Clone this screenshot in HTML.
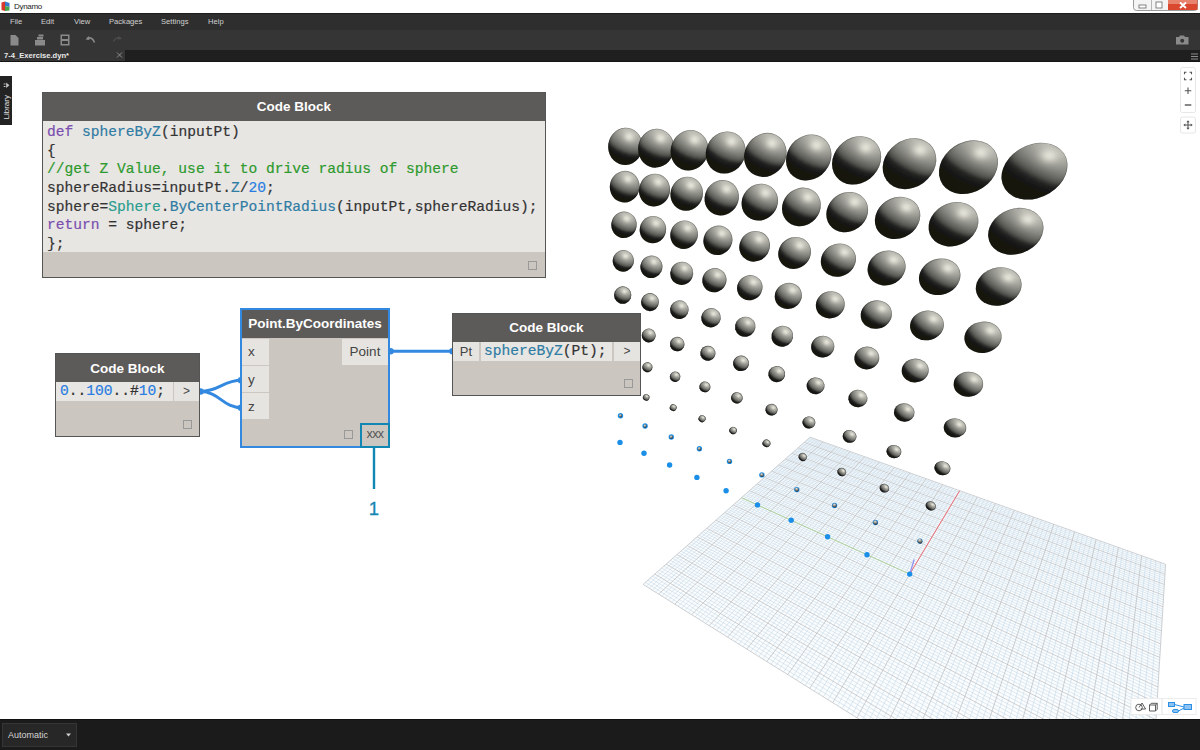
<!DOCTYPE html>
<html><head><meta charset="utf-8"><title>Dynamo</title>
<style>
*{box-sizing:border-box;margin:0;padding:0}
html,body{width:1200px;height:750px;overflow:hidden;background:#fff;font-family:"Liberation Sans",sans-serif}
#app{position:relative;width:1200px;height:750px;overflow:hidden;background:#fff}
.abs{position:absolute}
#title{left:0;top:0;width:1200px;height:13px;background:#fff}
#title .t{position:absolute;left:14px;top:1px;font-size:8px;line-height:11px;color:#222;letter-spacing:-0.3px}
#menu{left:0;top:13px;width:1200px;height:17px;background:#2e2e2e;border-top:1px solid #1c1c1c}
#menu span{position:absolute;top:3px;font-size:7.6px;line-height:10px;color:#d0d0d0}
#tool{left:0;top:30px;width:1200px;height:20px;background:#353535}
#tabs{left:0;top:50px;width:1200px;height:12px;background:#1f1f1f;border-bottom:1px solid #141414}
#tab{left:0;top:50px;width:125px;height:11px;background:#353535}
#tab .t{position:absolute;left:4px;top:1px;font-size:7.6px;line-height:10px;color:#e8e8e8;font-weight:bold}
#status{left:0;top:719px;width:1200px;height:31px;background:#1b1b1b;border-top:1px solid #111}
#auto{left:2px;top:723px;width:75px;height:24px;background:#272727;border:1px solid #353535}
#auto .t{position:absolute;left:5px;top:6px;font-size:9px;line-height:11px;color:#d4d4d4}
#lib{left:0;top:76px;width:12px;height:49px;background:#232323}
#lib .t{position:absolute;left:-16px;top:24px;width:44px;height:12px;transform:rotate(-90deg);font-size:7.5px;line-height:12px;color:#ddd;text-align:left}
.node{position:absolute;background:#cbc7c0;border:1px solid #555}
.node .hd{position:absolute;left:0;top:0;right:0;background:#5d5b59;color:#fff;font-weight:bold;text-align:center;font-size:13.5px}
.port{position:absolute;background:#e6e4e0;color:#444;font-size:13.5px}
.code{-webkit-text-stroke:0.2px;position:absolute;background:#e8e6e3;font-family:"Liberation Mono",monospace;font-size:14.6px;color:#333;white-space:pre}
.cb{position:absolute;width:9px;height:9px;border:1px solid #999}
.kw{color:#7a4fb0}.fn{color:#2f7ca3}.cm{color:#2e9a2e}.nm{color:#2a7de1}.cl{color:#2a9d8f}
</style></head><body><div id="app">
<svg class="abs" style="left:0;top:0" width="1200" height="750" viewBox="0 0 1200 750">
<polygon points="810.1,437.2 643.1,584.4 1145,897.5 1165.6,564.3" fill="#fafcfd"/>
<path d="M1145.3 891.8L645.5 582.3M1136.7 892.3L1160.7 562.5M1145.7 886.2L647.9 580.2M1128.6 887.3L1155.9 560.8M1146 880.7L650.2 578.1M1120.6 882.3L1151.1 559.1M1146.3 875.2L652.5 576.1M1112.7 877.4L1146.3 557.4M1147 864.6L657.1 572M1097.2 867.7L1136.9 554M1147.3 859.4L659.4 570M1089.6 862.9L1132.2 552.3M1147.6 854.2L661.6 568M1082.1 858.3L1127.6 550.7M1148 849.1L663.9 566.1M1074.7 853.6L1123 549M1148.6 839.2L668.3 562.2M1060.1 844.5L1113.9 545.8M1148.9 834.3L670.4 560.3M1052.9 840.1L1109.4 544.2M1149.2 829.5L672.6 558.4M1045.9 835.6L1104.9 542.6M1149.5 824.7L674.7 556.5M1038.9 831.3L1100.5 541M1150 815.4L678.9 552.8M1025.1 822.7L1091.7 537.9M1150.3 810.8L681 551M1018.4 818.5L1087.4 536.3M1150.6 806.3L683.1 549.1M1011.7 814.3L1083.1 534.8M1150.9 801.9L685.2 547.3M1005.1 810.2L1078.8 533.3M1151.4 793.1L689.2 543.7M992.2 802.2L1070.4 530.2M1151.7 788.8L691.2 542M985.8 798.2L1066.2 528.7M1152 784.6L693.2 540.2M979.5 794.2L1062 527.2M1152.2 780.4L695.2 538.5M973.3 790.4L1057.9 525.8M1152.7 772.2L699.1 535.1M961 782.7L1049.7 522.8M1153 768.1L701 533.4M955 779L1045.7 521.4M1153.2 764.1L702.9 531.7M949.1 775.2L1041.6 520M1153.5 760.2L704.8 530M943.2 771.6L1037.6 518.5M1153.9 752.5L708.6 526.7M931.6 764.3L1029.7 515.7M1154.2 748.6L710.4 525.1M925.9 760.8L1025.8 514.3M1154.4 744.9L712.2 523.4M920.2 757.3L1021.9 512.9M1154.6 741.2L714.1 521.8M914.6 753.8L1018.1 511.5M1155.1 733.9L717.7 518.7M903.7 746.9L1010.4 508.8M1155.3 730.3L719.5 517.1M898.2 743.5L1006.7 507.5M1155.5 726.7L721.2 515.5M892.9 740.2L1002.9 506.1M1155.8 723.2L723 514M887.6 736.9L999.2 504.8M1156.2 716.3L726.5 510.9M877.2 730.4L991.8 502.1M1156.4 712.9L728.2 509.4M872 727.2L988.1 500.8M1156.6 709.5L729.9 507.9M866.9 724L984.5 499.5M1156.8 706.2L731.6 506.4M861.9 720.9L980.9 498.2M1157.2 699.7L734.9 503.4M852 714.7L973.7 495.7M1157.4 696.4L736.6 502M847.1 711.6L970.2 494.4M1157.6 693.3L738.3 500.5M842.3 708.6L966.6 493.2M1157.8 690.1L739.9 499.1M837.5 705.6L963.1 491.9M1158.2 683.9L743.1 496.2M828 699.7L956.2 489.4M1158.4 680.8L744.7 494.8M823.4 696.8L952.8 488.2M1158.6 677.8L746.3 493.4M818.8 694L949.4 487M1158.8 674.8L747.9 492M814.2 691.1L946 485.8M1159.1 669L751 489.3M805.2 685.5L939.3 483.4M1159.3 666.1L752.5 487.9M800.8 682.7L935.9 482.2M1159.5 663.2L754.1 486.6M796.4 680L932.6 481M1159.7 660.3L755.6 485.2M792.1 677.3L929.3 479.8M1160 654.7L758.6 482.6M783.5 671.9L922.8 477.5M1160.2 652L760.1 481.3M779.2 669.3L919.6 476.3M1160.3 649.3L761.6 480M775.1 666.7L916.4 475.2M1160.5 646.6L763.1 478.7M770.9 664.1L913.2 474.1M1160.8 641.2L766 476.1M762.7 659L906.9 471.8M1161 638.6L767.4 474.8M758.7 656.5L903.8 470.7M1161.2 636L768.9 473.6M754.7 654L900.7 469.6M1161.3 633.4L770.3 472.3M750.7 651.5L897.6 468.5M1161.6 628.4L773.1 469.8M742.9 646.6L891.4 466.3M1161.8 625.9L774.5 468.6M739 644.2L888.4 465.2M1161.9 623.4L775.9 467.4M735.2 641.8L885.4 464.1M1162.1 620.9L777.2 466.2M731.4 639.4L882.4 463M1162.4 616.1L780 463.8M723.9 634.8L876.4 460.9M1162.5 613.7L781.3 462.6M720.2 632.4L873.5 459.9M1162.7 611.3L782.7 461.4M716.5 630.2L870.5 458.8M1162.8 609L784 460.2M712.9 627.9L867.6 457.8M1163.1 604.4L786.6 457.9M705.7 623.4L861.9 455.7M1163.3 602.1L787.9 456.7M702.1 621.2L859 454.7M1163.4 599.8L789.2 455.6M698.6 619L856.1 453.7M1163.5 597.6L790.5 454.5M695.1 616.8L853.3 452.6M1163.8 593.2L793.1 452.2M688.3 612.5L847.7 450.6M1164 591L794.3 451.1M684.9 610.4L844.9 449.6M1164.1 588.8L795.6 450M681.5 608.3L842.1 448.7M1164.2 586.7L796.9 448.9M678.2 606.2L839.4 447.7M1164.5 582.4L799.3 446.7M671.5 602.1L833.9 445.7M1164.6 580.4L800.6 445.6M668.3 600.1L831.2 444.8M1164.7 578.3L801.8 444.5M665.1 598.1L828.5 443.8M1164.9 576.2L803 443.5M661.8 596.1L825.9 442.8M1165.1 572.2L805.4 441.4M655.5 592.1L820.5 440.9M1165.2 570.2L806.6 440.3M652.4 590.1L817.9 440M1165.4 568.2L807.8 439.3M649.3 588.2L815.3 439.1M1165.5 566.2L808.9 438.2M646.2 586.3L812.7 438.1" stroke="#bfd5e4" stroke-width="0.5" fill="none"/>
<path d="M1145 897.5L643.1 584.4M1145 897.5L1165.6 564.3M1146.7 869.9L654.8 574M1104.9 872.5L1141.6 555.7M1148.3 844.1L666.1 564.1M1067.3 849L1118.4 547.4M1149.8 820L676.8 554.6M1032 827L1096.1 539.4M1151.2 797.5L687.2 545.5M998.6 806.2L1074.6 531.7M1152.5 776.3L697.1 536.8M967.1 786.5L1053.8 524.3M1153.7 756.3L706.7 528.3M937.3 767.9L1033.7 517.1M1154.9 737.5L715.9 520.2M909.1 750.3L1014.3 510.2M1156 719.7L724.7 512.4M882.4 733.6L995.5 503.5M1157 702.9L733.3 504.9M856.9 717.8L977.3 497M1158 687L741.5 497.7M832.7 702.7L959.7 490.7M1158.9 671.9L749.5 490.7M809.7 688.3L942.6 484.6M1159.8 657.5L757.1 483.9M787.7 674.6L926.1 478.7M1160.7 643.9L764.5 477.4M766.8 661.5L910 472.9M1161.5 630.9L771.7 471.1M746.8 649L894.5 467.4M1162.2 618.5L778.6 465M727.6 637.1L879.4 462M1163 606.7L785.3 459M709.3 625.6L864.7 456.7M1163.7 595.4L791.8 453.3M691.7 614.7L850.5 451.6M1164.4 584.5L798.1 447.8M674.8 604.2L836.6 446.7M1165 574.2L804.2 442.4M658.7 594.1L823.2 441.9M1165.6 564.3L810.1 437.2M643.1 584.4L810.1 437.2" stroke="#b3b8bd" stroke-width="0.65" fill="none"/>
<path d="M909.7 574.1L959.7 490.7" stroke="#f0707a" stroke-width="1"/>
<path d="M909.7 574.1L741.5 497.7" stroke="#a6d492" stroke-width="0.8"/>
<path d="M909.7 574.1L914.2 559.5" stroke="#8c8cf2" stroke-width="1.2"/>
<defs><clipPath id="uc"><circle r="1"/></clipPath><filter id="bl" x="-0.1" y="-0.1" width="1.2" height="1.2"><feGaussianBlur stdDeviation="0.06"/></filter><filter id="bl2" x="-0.1" y="-0.1" width="1.2" height="1.2"><feGaussianBlur stdDeviation="0.08"/></filter><radialGradient id="sp"><stop offset="0.000" stop-color="#fffff2" stop-opacity="0.656"/><stop offset="0.083" stop-color="#fffff2" stop-opacity="0.632"/><stop offset="0.167" stop-color="#fffff2" stop-opacity="0.563"/><stop offset="0.250" stop-color="#fffff2" stop-opacity="0.466"/><stop offset="0.333" stop-color="#fffff2" stop-opacity="0.358"/><stop offset="0.417" stop-color="#fffff2" stop-opacity="0.258"/><stop offset="0.500" stop-color="#fffff2" stop-opacity="0.175"/><stop offset="0.583" stop-color="#fffff2" stop-opacity="0.114"/><stop offset="0.667" stop-color="#fffff2" stop-opacity="0.072"/><stop offset="0.750" stop-color="#fffff2" stop-opacity="0.044"/><stop offset="0.833" stop-color="#fffff2" stop-opacity="0.026"/><stop offset="0.917" stop-color="#fffff2" stop-opacity="0.014"/><stop offset="1.000" stop-color="#fffff2" stop-opacity="0.000"/></radialGradient><radialGradient id="tg" cx="0.62" cy="0.3" r="0.8"><stop offset="0" stop-color="#e8e8e0"/><stop offset="0.45" stop-color="#8a8a84"/><stop offset="1" stop-color="#151515"/></radialGradient></defs>
<circle cx="620" cy="442.4" r="2.7" fill="#1b8fe8"/>
<circle cx="620.5" cy="415.7" r="2.7" fill="#1b8fe8"/>
<g transform="matrix(0.692 -1.394 1.395 0.694 620.5 415.7)"><circle r="1" fill="url(#tg)"/></g>
<circle cx="644" cy="453.3" r="2.7" fill="#1b8fe8"/>
<g transform="matrix(1.364 -2.881 2.882 1.362 621 387.7)"><circle r="1" fill="url(#tg)"/></g>
<circle cx="645.1" cy="426" r="2.7" fill="#1b8fe8"/>
<g transform="matrix(0.775 -1.407 1.413 0.780 645.1 426)"><circle r="1" fill="url(#tg)"/></g>
<circle cx="669.6" cy="465" r="2.7" fill="#1b8fe8"/>
<g transform="matrix(2.021 -4.475 4.465 2.012 621.6 358.4)" clip-path="url(#uc)"><g filter="url(#bl2)"><rect x="-1.1" y="-1.1" width="2.2" height="2.2" fill="#121211"/><ellipse cx="-0.272" rx="0.591" ry="0.937" fill="#181817"/><rect x="-0.451" y="-1.1" width="1.551" height="2.2" fill="#181817"/><ellipse cx="-0.136" rx="0.621" ry="0.985" fill="#222220"/><rect x="-0.226" y="-1.1" width="1.326" height="2.2" fill="#222220"/><ellipse cx="0.000" rx="0.631" ry="1.000" fill="#353532"/><rect x="0.000" y="-1.1" width="1.100" height="2.2" fill="#353532"/><ellipse cx="0.035" rx="0.630" ry="0.999" fill="#4d4d4a"/><rect x="0.059" y="-1.1" width="1.041" height="2.2" fill="#4d4d4a"/><ellipse cx="0.117" rx="0.624" ry="0.989" fill="#666662"/><rect x="0.194" y="-1.1" width="0.906" height="2.2" fill="#666662"/><ellipse cx="0.235" rx="0.601" ry="0.953" fill="#7f7f79"/><rect x="0.390" y="-1.1" width="0.710" height="2.2" fill="#7f7f79"/><ellipse cx="0.386" rx="0.548" ry="0.868" fill="#979791"/><rect x="0.641" y="-1.1" width="0.459" height="2.2" fill="#979791"/><ellipse cx="0.567" rx="0.431" ry="0.683" fill="#b0b0a8"/><rect x="0.941" y="-1.1" width="0.159" height="2.2" fill="#b0b0a8"/></g><ellipse cx="0.417" cy="0.029" rx="0.679" ry="0.75" fill="url(#sp)"/><circle r="1" fill="none" stroke="#1a1a1a" stroke-opacity="0.55" stroke-width="1.2" vector-effect="non-scaling-stroke"/></g>
<g transform="matrix(1.532 -2.917 2.927 1.529 646.2 397.4)" clip-path="url(#uc)"><g filter="url(#bl2)"><rect x="-1.1" y="-1.1" width="2.2" height="2.2" fill="#121211"/><ellipse cx="-0.262" rx="0.620" ry="0.937" fill="#181817"/><rect x="-0.467" y="-1.1" width="1.567" height="2.2" fill="#181817"/><ellipse cx="-0.131" rx="0.652" ry="0.985" fill="#222220"/><rect x="-0.234" y="-1.1" width="1.334" height="2.2" fill="#222220"/><ellipse cx="0.000" rx="0.662" ry="1.000" fill="#353532"/><rect x="0.000" y="-1.1" width="1.100" height="2.2" fill="#353532"/><ellipse cx="0.034" rx="0.662" ry="0.999" fill="#4d4d4a"/><rect x="0.061" y="-1.1" width="1.039" height="2.2" fill="#4d4d4a"/><ellipse cx="0.113" rx="0.655" ry="0.989" fill="#666662"/><rect x="0.201" y="-1.1" width="0.899" height="2.2" fill="#666662"/><ellipse cx="0.227" rx="0.631" ry="0.953" fill="#7f7f79"/><rect x="0.404" y="-1.1" width="0.696" height="2.2" fill="#7f7f79"/><ellipse cx="0.372" rx="0.575" ry="0.868" fill="#979791"/><rect x="0.663" y="-1.1" width="0.437" height="2.2" fill="#979791"/><ellipse cx="0.547" rx="0.452" ry="0.683" fill="#b0b0a8"/><rect x="0.975" y="-1.1" width="0.125" height="2.2" fill="#b0b0a8"/></g><ellipse cx="0.400" cy="0.029" rx="0.685" ry="0.75" fill="url(#sp)"/><circle r="1" fill="none" stroke="#1a1a1a" stroke-opacity="0.55" stroke-width="1.2" vector-effect="non-scaling-stroke"/></g>
<circle cx="671.3" cy="437" r="2.7" fill="#1b8fe8"/>
<g transform="matrix(0.866 -1.417 1.432 0.875 671.3 437)"><circle r="1" fill="url(#tg)"/></g>
<g transform="matrix(2.668 -6.192 6.147 2.654 622.1 327.5)" clip-path="url(#uc)"><g filter="url(#bl)"><rect x="-1.1" y="-1.1" width="2.2" height="2.2" fill="#121211"/><ellipse cx="-0.282" rx="0.556" ry="0.937" fill="#161615"/><rect x="-0.435" y="-1.1" width="1.535" height="2.2" fill="#161615"/><ellipse cx="-0.188" rx="0.577" ry="0.972" fill="#1d1d1b"/><rect x="-0.290" y="-1.1" width="1.390" height="2.2" fill="#1d1d1b"/><ellipse cx="-0.094" rx="0.589" ry="0.993" fill="#232322"/><rect x="-0.145" y="-1.1" width="1.245" height="2.2" fill="#232322"/><ellipse cx="0.000" rx="0.593" ry="1.000" fill="#2d2d2b"/><rect x="0.000" y="-1.1" width="1.100" height="2.2" fill="#2d2d2b"/><ellipse cx="0.011" rx="0.593" ry="1.000" fill="#3a3a37"/><rect x="0.017" y="-1.1" width="1.083" height="2.2" fill="#3a3a37"/><ellipse cx="0.037" rx="0.593" ry="0.999" fill="#464643"/><rect x="0.057" y="-1.1" width="1.043" height="2.2" fill="#464643"/><ellipse cx="0.074" rx="0.591" ry="0.996" fill="#52524f"/><rect x="0.114" y="-1.1" width="0.986" height="2.2" fill="#52524f"/><ellipse cx="0.121" rx="0.587" ry="0.989" fill="#5f5f5a"/><rect x="0.187" y="-1.1" width="0.913" height="2.2" fill="#5f5f5a"/><ellipse cx="0.178" rx="0.579" ry="0.975" fill="#6b6b66"/><rect x="0.275" y="-1.1" width="0.825" height="2.2" fill="#6b6b66"/><ellipse cx="0.244" rx="0.565" ry="0.953" fill="#777772"/><rect x="0.376" y="-1.1" width="0.724" height="2.2" fill="#777772"/><ellipse cx="0.318" rx="0.545" ry="0.919" fill="#84847e"/><rect x="0.490" y="-1.1" width="0.610" height="2.2" fill="#84847e"/><ellipse cx="0.400" rx="0.515" ry="0.868" fill="#90908a"/><rect x="0.617" y="-1.1" width="0.483" height="2.2" fill="#90908a"/><ellipse cx="0.490" rx="0.471" ry="0.793" fill="#9c9c95"/><rect x="0.756" y="-1.1" width="0.344" height="2.2" fill="#9c9c95"/><ellipse cx="0.588" rx="0.405" ry="0.683" fill="#a9a9a1"/><rect x="0.907" y="-1.1" width="0.193" height="2.2" fill="#a9a9a1"/><ellipse cx="0.693" rx="0.302" ry="0.509" fill="#b5b5ad"/></g><ellipse cx="0.437" cy="0.029" rx="0.672" ry="0.75" fill="url(#sp)"/><circle r="1" fill="none" stroke="#1a1a1a" stroke-opacity="0.55" stroke-width="1.2" vector-effect="non-scaling-stroke"/></g>
<circle cx="696.9" cy="477.4" r="2.7" fill="#1b8fe8"/>
<g transform="matrix(2.276 -4.542 4.545 2.253 647.4 367.2)" clip-path="url(#uc)"><g filter="url(#bl)"><rect x="-1.1" y="-1.1" width="2.2" height="2.2" fill="#121211"/><ellipse cx="-0.273" rx="0.587" ry="0.937" fill="#181817"/><rect x="-0.449" y="-1.1" width="1.549" height="2.2" fill="#181817"/><ellipse cx="-0.136" rx="0.617" ry="0.985" fill="#222220"/><rect x="-0.225" y="-1.1" width="1.325" height="2.2" fill="#222220"/><ellipse cx="0.000" rx="0.627" ry="1.000" fill="#2d2d2b"/><rect x="0.000" y="-1.1" width="1.100" height="2.2" fill="#2d2d2b"/><ellipse cx="0.011" rx="0.627" ry="1.000" fill="#3a3a37"/><rect x="0.018" y="-1.1" width="1.082" height="2.2" fill="#3a3a37"/><ellipse cx="0.035" rx="0.626" ry="0.999" fill="#464643"/><rect x="0.058" y="-1.1" width="1.042" height="2.2" fill="#464643"/><ellipse cx="0.071" rx="0.624" ry="0.996" fill="#52524f"/><rect x="0.118" y="-1.1" width="0.982" height="2.2" fill="#52524f"/><ellipse cx="0.117" rx="0.620" ry="0.989" fill="#5f5f5a"/><rect x="0.193" y="-1.1" width="0.907" height="2.2" fill="#5f5f5a"/><ellipse cx="0.172" rx="0.612" ry="0.975" fill="#6b6b66"/><rect x="0.284" y="-1.1" width="0.816" height="2.2" fill="#6b6b66"/><ellipse cx="0.236" rx="0.598" ry="0.953" fill="#777772"/><rect x="0.389" y="-1.1" width="0.711" height="2.2" fill="#777772"/><ellipse cx="0.308" rx="0.576" ry="0.919" fill="#84847e"/><rect x="0.507" y="-1.1" width="0.593" height="2.2" fill="#84847e"/><ellipse cx="0.387" rx="0.544" ry="0.868" fill="#90908a"/><rect x="0.638" y="-1.1" width="0.462" height="2.2" fill="#90908a"/><ellipse cx="0.474" rx="0.497" ry="0.793" fill="#9c9c95"/><rect x="0.782" y="-1.1" width="0.318" height="2.2" fill="#9c9c95"/><ellipse cx="0.569" rx="0.428" ry="0.683" fill="#a9a9a1"/><rect x="0.937" y="-1.1" width="0.163" height="2.2" fill="#a9a9a1"/><ellipse cx="0.670" rx="0.319" ry="0.509" fill="#b5b5ad"/></g><ellipse cx="0.420" cy="0.029" rx="0.678" ry="0.75" fill="url(#sp)"/><circle r="1" fill="none" stroke="#1a1a1a" stroke-opacity="0.55" stroke-width="1.2" vector-effect="non-scaling-stroke"/></g>
<g transform="matrix(1.717 -2.946 2.974 1.712 673.2 407.6)" clip-path="url(#uc)"><g filter="url(#bl2)"><rect x="-1.1" y="-1.1" width="2.2" height="2.2" fill="#121211"/><ellipse cx="-0.264" rx="0.616" ry="0.937" fill="#181817"/><rect x="-0.464" y="-1.1" width="1.564" height="2.2" fill="#181817"/><ellipse cx="-0.132" rx="0.647" ry="0.985" fill="#222220"/><rect x="-0.232" y="-1.1" width="1.332" height="2.2" fill="#222220"/><ellipse cx="0.000" rx="0.657" ry="1.000" fill="#353532"/><rect x="0.000" y="-1.1" width="1.100" height="2.2" fill="#353532"/><ellipse cx="0.034" rx="0.657" ry="0.999" fill="#4d4d4a"/><rect x="0.060" y="-1.1" width="1.040" height="2.2" fill="#4d4d4a"/><ellipse cx="0.113" rx="0.650" ry="0.989" fill="#666662"/><rect x="0.200" y="-1.1" width="0.900" height="2.2" fill="#666662"/><ellipse cx="0.228" rx="0.626" ry="0.953" fill="#7f7f79"/><rect x="0.402" y="-1.1" width="0.698" height="2.2" fill="#7f7f79"/><ellipse cx="0.375" rx="0.570" ry="0.868" fill="#979791"/><rect x="0.660" y="-1.1" width="0.440" height="2.2" fill="#979791"/><ellipse cx="0.550" rx="0.449" ry="0.683" fill="#b0b0a8"/><rect x="0.969" y="-1.1" width="0.131" height="2.2" fill="#b0b0a8"/></g><ellipse cx="0.405" cy="0.029" rx="0.683" ry="0.75" fill="url(#sp)"/><circle r="1" fill="none" stroke="#1a1a1a" stroke-opacity="0.55" stroke-width="1.2" vector-effect="non-scaling-stroke"/></g>
<g transform="matrix(3.311 -8.057 7.930 3.298 622.7 295.1)" clip-path="url(#uc)"><g filter="url(#bl)"><rect x="-1.1" y="-1.1" width="2.2" height="2.2" fill="#121211"/><ellipse cx="-0.292" rx="0.517" ry="0.937" fill="#161615"/><rect x="-0.420" y="-1.1" width="1.520" height="2.2" fill="#161615"/><ellipse cx="-0.194" rx="0.537" ry="0.972" fill="#1d1d1b"/><rect x="-0.280" y="-1.1" width="1.380" height="2.2" fill="#1d1d1b"/><ellipse cx="-0.097" rx="0.549" ry="0.993" fill="#232322"/><rect x="-0.140" y="-1.1" width="1.240" height="2.2" fill="#232322"/><ellipse cx="0.000" rx="0.552" ry="1.000" fill="#2d2d2b"/><rect x="0.000" y="-1.1" width="1.100" height="2.2" fill="#2d2d2b"/><ellipse cx="0.011" rx="0.552" ry="1.000" fill="#3a3a37"/><rect x="0.017" y="-1.1" width="1.083" height="2.2" fill="#3a3a37"/><ellipse cx="0.038" rx="0.552" ry="0.999" fill="#464643"/><rect x="0.055" y="-1.1" width="1.045" height="2.2" fill="#464643"/><ellipse cx="0.076" rx="0.550" ry="0.996" fill="#52524f"/><rect x="0.110" y="-1.1" width="0.990" height="2.2" fill="#52524f"/><ellipse cx="0.125" rx="0.546" ry="0.989" fill="#5f5f5a"/><rect x="0.180" y="-1.1" width="0.920" height="2.2" fill="#5f5f5a"/><ellipse cx="0.184" rx="0.539" ry="0.975" fill="#6b6b66"/><rect x="0.265" y="-1.1" width="0.835" height="2.2" fill="#6b6b66"/><ellipse cx="0.252" rx="0.527" ry="0.953" fill="#777772"/><rect x="0.363" y="-1.1" width="0.737" height="2.2" fill="#777772"/><ellipse cx="0.329" rx="0.508" ry="0.919" fill="#84847e"/><rect x="0.474" y="-1.1" width="0.626" height="2.2" fill="#84847e"/><ellipse cx="0.414" rx="0.479" ry="0.868" fill="#90908a"/><rect x="0.596" y="-1.1" width="0.504" height="2.2" fill="#90908a"/><ellipse cx="0.508" rx="0.438" ry="0.793" fill="#9c9c95"/><rect x="0.731" y="-1.1" width="0.369" height="2.2" fill="#9c9c95"/><ellipse cx="0.609" rx="0.377" ry="0.683" fill="#a9a9a1"/><rect x="0.876" y="-1.1" width="0.224" height="2.2" fill="#a9a9a1"/><ellipse cx="0.717" rx="0.281" ry="0.509" fill="#b5b5ad"/></g><ellipse cx="0.458" cy="0.029" rx="0.663" ry="0.75" fill="url(#sp)"/><circle r="1" fill="none" stroke="#1a1a1a" stroke-opacity="0.55" stroke-width="1.2" vector-effect="non-scaling-stroke"/></g>
<circle cx="699.4" cy="448.8" r="2.7" fill="#1b8fe8"/>
<g transform="matrix(0.966 -1.422 1.452 0.978 699.4 448.8)"><circle r="1" fill="url(#tg)"/></g>
<g transform="matrix(3.013 -6.302 6.270 2.964 648.7 335.5)" clip-path="url(#uc)"><g filter="url(#bl)"><rect x="-1.1" y="-1.1" width="2.2" height="2.2" fill="#121211"/><ellipse cx="-0.283" rx="0.551" ry="0.937" fill="#161615"/><rect x="-0.433" y="-1.1" width="1.533" height="2.2" fill="#161615"/><ellipse cx="-0.189" rx="0.572" ry="0.972" fill="#1d1d1b"/><rect x="-0.289" y="-1.1" width="1.389" height="2.2" fill="#1d1d1b"/><ellipse cx="-0.094" rx="0.584" ry="0.993" fill="#232322"/><rect x="-0.144" y="-1.1" width="1.244" height="2.2" fill="#232322"/><ellipse cx="0.000" rx="0.588" ry="1.000" fill="#2d2d2b"/><rect x="0.000" y="-1.1" width="1.100" height="2.2" fill="#2d2d2b"/><ellipse cx="0.011" rx="0.588" ry="1.000" fill="#3a3a37"/><rect x="0.017" y="-1.1" width="1.083" height="2.2" fill="#3a3a37"/><ellipse cx="0.037" rx="0.588" ry="0.999" fill="#464643"/><rect x="0.056" y="-1.1" width="1.044" height="2.2" fill="#464643"/><ellipse cx="0.074" rx="0.586" ry="0.996" fill="#52524f"/><rect x="0.113" y="-1.1" width="0.987" height="2.2" fill="#52524f"/><ellipse cx="0.122" rx="0.582" ry="0.989" fill="#5f5f5a"/><rect x="0.186" y="-1.1" width="0.914" height="2.2" fill="#5f5f5a"/><ellipse cx="0.179" rx="0.574" ry="0.975" fill="#6b6b66"/><rect x="0.273" y="-1.1" width="0.827" height="2.2" fill="#6b6b66"/><ellipse cx="0.245" rx="0.561" ry="0.953" fill="#777772"/><rect x="0.374" y="-1.1" width="0.726" height="2.2" fill="#777772"/><ellipse cx="0.319" rx="0.541" ry="0.919" fill="#84847e"/><rect x="0.488" y="-1.1" width="0.612" height="2.2" fill="#84847e"/><ellipse cx="0.402" rx="0.511" ry="0.868" fill="#90908a"/><rect x="0.615" y="-1.1" width="0.485" height="2.2" fill="#90908a"/><ellipse cx="0.492" rx="0.467" ry="0.793" fill="#9c9c95"/><rect x="0.753" y="-1.1" width="0.347" height="2.2" fill="#9c9c95"/><ellipse cx="0.590" rx="0.402" ry="0.683" fill="#a9a9a1"/><rect x="0.903" y="-1.1" width="0.197" height="2.2" fill="#a9a9a1"/><ellipse cx="0.696" rx="0.300" ry="0.509" fill="#b5b5ad"/></g><ellipse cx="0.441" cy="0.029" rx="0.670" ry="0.75" fill="url(#sp)"/><circle r="1" fill="none" stroke="#1a1a1a" stroke-opacity="0.55" stroke-width="1.2" vector-effect="non-scaling-stroke"/></g>
<circle cx="726.1" cy="490.7" r="2.7" fill="#1b8fe8"/>
<g transform="matrix(2.558 -4.602 4.630 2.520 675.1 376.7)" clip-path="url(#uc)"><g filter="url(#bl)"><rect x="-1.1" y="-1.1" width="2.2" height="2.2" fill="#121211"/><ellipse cx="-0.274" rx="0.582" ry="0.937" fill="#181817"/><rect x="-0.447" y="-1.1" width="1.547" height="2.2" fill="#181817"/><ellipse cx="-0.137" rx="0.612" ry="0.985" fill="#222220"/><rect x="-0.223" y="-1.1" width="1.323" height="2.2" fill="#222220"/><ellipse cx="0.000" rx="0.621" ry="1.000" fill="#2d2d2b"/><rect x="0.000" y="-1.1" width="1.100" height="2.2" fill="#2d2d2b"/><ellipse cx="0.011" rx="0.621" ry="1.000" fill="#3a3a37"/><rect x="0.018" y="-1.1" width="1.082" height="2.2" fill="#3a3a37"/><ellipse cx="0.036" rx="0.621" ry="0.999" fill="#464643"/><rect x="0.058" y="-1.1" width="1.042" height="2.2" fill="#464643"/><ellipse cx="0.072" rx="0.619" ry="0.996" fill="#52524f"/><rect x="0.117" y="-1.1" width="0.983" height="2.2" fill="#52524f"/><ellipse cx="0.118" rx="0.614" ry="0.989" fill="#5f5f5a"/><rect x="0.192" y="-1.1" width="0.908" height="2.2" fill="#5f5f5a"/><ellipse cx="0.173" rx="0.606" ry="0.975" fill="#6b6b66"/><rect x="0.282" y="-1.1" width="0.818" height="2.2" fill="#6b6b66"/><ellipse cx="0.237" rx="0.592" ry="0.953" fill="#777772"/><rect x="0.386" y="-1.1" width="0.714" height="2.2" fill="#777772"/><ellipse cx="0.309" rx="0.571" ry="0.919" fill="#84847e"/><rect x="0.504" y="-1.1" width="0.596" height="2.2" fill="#84847e"/><ellipse cx="0.389" rx="0.539" ry="0.868" fill="#90908a"/><rect x="0.634" y="-1.1" width="0.466" height="2.2" fill="#90908a"/><ellipse cx="0.477" rx="0.493" ry="0.793" fill="#9c9c95"/><rect x="0.777" y="-1.1" width="0.323" height="2.2" fill="#9c9c95"/><ellipse cx="0.572" rx="0.424" ry="0.683" fill="#a9a9a1"/><rect x="0.932" y="-1.1" width="0.168" height="2.2" fill="#a9a9a1"/><ellipse cx="0.674" rx="0.316" ry="0.509" fill="#b5b5ad"/></g><ellipse cx="0.425" cy="0.030" rx="0.676" ry="0.75" fill="url(#sp)"/><circle r="1" fill="none" stroke="#1a1a1a" stroke-opacity="0.55" stroke-width="1.2" vector-effect="non-scaling-stroke"/></g>
<g transform="matrix(3.957 -10.095 9.821 3.958 623.3 260.9)" clip-path="url(#uc)"><g filter="url(#bl)"><rect x="-1.1" y="-1.1" width="2.2" height="2.2" fill="#121211"/><ellipse cx="-0.301" rx="0.476" ry="0.937" fill="#161615"/><rect x="-0.406" y="-1.1" width="1.506" height="2.2" fill="#161615"/><ellipse cx="-0.201" rx="0.494" ry="0.972" fill="#1d1d1b"/><rect x="-0.271" y="-1.1" width="1.371" height="2.2" fill="#1d1d1b"/><ellipse cx="-0.100" rx="0.505" ry="0.993" fill="#232322"/><rect x="-0.135" y="-1.1" width="1.235" height="2.2" fill="#232322"/><ellipse cx="0.000" rx="0.508" ry="1.000" fill="#2d2d2b"/><rect x="0.000" y="-1.1" width="1.100" height="2.2" fill="#2d2d2b"/><ellipse cx="0.012" rx="0.508" ry="1.000" fill="#3a3a37"/><rect x="0.016" y="-1.1" width="1.084" height="2.2" fill="#3a3a37"/><ellipse cx="0.039" rx="0.508" ry="0.999" fill="#464643"/><rect x="0.053" y="-1.1" width="1.047" height="2.2" fill="#464643"/><ellipse cx="0.079" rx="0.506" ry="0.996" fill="#52524f"/><rect x="0.106" y="-1.1" width="0.994" height="2.2" fill="#52524f"/><ellipse cx="0.130" rx="0.503" ry="0.989" fill="#5f5f5a"/><rect x="0.175" y="-1.1" width="0.925" height="2.2" fill="#5f5f5a"/><ellipse cx="0.190" rx="0.496" ry="0.975" fill="#6b6b66"/><rect x="0.257" y="-1.1" width="0.843" height="2.2" fill="#6b6b66"/><ellipse cx="0.261" rx="0.485" ry="0.953" fill="#777772"/><rect x="0.352" y="-1.1" width="0.748" height="2.2" fill="#777772"/><ellipse cx="0.340" rx="0.467" ry="0.919" fill="#84847e"/><rect x="0.459" y="-1.1" width="0.641" height="2.2" fill="#84847e"/><ellipse cx="0.428" rx="0.441" ry="0.868" fill="#90908a"/><rect x="0.577" y="-1.1" width="0.523" height="2.2" fill="#90908a"/><ellipse cx="0.524" rx="0.403" ry="0.793" fill="#9c9c95"/><rect x="0.707" y="-1.1" width="0.393" height="2.2" fill="#9c9c95"/><ellipse cx="0.629" rx="0.347" ry="0.683" fill="#a9a9a1"/><rect x="0.848" y="-1.1" width="0.252" height="2.2" fill="#a9a9a1"/><ellipse cx="0.741" rx="0.259" ry="0.509" fill="#b5b5ad"/><rect x="1.000" y="-1.1" width="0.100" height="2.2" fill="#b5b5ad"/></g><ellipse cx="0.480" cy="0.029" rx="0.654" ry="0.75" fill="url(#sp)"/><circle r="1" fill="none" stroke="#1a1a1a" stroke-opacity="0.35" stroke-width="1.2" vector-effect="non-scaling-stroke"/></g>
<g transform="matrix(1.920 -2.968 3.025 1.914 702.1 418.7)" clip-path="url(#uc)"><g filter="url(#bl2)"><rect x="-1.1" y="-1.1" width="2.2" height="2.2" fill="#121211"/><ellipse cx="-0.266" rx="0.609" ry="0.937" fill="#181817"/><rect x="-0.461" y="-1.1" width="1.561" height="2.2" fill="#181817"/><ellipse cx="-0.133" rx="0.640" ry="0.985" fill="#222220"/><rect x="-0.230" y="-1.1" width="1.330" height="2.2" fill="#222220"/><ellipse cx="0.000" rx="0.650" ry="1.000" fill="#353532"/><rect x="0.000" y="-1.1" width="1.100" height="2.2" fill="#353532"/><ellipse cx="0.035" rx="0.650" ry="0.999" fill="#4d4d4a"/><rect x="0.060" y="-1.1" width="1.040" height="2.2" fill="#4d4d4a"/><ellipse cx="0.114" rx="0.643" ry="0.989" fill="#666662"/><rect x="0.198" y="-1.1" width="0.902" height="2.2" fill="#666662"/><ellipse cx="0.230" rx="0.620" ry="0.953" fill="#7f7f79"/><rect x="0.398" y="-1.1" width="0.702" height="2.2" fill="#7f7f79"/><ellipse cx="0.378" rx="0.564" ry="0.868" fill="#979791"/><rect x="0.654" y="-1.1" width="0.446" height="2.2" fill="#979791"/><ellipse cx="0.555" rx="0.444" ry="0.683" fill="#b0b0a8"/><rect x="0.961" y="-1.1" width="0.139" height="2.2" fill="#b0b0a8"/></g><ellipse cx="0.410" cy="0.030" rx="0.681" ry="0.75" fill="url(#sp)"/><circle r="1" fill="none" stroke="#1a1a1a" stroke-opacity="0.55" stroke-width="1.2" vector-effect="non-scaling-stroke"/></g>
<g transform="matrix(3.750 -8.221 8.105 3.670 650 302.1)" clip-path="url(#uc)"><g filter="url(#bl)"><rect x="-1.1" y="-1.1" width="2.2" height="2.2" fill="#121211"/><ellipse cx="-0.293" rx="0.512" ry="0.937" fill="#161615"/><rect x="-0.418" y="-1.1" width="1.518" height="2.2" fill="#161615"/><ellipse cx="-0.195" rx="0.531" ry="0.972" fill="#1d1d1b"/><rect x="-0.279" y="-1.1" width="1.379" height="2.2" fill="#1d1d1b"/><ellipse cx="-0.098" rx="0.543" ry="0.993" fill="#232322"/><rect x="-0.139" y="-1.1" width="1.239" height="2.2" fill="#232322"/><ellipse cx="0.000" rx="0.546" ry="1.000" fill="#2d2d2b"/><rect x="0.000" y="-1.1" width="1.100" height="2.2" fill="#2d2d2b"/><ellipse cx="0.012" rx="0.546" ry="1.000" fill="#3a3a37"/><rect x="0.016" y="-1.1" width="1.084" height="2.2" fill="#3a3a37"/><ellipse cx="0.038" rx="0.546" ry="0.999" fill="#464643"/><rect x="0.054" y="-1.1" width="1.046" height="2.2" fill="#464643"/><ellipse cx="0.077" rx="0.544" ry="0.996" fill="#52524f"/><rect x="0.109" y="-1.1" width="0.991" height="2.2" fill="#52524f"/><ellipse cx="0.126" rx="0.540" ry="0.989" fill="#5f5f5a"/><rect x="0.180" y="-1.1" width="0.920" height="2.2" fill="#5f5f5a"/><ellipse cx="0.185" rx="0.533" ry="0.975" fill="#6b6b66"/><rect x="0.264" y="-1.1" width="0.836" height="2.2" fill="#6b6b66"/><ellipse cx="0.254" rx="0.521" ry="0.953" fill="#777772"/><rect x="0.361" y="-1.1" width="0.739" height="2.2" fill="#777772"/><ellipse cx="0.331" rx="0.502" ry="0.919" fill="#84847e"/><rect x="0.471" y="-1.1" width="0.629" height="2.2" fill="#84847e"/><ellipse cx="0.416" rx="0.474" ry="0.868" fill="#90908a"/><rect x="0.593" y="-1.1" width="0.507" height="2.2" fill="#90908a"/><ellipse cx="0.510" rx="0.433" ry="0.793" fill="#9c9c95"/><rect x="0.727" y="-1.1" width="0.373" height="2.2" fill="#9c9c95"/><ellipse cx="0.612" rx="0.373" ry="0.683" fill="#a9a9a1"/><rect x="0.872" y="-1.1" width="0.228" height="2.2" fill="#a9a9a1"/><ellipse cx="0.721" rx="0.278" ry="0.509" fill="#b5b5ad"/></g><ellipse cx="0.463" cy="0.030" rx="0.662" ry="0.75" fill="url(#sp)"/><circle r="1" fill="none" stroke="#1a1a1a" stroke-opacity="0.55" stroke-width="1.2" vector-effect="non-scaling-stroke"/></g>
<circle cx="729.5" cy="461.4" r="2.7" fill="#1b8fe8"/>
<g transform="matrix(1.074 -1.422 1.475 1.090 729.5 461.4)"><circle r="1" fill="url(#tg)"/></g>
<g transform="matrix(3.396 -6.406 6.403 3.306 677.2 344.1)" clip-path="url(#uc)"><g filter="url(#bl)"><rect x="-1.1" y="-1.1" width="2.2" height="2.2" fill="#121211"/><ellipse cx="-0.285" rx="0.545" ry="0.937" fill="#161615"/><rect x="-0.430" y="-1.1" width="1.530" height="2.2" fill="#161615"/><ellipse cx="-0.190" rx="0.566" ry="0.972" fill="#1d1d1b"/><rect x="-0.287" y="-1.1" width="1.387" height="2.2" fill="#1d1d1b"/><ellipse cx="-0.095" rx="0.578" ry="0.993" fill="#232322"/><rect x="-0.143" y="-1.1" width="1.243" height="2.2" fill="#232322"/><ellipse cx="0.000" rx="0.582" ry="1.000" fill="#2d2d2b"/><rect x="0.000" y="-1.1" width="1.100" height="2.2" fill="#2d2d2b"/><ellipse cx="0.011" rx="0.582" ry="1.000" fill="#3a3a37"/><rect x="0.017" y="-1.1" width="1.083" height="2.2" fill="#3a3a37"/><ellipse cx="0.037" rx="0.581" ry="0.999" fill="#464643"/><rect x="0.056" y="-1.1" width="1.044" height="2.2" fill="#464643"/><ellipse cx="0.075" rx="0.579" ry="0.996" fill="#52524f"/><rect x="0.113" y="-1.1" width="0.987" height="2.2" fill="#52524f"/><ellipse cx="0.122" rx="0.575" ry="0.989" fill="#5f5f5a"/><rect x="0.185" y="-1.1" width="0.915" height="2.2" fill="#5f5f5a"/><ellipse cx="0.180" rx="0.567" ry="0.975" fill="#6b6b66"/><rect x="0.272" y="-1.1" width="0.828" height="2.2" fill="#6b6b66"/><ellipse cx="0.246" rx="0.554" ry="0.953" fill="#777772"/><rect x="0.372" y="-1.1" width="0.728" height="2.2" fill="#777772"/><ellipse cx="0.321" rx="0.534" ry="0.919" fill="#84847e"/><rect x="0.485" y="-1.1" width="0.615" height="2.2" fill="#84847e"/><ellipse cx="0.404" rx="0.505" ry="0.868" fill="#90908a"/><rect x="0.611" y="-1.1" width="0.489" height="2.2" fill="#90908a"/><ellipse cx="0.495" rx="0.461" ry="0.793" fill="#9c9c95"/><rect x="0.749" y="-1.1" width="0.351" height="2.2" fill="#9c9c95"/><ellipse cx="0.594" rx="0.397" ry="0.683" fill="#a9a9a1"/><rect x="0.898" y="-1.1" width="0.202" height="2.2" fill="#a9a9a1"/><ellipse cx="0.700" rx="0.296" ry="0.509" fill="#b5b5ad"/></g><ellipse cx="0.446" cy="0.030" rx="0.668" ry="0.75" fill="url(#sp)"/><circle r="1" fill="none" stroke="#1a1a1a" stroke-opacity="0.55" stroke-width="1.2" vector-effect="non-scaling-stroke"/></g>
<circle cx="757.5" cy="504.9" r="2.7" fill="#1b8fe8"/>
<g transform="matrix(4.615 -12.343 11.823 4.647 624 224.8)" clip-path="url(#uc)"><g filter="url(#bl)"><rect x="-1.1" y="-1.1" width="2.2" height="2.2" fill="#121211"/><ellipse cx="-0.310" rx="0.432" ry="0.937" fill="#141413"/><rect x="-0.395" y="-1.1" width="1.495" height="2.2" fill="#141413"/><ellipse cx="-0.248" rx="0.443" ry="0.960" fill="#181817"/><rect x="-0.316" y="-1.1" width="1.416" height="2.2" fill="#181817"/><ellipse cx="-0.186" rx="0.451" ry="0.978" fill="#1c1c1b"/><rect x="-0.237" y="-1.1" width="1.337" height="2.2" fill="#1c1c1b"/><ellipse cx="-0.124" rx="0.457" ry="0.990" fill="#20201f"/><rect x="-0.158" y="-1.1" width="1.258" height="2.2" fill="#20201f"/><ellipse cx="-0.062" rx="0.461" ry="0.998" fill="#242423"/><rect x="-0.079" y="-1.1" width="1.179" height="2.2" fill="#242423"/><ellipse cx="0.000" rx="0.462" ry="1.000" fill="#2d2d2b"/><rect x="0.000" y="-1.1" width="1.100" height="2.2" fill="#2d2d2b"/><ellipse cx="0.012" rx="0.462" ry="1.000" fill="#3a3a37"/><rect x="0.016" y="-1.1" width="1.084" height="2.2" fill="#3a3a37"/><ellipse cx="0.040" rx="0.461" ry="0.999" fill="#464643"/><rect x="0.051" y="-1.1" width="1.049" height="2.2" fill="#464643"/><ellipse cx="0.081" rx="0.460" ry="0.996" fill="#52524f"/><rect x="0.103" y="-1.1" width="0.997" height="2.2" fill="#52524f"/><ellipse cx="0.133" rx="0.456" ry="0.989" fill="#5f5f5a"/><rect x="0.170" y="-1.1" width="0.930" height="2.2" fill="#5f5f5a"/><ellipse cx="0.196" rx="0.450" ry="0.975" fill="#6b6b66"/><rect x="0.249" y="-1.1" width="0.851" height="2.2" fill="#6b6b66"/><ellipse cx="0.268" rx="0.440" ry="0.953" fill="#777772"/><rect x="0.341" y="-1.1" width="0.759" height="2.2" fill="#777772"/><ellipse cx="0.350" rx="0.424" ry="0.919" fill="#84847e"/><rect x="0.445" y="-1.1" width="0.655" height="2.2" fill="#84847e"/><ellipse cx="0.441" rx="0.401" ry="0.868" fill="#90908a"/><rect x="0.560" y="-1.1" width="0.540" height="2.2" fill="#90908a"/><ellipse cx="0.540" rx="0.366" ry="0.793" fill="#9c9c95"/><rect x="0.686" y="-1.1" width="0.414" height="2.2" fill="#9c9c95"/><ellipse cx="0.648" rx="0.315" ry="0.683" fill="#a9a9a1"/><rect x="0.823" y="-1.1" width="0.277" height="2.2" fill="#a9a9a1"/><ellipse cx="0.763" rx="0.235" ry="0.509" fill="#b5b5ad"/><rect x="0.970" y="-1.1" width="0.130" height="2.2" fill="#b5b5ad"/></g><ellipse cx="0.503" cy="0.029" rx="0.645" ry="0.75" fill="url(#sp)"/><circle r="1" fill="none" stroke="#1a1a1a" stroke-opacity="0.35" stroke-width="1.2" vector-effect="non-scaling-stroke"/></g>
<g transform="matrix(2.869 -4.654 4.723 2.814 704.9 386.9)" clip-path="url(#uc)"><g filter="url(#bl)"><rect x="-1.1" y="-1.1" width="2.2" height="2.2" fill="#121211"/><ellipse cx="-0.276" rx="0.575" ry="0.937" fill="#181817"/><rect x="-0.443" y="-1.1" width="1.543" height="2.2" fill="#181817"/><ellipse cx="-0.138" rx="0.604" ry="0.985" fill="#222220"/><rect x="-0.222" y="-1.1" width="1.322" height="2.2" fill="#222220"/><ellipse cx="0.000" rx="0.614" ry="1.000" fill="#2d2d2b"/><rect x="0.000" y="-1.1" width="1.100" height="2.2" fill="#2d2d2b"/><ellipse cx="0.011" rx="0.614" ry="1.000" fill="#3a3a37"/><rect x="0.017" y="-1.1" width="1.083" height="2.2" fill="#3a3a37"/><ellipse cx="0.036" rx="0.613" ry="0.999" fill="#464643"/><rect x="0.058" y="-1.1" width="1.042" height="2.2" fill="#464643"/><ellipse cx="0.072" rx="0.611" ry="0.996" fill="#52524f"/><rect x="0.116" y="-1.1" width="0.984" height="2.2" fill="#52524f"/><ellipse cx="0.119" rx="0.607" ry="0.989" fill="#5f5f5a"/><rect x="0.191" y="-1.1" width="0.909" height="2.2" fill="#5f5f5a"/><ellipse cx="0.175" rx="0.598" ry="0.975" fill="#6b6b66"/><rect x="0.280" y="-1.1" width="0.820" height="2.2" fill="#6b6b66"/><ellipse cx="0.239" rx="0.585" ry="0.953" fill="#777772"/><rect x="0.383" y="-1.1" width="0.717" height="2.2" fill="#777772"/><ellipse cx="0.312" rx="0.564" ry="0.919" fill="#84847e"/><rect x="0.500" y="-1.1" width="0.600" height="2.2" fill="#84847e"/><ellipse cx="0.392" rx="0.532" ry="0.868" fill="#90908a"/><rect x="0.629" y="-1.1" width="0.471" height="2.2" fill="#90908a"/><ellipse cx="0.481" rx="0.487" ry="0.793" fill="#9c9c95"/><rect x="0.771" y="-1.1" width="0.329" height="2.2" fill="#9c9c95"/><ellipse cx="0.577" rx="0.419" ry="0.683" fill="#a9a9a1"/><rect x="0.925" y="-1.1" width="0.175" height="2.2" fill="#a9a9a1"/><ellipse cx="0.680" rx="0.312" ry="0.509" fill="#b5b5ad"/></g><ellipse cx="0.431" cy="0.030" rx="0.674" ry="0.75" fill="url(#sp)"/><circle r="1" fill="none" stroke="#1a1a1a" stroke-opacity="0.55" stroke-width="1.2" vector-effect="non-scaling-stroke"/></g>
<g transform="matrix(4.496 -10.330 10.057 4.385 651.4 266.8)" clip-path="url(#uc)"><g filter="url(#bl)"><rect x="-1.1" y="-1.1" width="2.2" height="2.2" fill="#121211"/><ellipse cx="-0.303" rx="0.469" ry="0.937" fill="#161615"/><rect x="-0.404" y="-1.1" width="1.504" height="2.2" fill="#161615"/><ellipse cx="-0.202" rx="0.487" ry="0.972" fill="#1d1d1b"/><rect x="-0.270" y="-1.1" width="1.370" height="2.2" fill="#1d1d1b"/><ellipse cx="-0.101" rx="0.498" ry="0.993" fill="#232322"/><rect x="-0.135" y="-1.1" width="1.235" height="2.2" fill="#232322"/><ellipse cx="0.000" rx="0.501" ry="1.000" fill="#2d2d2b"/><rect x="0.000" y="-1.1" width="1.100" height="2.2" fill="#2d2d2b"/><ellipse cx="0.012" rx="0.501" ry="1.000" fill="#3a3a37"/><rect x="0.016" y="-1.1" width="1.084" height="2.2" fill="#3a3a37"/><ellipse cx="0.039" rx="0.501" ry="0.999" fill="#464643"/><rect x="0.053" y="-1.1" width="1.047" height="2.2" fill="#464643"/><ellipse cx="0.079" rx="0.499" ry="0.996" fill="#52524f"/><rect x="0.106" y="-1.1" width="0.994" height="2.2" fill="#52524f"/><ellipse cx="0.130" rx="0.495" ry="0.989" fill="#5f5f5a"/><rect x="0.174" y="-1.1" width="0.926" height="2.2" fill="#5f5f5a"/><ellipse cx="0.191" rx="0.489" ry="0.975" fill="#6b6b66"/><rect x="0.255" y="-1.1" width="0.845" height="2.2" fill="#6b6b66"/><ellipse cx="0.262" rx="0.478" ry="0.953" fill="#777772"/><rect x="0.350" y="-1.1" width="0.750" height="2.2" fill="#777772"/><ellipse cx="0.342" rx="0.460" ry="0.919" fill="#84847e"/><rect x="0.456" y="-1.1" width="0.644" height="2.2" fill="#84847e"/><ellipse cx="0.430" rx="0.435" ry="0.868" fill="#90908a"/><rect x="0.574" y="-1.1" width="0.526" height="2.2" fill="#90908a"/><ellipse cx="0.527" rx="0.397" ry="0.793" fill="#9c9c95"/><rect x="0.704" y="-1.1" width="0.396" height="2.2" fill="#9c9c95"/><ellipse cx="0.632" rx="0.342" ry="0.683" fill="#a9a9a1"/><rect x="0.844" y="-1.1" width="0.256" height="2.2" fill="#a9a9a1"/><ellipse cx="0.745" rx="0.255" ry="0.509" fill="#b5b5ad"/><rect x="0.995" y="-1.1" width="0.105" height="2.2" fill="#b5b5ad"/></g><ellipse cx="0.485" cy="0.030" rx="0.652" ry="0.75" fill="url(#sp)"/><circle r="1" fill="none" stroke="#1a1a1a" stroke-opacity="0.35" stroke-width="1.2" vector-effect="non-scaling-stroke"/></g>
<g transform="matrix(2.143 -2.982 3.083 2.134 733.1 430.5)" clip-path="url(#uc)"><g filter="url(#bl2)"><rect x="-1.1" y="-1.1" width="2.2" height="2.2" fill="#121211"/><ellipse cx="-0.269" rx="0.601" ry="0.937" fill="#181817"/><rect x="-0.456" y="-1.1" width="1.556" height="2.2" fill="#181817"/><ellipse cx="-0.134" rx="0.631" ry="0.985" fill="#222220"/><rect x="-0.228" y="-1.1" width="1.328" height="2.2" fill="#222220"/><ellipse cx="0.000" rx="0.641" ry="1.000" fill="#353532"/><rect x="0.000" y="-1.1" width="1.100" height="2.2" fill="#353532"/><ellipse cx="0.035" rx="0.640" ry="0.999" fill="#4d4d4a"/><rect x="0.059" y="-1.1" width="1.041" height="2.2" fill="#4d4d4a"/><ellipse cx="0.115" rx="0.634" ry="0.989" fill="#666662"/><rect x="0.196" y="-1.1" width="0.904" height="2.2" fill="#666662"/><ellipse cx="0.232" rx="0.611" ry="0.953" fill="#7f7f79"/><rect x="0.394" y="-1.1" width="0.706" height="2.2" fill="#7f7f79"/><ellipse cx="0.381" rx="0.556" ry="0.868" fill="#979791"/><rect x="0.648" y="-1.1" width="0.452" height="2.2" fill="#979791"/><ellipse cx="0.560" rx="0.438" ry="0.683" fill="#b0b0a8"/><rect x="0.952" y="-1.1" width="0.148" height="2.2" fill="#b0b0a8"/></g><ellipse cx="0.418" cy="0.030" rx="0.679" ry="0.75" fill="url(#sp)"/><circle r="1" fill="none" stroke="#1a1a1a" stroke-opacity="0.55" stroke-width="1.2" vector-effect="non-scaling-stroke"/></g>
<g transform="matrix(4.240 -8.382 8.297 4.082 679.4 309.7)" clip-path="url(#uc)"><g filter="url(#bl)"><rect x="-1.1" y="-1.1" width="2.2" height="2.2" fill="#121211"/><ellipse cx="-0.295" rx="0.504" ry="0.937" fill="#161615"/><rect x="-0.415" y="-1.1" width="1.515" height="2.2" fill="#161615"/><ellipse cx="-0.197" rx="0.524" ry="0.972" fill="#1d1d1b"/><rect x="-0.277" y="-1.1" width="1.377" height="2.2" fill="#1d1d1b"/><ellipse cx="-0.098" rx="0.535" ry="0.993" fill="#232322"/><rect x="-0.138" y="-1.1" width="1.238" height="2.2" fill="#232322"/><ellipse cx="0.000" rx="0.539" ry="1.000" fill="#2d2d2b"/><rect x="0.000" y="-1.1" width="1.100" height="2.2" fill="#2d2d2b"/><ellipse cx="0.012" rx="0.538" ry="1.000" fill="#3a3a37"/><rect x="0.016" y="-1.1" width="1.084" height="2.2" fill="#3a3a37"/><ellipse cx="0.038" rx="0.538" ry="0.999" fill="#464643"/><rect x="0.054" y="-1.1" width="1.046" height="2.2" fill="#464643"/><ellipse cx="0.077" rx="0.536" ry="0.996" fill="#52524f"/><rect x="0.109" y="-1.1" width="0.991" height="2.2" fill="#52524f"/><ellipse cx="0.127" rx="0.532" ry="0.989" fill="#5f5f5a"/><rect x="0.179" y="-1.1" width="0.921" height="2.2" fill="#5f5f5a"/><ellipse cx="0.186" rx="0.525" ry="0.975" fill="#6b6b66"/><rect x="0.262" y="-1.1" width="0.838" height="2.2" fill="#6b6b66"/><ellipse cx="0.255" rx="0.513" ry="0.953" fill="#777772"/><rect x="0.359" y="-1.1" width="0.741" height="2.2" fill="#777772"/><ellipse cx="0.333" rx="0.495" ry="0.919" fill="#84847e"/><rect x="0.469" y="-1.1" width="0.631" height="2.2" fill="#84847e"/><ellipse cx="0.419" rx="0.467" ry="0.868" fill="#90908a"/><rect x="0.590" y="-1.1" width="0.510" height="2.2" fill="#90908a"/><ellipse cx="0.513" rx="0.427" ry="0.793" fill="#9c9c95"/><rect x="0.723" y="-1.1" width="0.377" height="2.2" fill="#9c9c95"/><ellipse cx="0.615" rx="0.368" ry="0.683" fill="#a9a9a1"/><rect x="0.867" y="-1.1" width="0.233" height="2.2" fill="#a9a9a1"/><ellipse cx="0.725" rx="0.274" ry="0.509" fill="#b5b5ad"/></g><ellipse cx="0.468" cy="0.030" rx="0.659" ry="0.75" fill="url(#sp)"/><circle r="1" fill="none" stroke="#1a1a1a" stroke-opacity="0.35" stroke-width="1.2" vector-effect="non-scaling-stroke"/></g>
<circle cx="761.9" cy="474.9" r="2.7" fill="#1b8fe8"/>
<g transform="matrix(1.192 -1.417 1.502 1.212 761.9 474.9)"><circle r="1" fill="url(#tg)"/></g>
<g transform="matrix(5.294 -14.844 13.944 5.383 624.7 186.7)" clip-path="url(#uc)"><g filter="url(#bl)"><rect x="-1.1" y="-1.1" width="2.2" height="2.2" fill="#121211"/><ellipse cx="-0.319" rx="0.386" ry="0.937" fill="#141413"/><rect x="-0.384" y="-1.1" width="1.484" height="2.2" fill="#141413"/><ellipse cx="-0.255" rx="0.396" ry="0.960" fill="#181817"/><rect x="-0.307" y="-1.1" width="1.407" height="2.2" fill="#181817"/><ellipse cx="-0.191" rx="0.403" ry="0.978" fill="#1c1c1b"/><rect x="-0.230" y="-1.1" width="1.330" height="2.2" fill="#1c1c1b"/><ellipse cx="-0.128" rx="0.408" ry="0.990" fill="#20201f"/><rect x="-0.154" y="-1.1" width="1.254" height="2.2" fill="#20201f"/><ellipse cx="-0.064" rx="0.411" ry="0.998" fill="#242423"/><rect x="-0.077" y="-1.1" width="1.177" height="2.2" fill="#242423"/><ellipse cx="0.000" rx="0.412" ry="1.000" fill="#2d2d2b"/><rect x="0.000" y="-1.1" width="1.100" height="2.2" fill="#2d2d2b"/><ellipse cx="0.013" rx="0.412" ry="1.000" fill="#3a3a37"/><rect x="0.015" y="-1.1" width="1.085" height="2.2" fill="#3a3a37"/><ellipse cx="0.041" rx="0.412" ry="0.999" fill="#464643"/><rect x="0.050" y="-1.1" width="1.050" height="2.2" fill="#464643"/><ellipse cx="0.083" rx="0.411" ry="0.996" fill="#52524f"/><rect x="0.101" y="-1.1" width="0.999" height="2.2" fill="#52524f"/><ellipse cx="0.137" rx="0.408" ry="0.989" fill="#5f5f5a"/><rect x="0.165" y="-1.1" width="0.935" height="2.2" fill="#5f5f5a"/><ellipse cx="0.201" rx="0.402" ry="0.975" fill="#6b6b66"/><rect x="0.243" y="-1.1" width="0.857" height="2.2" fill="#6b6b66"/><ellipse cx="0.276" rx="0.393" ry="0.953" fill="#777772"/><rect x="0.332" y="-1.1" width="0.768" height="2.2" fill="#777772"/><ellipse cx="0.360" rx="0.379" ry="0.919" fill="#84847e"/><rect x="0.433" y="-1.1" width="0.667" height="2.2" fill="#84847e"/><ellipse cx="0.453" rx="0.358" ry="0.868" fill="#90908a"/><rect x="0.546" y="-1.1" width="0.554" height="2.2" fill="#90908a"/><ellipse cx="0.555" rx="0.327" ry="0.793" fill="#9c9c95"/><rect x="0.668" y="-1.1" width="0.432" height="2.2" fill="#9c9c95"/><ellipse cx="0.665" rx="0.282" ry="0.683" fill="#a9a9a1"/><rect x="0.802" y="-1.1" width="0.298" height="2.2" fill="#a9a9a1"/><ellipse cx="0.784" rx="0.210" ry="0.509" fill="#b5b5ad"/><rect x="0.945" y="-1.1" width="0.155" height="2.2" fill="#b5b5ad"/></g><ellipse cx="0.525" cy="0.030" rx="0.634" ry="0.75" fill="url(#sp)"/><circle r="1" fill="none" stroke="#1a1a1a" stroke-opacity="0.35" stroke-width="1.2" vector-effect="non-scaling-stroke"/></g>
<g transform="matrix(3.821 -6.501 6.550 3.685 707.9 353.3)" clip-path="url(#uc)"><g filter="url(#bl)"><rect x="-1.1" y="-1.1" width="2.2" height="2.2" fill="#121211"/><ellipse cx="-0.287" rx="0.537" ry="0.937" fill="#161615"/><rect x="-0.427" y="-1.1" width="1.527" height="2.2" fill="#161615"/><ellipse cx="-0.191" rx="0.557" ry="0.972" fill="#1d1d1b"/><rect x="-0.285" y="-1.1" width="1.385" height="2.2" fill="#1d1d1b"/><ellipse cx="-0.096" rx="0.569" ry="0.993" fill="#232322"/><rect x="-0.142" y="-1.1" width="1.242" height="2.2" fill="#232322"/><ellipse cx="0.000" rx="0.573" ry="1.000" fill="#2d2d2b"/><rect x="0.000" y="-1.1" width="1.100" height="2.2" fill="#2d2d2b"/><ellipse cx="0.011" rx="0.573" ry="1.000" fill="#3a3a37"/><rect x="0.017" y="-1.1" width="1.083" height="2.2" fill="#3a3a37"/><ellipse cx="0.037" rx="0.572" ry="0.999" fill="#464643"/><rect x="0.056" y="-1.1" width="1.044" height="2.2" fill="#464643"/><ellipse cx="0.075" rx="0.571" ry="0.996" fill="#52524f"/><rect x="0.112" y="-1.1" width="0.988" height="2.2" fill="#52524f"/><ellipse cx="0.123" rx="0.567" ry="0.989" fill="#5f5f5a"/><rect x="0.184" y="-1.1" width="0.916" height="2.2" fill="#5f5f5a"/><ellipse cx="0.181" rx="0.559" ry="0.975" fill="#6b6b66"/><rect x="0.270" y="-1.1" width="0.830" height="2.2" fill="#6b6b66"/><ellipse cx="0.248" rx="0.546" ry="0.953" fill="#777772"/><rect x="0.369" y="-1.1" width="0.731" height="2.2" fill="#777772"/><ellipse cx="0.324" rx="0.527" ry="0.919" fill="#84847e"/><rect x="0.482" y="-1.1" width="0.618" height="2.2" fill="#84847e"/><ellipse cx="0.407" rx="0.497" ry="0.868" fill="#90908a"/><rect x="0.607" y="-1.1" width="0.493" height="2.2" fill="#90908a"/><ellipse cx="0.499" rx="0.455" ry="0.793" fill="#9c9c95"/><rect x="0.743" y="-1.1" width="0.357" height="2.2" fill="#9c9c95"/><ellipse cx="0.598" rx="0.392" ry="0.683" fill="#a9a9a1"/><rect x="0.891" y="-1.1" width="0.209" height="2.2" fill="#a9a9a1"/><ellipse cx="0.705" rx="0.292" ry="0.509" fill="#b5b5ad"/></g><ellipse cx="0.452" cy="0.030" rx="0.666" ry="0.75" fill="url(#sp)"/><circle r="1" fill="none" stroke="#1a1a1a" stroke-opacity="0.55" stroke-width="1.2" vector-effect="non-scaling-stroke"/></g>
<circle cx="791.2" cy="520.2" r="2.7" fill="#1b8fe8"/>
<g transform="matrix(5.261 -12.666 12.129 5.125 652.9 229.6)" clip-path="url(#uc)"><g filter="url(#bl)"><rect x="-1.1" y="-1.1" width="2.2" height="2.2" fill="#121211"/><ellipse cx="-0.312" rx="0.424" ry="0.937" fill="#141413"/><rect x="-0.393" y="-1.1" width="1.493" height="2.2" fill="#141413"/><ellipse cx="-0.250" rx="0.435" ry="0.960" fill="#181817"/><rect x="-0.314" y="-1.1" width="1.414" height="2.2" fill="#181817"/><ellipse cx="-0.187" rx="0.443" ry="0.978" fill="#1c1c1b"/><rect x="-0.236" y="-1.1" width="1.336" height="2.2" fill="#1c1c1b"/><ellipse cx="-0.125" rx="0.448" ry="0.990" fill="#20201f"/><rect x="-0.157" y="-1.1" width="1.257" height="2.2" fill="#20201f"/><ellipse cx="-0.062" rx="0.452" ry="0.998" fill="#242423"/><rect x="-0.079" y="-1.1" width="1.179" height="2.2" fill="#242423"/><ellipse cx="0.000" rx="0.453" ry="1.000" fill="#2d2d2b"/><rect x="0.000" y="-1.1" width="1.100" height="2.2" fill="#2d2d2b"/><ellipse cx="0.012" rx="0.453" ry="1.000" fill="#3a3a37"/><rect x="0.015" y="-1.1" width="1.085" height="2.2" fill="#3a3a37"/><ellipse cx="0.041" rx="0.452" ry="0.999" fill="#464643"/><rect x="0.051" y="-1.1" width="1.049" height="2.2" fill="#464643"/><ellipse cx="0.082" rx="0.451" ry="0.996" fill="#52524f"/><rect x="0.103" y="-1.1" width="0.997" height="2.2" fill="#52524f"/><ellipse cx="0.134" rx="0.447" ry="0.989" fill="#5f5f5a"/><rect x="0.169" y="-1.1" width="0.931" height="2.2" fill="#5f5f5a"/><ellipse cx="0.197" rx="0.441" ry="0.975" fill="#6b6b66"/><rect x="0.248" y="-1.1" width="0.852" height="2.2" fill="#6b6b66"/><ellipse cx="0.270" rx="0.431" ry="0.953" fill="#777772"/><rect x="0.339" y="-1.1" width="0.761" height="2.2" fill="#777772"/><ellipse cx="0.352" rx="0.416" ry="0.919" fill="#84847e"/><rect x="0.443" y="-1.1" width="0.657" height="2.2" fill="#84847e"/><ellipse cx="0.443" rx="0.393" ry="0.868" fill="#90908a"/><rect x="0.557" y="-1.1" width="0.543" height="2.2" fill="#90908a"/><ellipse cx="0.543" rx="0.359" ry="0.793" fill="#9c9c95"/><rect x="0.683" y="-1.1" width="0.417" height="2.2" fill="#9c9c95"/><ellipse cx="0.651" rx="0.309" ry="0.683" fill="#a9a9a1"/><rect x="0.819" y="-1.1" width="0.281" height="2.2" fill="#a9a9a1"/><ellipse cx="0.767" rx="0.230" ry="0.509" fill="#b5b5ad"/><rect x="0.965" y="-1.1" width="0.135" height="2.2" fill="#b5b5ad"/></g><ellipse cx="0.508" cy="0.030" rx="0.642" ry="0.75" fill="url(#sp)"/><circle r="1" fill="none" stroke="#1a1a1a" stroke-opacity="0.35" stroke-width="1.2" vector-effect="non-scaling-stroke"/></g>
<g transform="matrix(3.213 -4.696 4.829 3.135 736.9 397.9)" clip-path="url(#uc)"><g filter="url(#bl)"><rect x="-1.1" y="-1.1" width="2.2" height="2.2" fill="#121211"/><ellipse cx="-0.279" rx="0.565" ry="0.937" fill="#181817"/><rect x="-0.439" y="-1.1" width="1.539" height="2.2" fill="#181817"/><ellipse cx="-0.140" rx="0.594" ry="0.985" fill="#222220"/><rect x="-0.220" y="-1.1" width="1.320" height="2.2" fill="#222220"/><ellipse cx="0.000" rx="0.604" ry="1.000" fill="#2d2d2b"/><rect x="0.000" y="-1.1" width="1.100" height="2.2" fill="#2d2d2b"/><ellipse cx="0.011" rx="0.604" ry="1.000" fill="#3a3a37"/><rect x="0.017" y="-1.1" width="1.083" height="2.2" fill="#3a3a37"/><ellipse cx="0.036" rx="0.603" ry="0.999" fill="#464643"/><rect x="0.057" y="-1.1" width="1.043" height="2.2" fill="#464643"/><ellipse cx="0.073" rx="0.601" ry="0.996" fill="#52524f"/><rect x="0.115" y="-1.1" width="0.985" height="2.2" fill="#52524f"/><ellipse cx="0.120" rx="0.597" ry="0.989" fill="#5f5f5a"/><rect x="0.189" y="-1.1" width="0.911" height="2.2" fill="#5f5f5a"/><ellipse cx="0.176" rx="0.589" ry="0.975" fill="#6b6b66"/><rect x="0.277" y="-1.1" width="0.823" height="2.2" fill="#6b6b66"/><ellipse cx="0.241" rx="0.575" ry="0.953" fill="#777772"/><rect x="0.380" y="-1.1" width="0.720" height="2.2" fill="#777772"/><ellipse cx="0.315" rx="0.555" ry="0.919" fill="#84847e"/><rect x="0.495" y="-1.1" width="0.605" height="2.2" fill="#84847e"/><ellipse cx="0.396" rx="0.524" ry="0.868" fill="#90908a"/><rect x="0.623" y="-1.1" width="0.477" height="2.2" fill="#90908a"/><ellipse cx="0.485" rx="0.479" ry="0.793" fill="#9c9c95"/><rect x="0.764" y="-1.1" width="0.336" height="2.2" fill="#9c9c95"/><ellipse cx="0.582" rx="0.412" ry="0.683" fill="#a9a9a1"/><rect x="0.916" y="-1.1" width="0.184" height="2.2" fill="#a9a9a1"/><ellipse cx="0.686" rx="0.307" ry="0.509" fill="#b5b5ad"/></g><ellipse cx="0.438" cy="0.030" rx="0.671" ry="0.75" fill="url(#sp)"/><circle r="1" fill="none" stroke="#1a1a1a" stroke-opacity="0.55" stroke-width="1.2" vector-effect="non-scaling-stroke"/></g>
<g transform="matrix(5.100 -10.566 10.316 4.859 681.7 273.3)" clip-path="url(#uc)"><g filter="url(#bl)"><rect x="-1.1" y="-1.1" width="2.2" height="2.2" fill="#121211"/><ellipse cx="-0.305" rx="0.461" ry="0.937" fill="#161615"/><rect x="-0.402" y="-1.1" width="1.502" height="2.2" fill="#161615"/><ellipse cx="-0.203" rx="0.478" ry="0.972" fill="#1d1d1b"/><rect x="-0.268" y="-1.1" width="1.368" height="2.2" fill="#1d1d1b"/><ellipse cx="-0.102" rx="0.488" ry="0.993" fill="#232322"/><rect x="-0.134" y="-1.1" width="1.234" height="2.2" fill="#232322"/><ellipse cx="0.000" rx="0.492" ry="1.000" fill="#2d2d2b"/><rect x="0.000" y="-1.1" width="1.100" height="2.2" fill="#2d2d2b"/><ellipse cx="0.012" rx="0.492" ry="1.000" fill="#3a3a37"/><rect x="0.016" y="-1.1" width="1.084" height="2.2" fill="#3a3a37"/><ellipse cx="0.040" rx="0.491" ry="0.999" fill="#464643"/><rect x="0.052" y="-1.1" width="1.048" height="2.2" fill="#464643"/><ellipse cx="0.080" rx="0.490" ry="0.996" fill="#52524f"/><rect x="0.105" y="-1.1" width="0.995" height="2.2" fill="#52524f"/><ellipse cx="0.131" rx="0.486" ry="0.989" fill="#5f5f5a"/><rect x="0.173" y="-1.1" width="0.927" height="2.2" fill="#5f5f5a"/><ellipse cx="0.192" rx="0.480" ry="0.975" fill="#6b6b66"/><rect x="0.254" y="-1.1" width="0.846" height="2.2" fill="#6b6b66"/><ellipse cx="0.264" rx="0.469" ry="0.953" fill="#777772"/><rect x="0.348" y="-1.1" width="0.752" height="2.2" fill="#777772"/><ellipse cx="0.344" rx="0.452" ry="0.919" fill="#84847e"/><rect x="0.453" y="-1.1" width="0.647" height="2.2" fill="#84847e"/><ellipse cx="0.433" rx="0.427" ry="0.868" fill="#90908a"/><rect x="0.571" y="-1.1" width="0.529" height="2.2" fill="#90908a"/><ellipse cx="0.530" rx="0.390" ry="0.793" fill="#9c9c95"/><rect x="0.699" y="-1.1" width="0.401" height="2.2" fill="#9c9c95"/><ellipse cx="0.636" rx="0.336" ry="0.683" fill="#a9a9a1"/><rect x="0.839" y="-1.1" width="0.261" height="2.2" fill="#a9a9a1"/><ellipse cx="0.749" rx="0.250" ry="0.509" fill="#b5b5ad"/><rect x="0.989" y="-1.1" width="0.111" height="2.2" fill="#b5b5ad"/></g><ellipse cx="0.491" cy="0.030" rx="0.650" ry="0.75" fill="url(#sp)"/><circle r="1" fill="none" stroke="#1a1a1a" stroke-opacity="0.35" stroke-width="1.2" vector-effect="non-scaling-stroke"/></g>
<g transform="matrix(2.387 -2.987 3.150 2.373 766.5 443.3)" clip-path="url(#uc)"><g filter="url(#bl2)"><rect x="-1.1" y="-1.1" width="2.2" height="2.2" fill="#121211"/><ellipse cx="-0.272" rx="0.590" ry="0.937" fill="#181817"/><rect x="-0.450" y="-1.1" width="1.550" height="2.2" fill="#181817"/><ellipse cx="-0.136" rx="0.620" ry="0.985" fill="#222220"/><rect x="-0.225" y="-1.1" width="1.325" height="2.2" fill="#222220"/><ellipse cx="0.000" rx="0.630" ry="1.000" fill="#353532"/><rect x="0.000" y="-1.1" width="1.100" height="2.2" fill="#353532"/><ellipse cx="0.035" rx="0.629" ry="0.999" fill="#4d4d4a"/><rect x="0.059" y="-1.1" width="1.041" height="2.2" fill="#4d4d4a"/><ellipse cx="0.117" rx="0.622" ry="0.989" fill="#666662"/><rect x="0.194" y="-1.1" width="0.906" height="2.2" fill="#666662"/><ellipse cx="0.235" rx="0.600" ry="0.953" fill="#7f7f79"/><rect x="0.390" y="-1.1" width="0.710" height="2.2" fill="#7f7f79"/><ellipse cx="0.386" rx="0.546" ry="0.868" fill="#979791"/><rect x="0.640" y="-1.1" width="0.460" height="2.2" fill="#979791"/><ellipse cx="0.567" rx="0.430" ry="0.683" fill="#b0b0a8"/><rect x="0.940" y="-1.1" width="0.160" height="2.2" fill="#b0b0a8"/></g><ellipse cx="0.426" cy="0.030" rx="0.676" ry="0.75" fill="url(#sp)"/><circle r="1" fill="none" stroke="#1a1a1a" stroke-opacity="0.55" stroke-width="1.2" vector-effect="non-scaling-stroke"/></g>
<g transform="matrix(6.002 -17.649 16.191 6.185 625.4 146.4)" clip-path="url(#uc)"><g filter="url(#bl)"><rect x="-1.1" y="-1.1" width="2.2" height="2.2" fill="#121211"/><ellipse cx="-0.326" rx="0.338" ry="0.937" fill="#141413"/><rect x="-0.375" y="-1.1" width="1.475" height="2.2" fill="#141413"/><ellipse cx="-0.261" rx="0.346" ry="0.960" fill="#181817"/><rect x="-0.300" y="-1.1" width="1.400" height="2.2" fill="#181817"/><ellipse cx="-0.196" rx="0.353" ry="0.978" fill="#1c1c1b"/><rect x="-0.225" y="-1.1" width="1.325" height="2.2" fill="#1c1c1b"/><ellipse cx="-0.131" rx="0.357" ry="0.990" fill="#20201f"/><rect x="-0.150" y="-1.1" width="1.250" height="2.2" fill="#20201f"/><ellipse cx="-0.065" rx="0.360" ry="0.998" fill="#242423"/><rect x="-0.075" y="-1.1" width="1.175" height="2.2" fill="#242423"/><ellipse cx="0.000" rx="0.361" ry="1.000" fill="#2d2d2b"/><rect x="0.000" y="-1.1" width="1.100" height="2.2" fill="#2d2d2b"/><ellipse cx="0.013" rx="0.361" ry="1.000" fill="#3a3a37"/><rect x="0.015" y="-1.1" width="1.085" height="2.2" fill="#3a3a37"/><ellipse cx="0.042" rx="0.360" ry="0.999" fill="#464643"/><rect x="0.049" y="-1.1" width="1.051" height="2.2" fill="#464643"/><ellipse cx="0.085" rx="0.359" ry="0.996" fill="#52524f"/><rect x="0.098" y="-1.1" width="1.002" height="2.2" fill="#52524f"/><ellipse cx="0.140" rx="0.357" ry="0.989" fill="#5f5f5a"/><rect x="0.161" y="-1.1" width="0.939" height="2.2" fill="#5f5f5a"/><ellipse cx="0.206" rx="0.352" ry="0.975" fill="#6b6b66"/><rect x="0.237" y="-1.1" width="0.863" height="2.2" fill="#6b6b66"/><ellipse cx="0.282" rx="0.344" ry="0.953" fill="#777772"/><rect x="0.325" y="-1.1" width="0.775" height="2.2" fill="#777772"/><ellipse cx="0.368" rx="0.331" ry="0.919" fill="#84847e"/><rect x="0.423" y="-1.1" width="0.677" height="2.2" fill="#84847e"/><ellipse cx="0.464" rx="0.313" ry="0.868" fill="#90908a"/><rect x="0.533" y="-1.1" width="0.567" height="2.2" fill="#90908a"/><ellipse cx="0.568" rx="0.286" ry="0.793" fill="#9c9c95"/><rect x="0.653" y="-1.1" width="0.447" height="2.2" fill="#9c9c95"/><ellipse cx="0.681" rx="0.246" ry="0.683" fill="#a9a9a1"/><rect x="0.783" y="-1.1" width="0.317" height="2.2" fill="#a9a9a1"/><ellipse cx="0.803" rx="0.184" ry="0.509" fill="#b5b5ad"/><rect x="0.923" y="-1.1" width="0.177" height="2.2" fill="#b5b5ad"/></g><ellipse cx="0.548" cy="0.030" rx="0.623" ry="0.75" fill="url(#sp)"/><circle r="1" fill="none" stroke="#1a1a1a" stroke-opacity="0.35" stroke-width="1.2" vector-effect="non-scaling-stroke"/></g>
<g transform="matrix(4.787 -8.538 8.510 4.537 711 317.8)" clip-path="url(#uc)"><g filter="url(#bl)"><rect x="-1.1" y="-1.1" width="2.2" height="2.2" fill="#121211"/><ellipse cx="-0.297" rx="0.495" ry="0.937" fill="#161615"/><rect x="-0.412" y="-1.1" width="1.512" height="2.2" fill="#161615"/><ellipse cx="-0.198" rx="0.514" ry="0.972" fill="#1d1d1b"/><rect x="-0.275" y="-1.1" width="1.375" height="2.2" fill="#1d1d1b"/><ellipse cx="-0.099" rx="0.525" ry="0.993" fill="#232322"/><rect x="-0.137" y="-1.1" width="1.237" height="2.2" fill="#232322"/><ellipse cx="0.000" rx="0.529" ry="1.000" fill="#2d2d2b"/><rect x="0.000" y="-1.1" width="1.100" height="2.2" fill="#2d2d2b"/><ellipse cx="0.012" rx="0.529" ry="1.000" fill="#3a3a37"/><rect x="0.016" y="-1.1" width="1.084" height="2.2" fill="#3a3a37"/><ellipse cx="0.039" rx="0.528" ry="0.999" fill="#464643"/><rect x="0.054" y="-1.1" width="1.046" height="2.2" fill="#464643"/><ellipse cx="0.078" rx="0.526" ry="0.996" fill="#52524f"/><rect x="0.108" y="-1.1" width="0.992" height="2.2" fill="#52524f"/><ellipse cx="0.128" rx="0.523" ry="0.989" fill="#5f5f5a"/><rect x="0.177" y="-1.1" width="0.923" height="2.2" fill="#5f5f5a"/><ellipse cx="0.188" rx="0.516" ry="0.975" fill="#6b6b66"/><rect x="0.260" y="-1.1" width="0.840" height="2.2" fill="#6b6b66"/><ellipse cx="0.257" rx="0.504" ry="0.953" fill="#777772"/><rect x="0.357" y="-1.1" width="0.743" height="2.2" fill="#777772"/><ellipse cx="0.335" rx="0.486" ry="0.919" fill="#84847e"/><rect x="0.465" y="-1.1" width="0.635" height="2.2" fill="#84847e"/><ellipse cx="0.422" rx="0.459" ry="0.868" fill="#90908a"/><rect x="0.586" y="-1.1" width="0.514" height="2.2" fill="#90908a"/><ellipse cx="0.517" rx="0.419" ry="0.793" fill="#9c9c95"/><rect x="0.717" y="-1.1" width="0.383" height="2.2" fill="#9c9c95"/><ellipse cx="0.620" rx="0.361" ry="0.683" fill="#a9a9a1"/><rect x="0.860" y="-1.1" width="0.240" height="2.2" fill="#a9a9a1"/><ellipse cx="0.731" rx="0.269" ry="0.509" fill="#b5b5ad"/></g><ellipse cx="0.475" cy="0.030" rx="0.657" ry="0.75" fill="url(#sp)"/><circle r="1" fill="none" stroke="#1a1a1a" stroke-opacity="0.35" stroke-width="1.2" vector-effect="non-scaling-stroke"/></g>
<circle cx="796.8" cy="489.6" r="2.7" fill="#1b8fe8"/>
<g transform="matrix(1.321 -1.407 1.535 1.342 796.8 489.6)"><circle r="1" fill="url(#tg)"/></g>
<g transform="matrix(6.056 -15.279 14.329 5.906 654.5 190.1)" clip-path="url(#uc)"><g filter="url(#bl)"><rect x="-1.1" y="-1.1" width="2.2" height="2.2" fill="#121211"/><ellipse cx="-0.321" rx="0.376" ry="0.937" fill="#141413"/><rect x="-0.382" y="-1.1" width="1.482" height="2.2" fill="#141413"/><ellipse cx="-0.256" rx="0.385" ry="0.960" fill="#181817"/><rect x="-0.306" y="-1.1" width="1.406" height="2.2" fill="#181817"/><ellipse cx="-0.192" rx="0.392" ry="0.978" fill="#1c1c1b"/><rect x="-0.229" y="-1.1" width="1.329" height="2.2" fill="#1c1c1b"/><ellipse cx="-0.128" rx="0.397" ry="0.990" fill="#20201f"/><rect x="-0.153" y="-1.1" width="1.253" height="2.2" fill="#20201f"/><ellipse cx="-0.064" rx="0.400" ry="0.998" fill="#242423"/><rect x="-0.076" y="-1.1" width="1.176" height="2.2" fill="#242423"/><ellipse cx="0.000" rx="0.401" ry="1.000" fill="#2d2d2b"/><rect x="0.000" y="-1.1" width="1.100" height="2.2" fill="#2d2d2b"/><ellipse cx="0.013" rx="0.401" ry="1.000" fill="#3a3a37"/><rect x="0.015" y="-1.1" width="1.085" height="2.2" fill="#3a3a37"/><ellipse cx="0.042" rx="0.401" ry="0.999" fill="#464643"/><rect x="0.050" y="-1.1" width="1.050" height="2.2" fill="#464643"/><ellipse cx="0.084" rx="0.400" ry="0.996" fill="#52524f"/><rect x="0.100" y="-1.1" width="1.000" height="2.2" fill="#52524f"/><ellipse cx="0.138" rx="0.397" ry="0.989" fill="#5f5f5a"/><rect x="0.164" y="-1.1" width="0.936" height="2.2" fill="#5f5f5a"/><ellipse cx="0.202" rx="0.391" ry="0.975" fill="#6b6b66"/><rect x="0.241" y="-1.1" width="0.859" height="2.2" fill="#6b6b66"/><ellipse cx="0.277" rx="0.383" ry="0.953" fill="#777772"/><rect x="0.330" y="-1.1" width="0.770" height="2.2" fill="#777772"/><ellipse cx="0.362" rx="0.369" ry="0.919" fill="#84847e"/><rect x="0.431" y="-1.1" width="0.669" height="2.2" fill="#84847e"/><ellipse cx="0.455" rx="0.348" ry="0.868" fill="#90908a"/><rect x="0.543" y="-1.1" width="0.557" height="2.2" fill="#90908a"/><ellipse cx="0.558" rx="0.318" ry="0.793" fill="#9c9c95"/><rect x="0.665" y="-1.1" width="0.435" height="2.2" fill="#9c9c95"/><ellipse cx="0.669" rx="0.274" ry="0.683" fill="#a9a9a1"/><rect x="0.797" y="-1.1" width="0.303" height="2.2" fill="#a9a9a1"/><ellipse cx="0.788" rx="0.204" ry="0.509" fill="#b5b5ad"/><rect x="0.940" y="-1.1" width="0.160" height="2.2" fill="#b5b5ad"/></g><ellipse cx="0.531" cy="0.030" rx="0.631" ry="0.75" fill="url(#sp)"/><circle r="1" fill="none" stroke="#1a1a1a" stroke-opacity="0.35" stroke-width="1.2" vector-effect="non-scaling-stroke"/></g>
<g transform="matrix(4.294 -6.587 6.717 4.100 741 363.3)" clip-path="url(#uc)"><g filter="url(#bl)"><rect x="-1.1" y="-1.1" width="2.2" height="2.2" fill="#121211"/><ellipse cx="-0.289" rx="0.527" ry="0.937" fill="#161615"/><rect x="-0.423" y="-1.1" width="1.523" height="2.2" fill="#161615"/><ellipse cx="-0.193" rx="0.547" ry="0.972" fill="#1d1d1b"/><rect x="-0.282" y="-1.1" width="1.382" height="2.2" fill="#1d1d1b"/><ellipse cx="-0.096" rx="0.558" ry="0.993" fill="#232322"/><rect x="-0.141" y="-1.1" width="1.241" height="2.2" fill="#232322"/><ellipse cx="0.000" rx="0.562" ry="1.000" fill="#2d2d2b"/><rect x="0.000" y="-1.1" width="1.100" height="2.2" fill="#2d2d2b"/><ellipse cx="0.011" rx="0.562" ry="1.000" fill="#3a3a37"/><rect x="0.017" y="-1.1" width="1.083" height="2.2" fill="#3a3a37"/><ellipse cx="0.038" rx="0.562" ry="0.999" fill="#464643"/><rect x="0.055" y="-1.1" width="1.045" height="2.2" fill="#464643"/><ellipse cx="0.076" rx="0.560" ry="0.996" fill="#52524f"/><rect x="0.111" y="-1.1" width="0.989" height="2.2" fill="#52524f"/><ellipse cx="0.124" rx="0.556" ry="0.989" fill="#5f5f5a"/><rect x="0.182" y="-1.1" width="0.918" height="2.2" fill="#5f5f5a"/><ellipse cx="0.183" rx="0.548" ry="0.975" fill="#6b6b66"/><rect x="0.267" y="-1.1" width="0.833" height="2.2" fill="#6b6b66"/><ellipse cx="0.250" rx="0.536" ry="0.953" fill="#777772"/><rect x="0.366" y="-1.1" width="0.734" height="2.2" fill="#777772"/><ellipse cx="0.327" rx="0.516" ry="0.919" fill="#84847e"/><rect x="0.477" y="-1.1" width="0.623" height="2.2" fill="#84847e"/><ellipse cx="0.411" rx="0.488" ry="0.868" fill="#90908a"/><rect x="0.601" y="-1.1" width="0.499" height="2.2" fill="#90908a"/><ellipse cx="0.504" rx="0.446" ry="0.793" fill="#9c9c95"/><rect x="0.736" y="-1.1" width="0.364" height="2.2" fill="#9c9c95"/><ellipse cx="0.604" rx="0.384" ry="0.683" fill="#a9a9a1"/><rect x="0.883" y="-1.1" width="0.217" height="2.2" fill="#a9a9a1"/><ellipse cx="0.712" rx="0.286" ry="0.509" fill="#b5b5ad"/></g><ellipse cx="0.460" cy="0.030" rx="0.663" ry="0.75" fill="url(#sp)"/><circle r="1" fill="none" stroke="#1a1a1a" stroke-opacity="0.55" stroke-width="1.2" vector-effect="non-scaling-stroke"/></g>
<circle cx="827.6" cy="536.8" r="2.7" fill="#1b8fe8"/>
<g transform="matrix(5.988 -12.999 12.468 5.653 684.1 234.7)" clip-path="url(#uc)"><g filter="url(#bl)"><rect x="-1.1" y="-1.1" width="2.2" height="2.2" fill="#121211"/><ellipse cx="-0.314" rx="0.414" ry="0.937" fill="#141413"/><rect x="-0.390" y="-1.1" width="1.490" height="2.2" fill="#141413"/><ellipse cx="-0.251" rx="0.424" ry="0.960" fill="#181817"/><rect x="-0.312" y="-1.1" width="1.412" height="2.2" fill="#181817"/><ellipse cx="-0.188" rx="0.432" ry="0.978" fill="#1c1c1b"/><rect x="-0.234" y="-1.1" width="1.334" height="2.2" fill="#1c1c1b"/><ellipse cx="-0.126" rx="0.437" ry="0.990" fill="#20201f"/><rect x="-0.156" y="-1.1" width="1.256" height="2.2" fill="#20201f"/><ellipse cx="-0.063" rx="0.441" ry="0.998" fill="#242423"/><rect x="-0.078" y="-1.1" width="1.178" height="2.2" fill="#242423"/><ellipse cx="0.000" rx="0.442" ry="1.000" fill="#2d2d2b"/><rect x="0.000" y="-1.1" width="1.100" height="2.2" fill="#2d2d2b"/><ellipse cx="0.012" rx="0.442" ry="1.000" fill="#3a3a37"/><rect x="0.015" y="-1.1" width="1.085" height="2.2" fill="#3a3a37"/><ellipse cx="0.041" rx="0.441" ry="0.999" fill="#464643"/><rect x="0.051" y="-1.1" width="1.049" height="2.2" fill="#464643"/><ellipse cx="0.082" rx="0.440" ry="0.996" fill="#52524f"/><rect x="0.102" y="-1.1" width="0.998" height="2.2" fill="#52524f"/><ellipse cx="0.135" rx="0.437" ry="0.989" fill="#5f5f5a"/><rect x="0.168" y="-1.1" width="0.932" height="2.2" fill="#5f5f5a"/><ellipse cx="0.198" rx="0.431" ry="0.975" fill="#6b6b66"/><rect x="0.246" y="-1.1" width="0.854" height="2.2" fill="#6b6b66"/><ellipse cx="0.272" rx="0.421" ry="0.953" fill="#777772"/><rect x="0.337" y="-1.1" width="0.763" height="2.2" fill="#777772"/><ellipse cx="0.354" rx="0.406" ry="0.919" fill="#84847e"/><rect x="0.440" y="-1.1" width="0.660" height="2.2" fill="#84847e"/><ellipse cx="0.446" rx="0.383" ry="0.868" fill="#90908a"/><rect x="0.554" y="-1.1" width="0.546" height="2.2" fill="#90908a"/><ellipse cx="0.546" rx="0.350" ry="0.793" fill="#9c9c95"/><rect x="0.679" y="-1.1" width="0.421" height="2.2" fill="#9c9c95"/><ellipse cx="0.655" rx="0.302" ry="0.683" fill="#a9a9a1"/><rect x="0.814" y="-1.1" width="0.286" height="2.2" fill="#a9a9a1"/><ellipse cx="0.772" rx="0.225" ry="0.509" fill="#b5b5ad"/><rect x="0.959" y="-1.1" width="0.141" height="2.2" fill="#b5b5ad"/></g><ellipse cx="0.514" cy="0.031" rx="0.639" ry="0.75" fill="url(#sp)"/><circle r="1" fill="none" stroke="#1a1a1a" stroke-opacity="0.35" stroke-width="1.2" vector-effect="non-scaling-stroke"/></g>
<g transform="matrix(3.594 -4.727 4.952 3.485 771.5 409.7)" clip-path="url(#uc)"><g filter="url(#bl)"><rect x="-1.1" y="-1.1" width="2.2" height="2.2" fill="#121211"/><ellipse cx="-0.282" rx="0.554" ry="0.937" fill="#181817"/><rect x="-0.434" y="-1.1" width="1.534" height="2.2" fill="#181817"/><ellipse cx="-0.141" rx="0.582" ry="0.985" fill="#222220"/><rect x="-0.217" y="-1.1" width="1.317" height="2.2" fill="#222220"/><ellipse cx="0.000" rx="0.591" ry="1.000" fill="#2d2d2b"/><rect x="0.000" y="-1.1" width="1.100" height="2.2" fill="#2d2d2b"/><ellipse cx="0.011" rx="0.591" ry="1.000" fill="#3a3a37"/><rect x="0.017" y="-1.1" width="1.083" height="2.2" fill="#3a3a37"/><ellipse cx="0.037" rx="0.591" ry="0.999" fill="#464643"/><rect x="0.056" y="-1.1" width="1.044" height="2.2" fill="#464643"/><ellipse cx="0.074" rx="0.589" ry="0.996" fill="#52524f"/><rect x="0.114" y="-1.1" width="0.986" height="2.2" fill="#52524f"/><ellipse cx="0.121" rx="0.584" ry="0.989" fill="#5f5f5a"/><rect x="0.187" y="-1.1" width="0.913" height="2.2" fill="#5f5f5a"/><ellipse cx="0.178" rx="0.577" ry="0.975" fill="#6b6b66"/><rect x="0.274" y="-1.1" width="0.826" height="2.2" fill="#6b6b66"/><ellipse cx="0.244" rx="0.563" ry="0.953" fill="#777772"/><rect x="0.375" y="-1.1" width="0.725" height="2.2" fill="#777772"/><ellipse cx="0.318" rx="0.543" ry="0.919" fill="#84847e"/><rect x="0.490" y="-1.1" width="0.610" height="2.2" fill="#84847e"/><ellipse cx="0.401" rx="0.513" ry="0.868" fill="#90908a"/><rect x="0.616" y="-1.1" width="0.484" height="2.2" fill="#90908a"/><ellipse cx="0.491" rx="0.469" ry="0.793" fill="#9c9c95"/><rect x="0.755" y="-1.1" width="0.345" height="2.2" fill="#9c9c95"/><ellipse cx="0.589" rx="0.404" ry="0.683" fill="#a9a9a1"/><rect x="0.905" y="-1.1" width="0.195" height="2.2" fill="#a9a9a1"/><ellipse cx="0.694" rx="0.301" ry="0.509" fill="#b5b5ad"/></g><ellipse cx="0.446" cy="0.030" rx="0.668" ry="0.75" fill="url(#sp)"/><circle r="1" fill="none" stroke="#1a1a1a" stroke-opacity="0.55" stroke-width="1.2" vector-effect="non-scaling-stroke"/></g>
<g transform="matrix(5.778 -10.802 10.608 5.382 714.4 280.2)" clip-path="url(#uc)"><g filter="url(#bl)"><rect x="-1.1" y="-1.1" width="2.2" height="2.2" fill="#121211"/><ellipse cx="-0.307" rx="0.450" ry="0.937" fill="#141413"/><rect x="-0.399" y="-1.1" width="1.499" height="2.2" fill="#141413"/><ellipse cx="-0.246" rx="0.461" ry="0.960" fill="#181817"/><rect x="-0.319" y="-1.1" width="1.419" height="2.2" fill="#181817"/><ellipse cx="-0.184" rx="0.470" ry="0.978" fill="#1c1c1b"/><rect x="-0.239" y="-1.1" width="1.339" height="2.2" fill="#1c1c1b"/><ellipse cx="-0.123" rx="0.476" ry="0.990" fill="#20201f"/><rect x="-0.160" y="-1.1" width="1.260" height="2.2" fill="#20201f"/><ellipse cx="-0.061" rx="0.479" ry="0.998" fill="#242423"/><rect x="-0.080" y="-1.1" width="1.180" height="2.2" fill="#242423"/><ellipse cx="0.000" rx="0.481" ry="1.000" fill="#2d2d2b"/><rect x="0.000" y="-1.1" width="1.100" height="2.2" fill="#2d2d2b"/><ellipse cx="0.012" rx="0.481" ry="1.000" fill="#3a3a37"/><rect x="0.016" y="-1.1" width="1.084" height="2.2" fill="#3a3a37"/><ellipse cx="0.040" rx="0.480" ry="0.999" fill="#464643"/><rect x="0.052" y="-1.1" width="1.048" height="2.2" fill="#464643"/><ellipse cx="0.080" rx="0.479" ry="0.996" fill="#52524f"/><rect x="0.104" y="-1.1" width="0.996" height="2.2" fill="#52524f"/><ellipse cx="0.132" rx="0.475" ry="0.989" fill="#5f5f5a"/><rect x="0.172" y="-1.1" width="0.928" height="2.2" fill="#5f5f5a"/><ellipse cx="0.194" rx="0.469" ry="0.975" fill="#6b6b66"/><rect x="0.252" y="-1.1" width="0.848" height="2.2" fill="#6b6b66"/><ellipse cx="0.265" rx="0.458" ry="0.953" fill="#777772"/><rect x="0.345" y="-1.1" width="0.755" height="2.2" fill="#777772"/><ellipse cx="0.346" rx="0.442" ry="0.919" fill="#84847e"/><rect x="0.450" y="-1.1" width="0.650" height="2.2" fill="#84847e"/><ellipse cx="0.436" rx="0.417" ry="0.868" fill="#90908a"/><rect x="0.567" y="-1.1" width="0.533" height="2.2" fill="#90908a"/><ellipse cx="0.534" rx="0.381" ry="0.793" fill="#9c9c95"/><rect x="0.694" y="-1.1" width="0.406" height="2.2" fill="#9c9c95"/><ellipse cx="0.640" rx="0.328" ry="0.683" fill="#a9a9a1"/><rect x="0.833" y="-1.1" width="0.267" height="2.2" fill="#a9a9a1"/><ellipse cx="0.755" rx="0.245" ry="0.509" fill="#b5b5ad"/><rect x="0.981" y="-1.1" width="0.119" height="2.2" fill="#b5b5ad"/></g><ellipse cx="0.498" cy="0.031" rx="0.647" ry="0.75" fill="url(#sp)"/><circle r="1" fill="none" stroke="#1a1a1a" stroke-opacity="0.35" stroke-width="1.2" vector-effect="non-scaling-stroke"/></g>
<g transform="matrix(2.657 -2.982 3.232 2.630 802.7 457)" clip-path="url(#uc)"><g filter="url(#bl2)"><rect x="-1.1" y="-1.1" width="2.2" height="2.2" fill="#121211"/><ellipse cx="-0.276" rx="0.576" ry="0.937" fill="#181817"/><rect x="-0.444" y="-1.1" width="1.544" height="2.2" fill="#181817"/><ellipse cx="-0.138" rx="0.606" ry="0.985" fill="#222220"/><rect x="-0.222" y="-1.1" width="1.322" height="2.2" fill="#222220"/><ellipse cx="0.000" rx="0.615" ry="1.000" fill="#353532"/><rect x="0.000" y="-1.1" width="1.100" height="2.2" fill="#353532"/><ellipse cx="0.036" rx="0.615" ry="0.999" fill="#4d4d4a"/><rect x="0.058" y="-1.1" width="1.042" height="2.2" fill="#4d4d4a"/><ellipse cx="0.119" rx="0.608" ry="0.989" fill="#666662"/><rect x="0.191" y="-1.1" width="0.909" height="2.2" fill="#666662"/><ellipse cx="0.239" rx="0.586" ry="0.953" fill="#7f7f79"/><rect x="0.384" y="-1.1" width="0.716" height="2.2" fill="#7f7f79"/><ellipse cx="0.392" rx="0.534" ry="0.868" fill="#979791"/><rect x="0.630" y="-1.1" width="0.470" height="2.2" fill="#979791"/><ellipse cx="0.576" rx="0.420" ry="0.683" fill="#b0b0a8"/><rect x="0.926" y="-1.1" width="0.174" height="2.2" fill="#b0b0a8"/></g><ellipse cx="0.436" cy="0.030" rx="0.672" ry="0.75" fill="url(#sp)"/><circle r="1" fill="none" stroke="#1a1a1a" stroke-opacity="0.55" stroke-width="1.2" vector-effect="non-scaling-stroke"/></g>
<g transform="matrix(6.894 -18.228 16.665 6.749 656.1 148.2)" clip-path="url(#uc)"><g filter="url(#bl)"><rect x="-1.1" y="-1.1" width="2.2" height="2.2" fill="#121211"/><ellipse cx="-0.328" rx="0.326" ry="0.937" fill="#141413"/><rect x="-0.373" y="-1.1" width="1.473" height="2.2" fill="#141413"/><ellipse cx="-0.263" rx="0.334" ry="0.960" fill="#181817"/><rect x="-0.299" y="-1.1" width="1.399" height="2.2" fill="#181817"/><ellipse cx="-0.197" rx="0.340" ry="0.978" fill="#1c1c1b"/><rect x="-0.224" y="-1.1" width="1.324" height="2.2" fill="#1c1c1b"/><ellipse cx="-0.131" rx="0.344" ry="0.990" fill="#20201f"/><rect x="-0.149" y="-1.1" width="1.249" height="2.2" fill="#20201f"/><ellipse cx="-0.066" rx="0.347" ry="0.998" fill="#242423"/><rect x="-0.075" y="-1.1" width="1.175" height="2.2" fill="#242423"/><ellipse cx="0.000" rx="0.348" ry="1.000" fill="#2d2d2b"/><rect x="0.000" y="-1.1" width="1.100" height="2.2" fill="#2d2d2b"/><ellipse cx="0.013" rx="0.348" ry="1.000" fill="#3a3a37"/><rect x="0.015" y="-1.1" width="1.085" height="2.2" fill="#3a3a37"/><ellipse cx="0.043" rx="0.348" ry="0.999" fill="#464643"/><rect x="0.049" y="-1.1" width="1.051" height="2.2" fill="#464643"/><ellipse cx="0.086" rx="0.346" ry="0.996" fill="#52524f"/><rect x="0.098" y="-1.1" width="1.002" height="2.2" fill="#52524f"/><ellipse cx="0.141" rx="0.344" ry="0.989" fill="#5f5f5a"/><rect x="0.160" y="-1.1" width="0.940" height="2.2" fill="#5f5f5a"/><ellipse cx="0.207" rx="0.339" ry="0.975" fill="#6b6b66"/><rect x="0.236" y="-1.1" width="0.864" height="2.2" fill="#6b6b66"/><ellipse cx="0.284" rx="0.332" ry="0.953" fill="#777772"/><rect x="0.323" y="-1.1" width="0.777" height="2.2" fill="#777772"/><ellipse cx="0.370" rx="0.320" ry="0.919" fill="#84847e"/><rect x="0.421" y="-1.1" width="0.679" height="2.2" fill="#84847e"/><ellipse cx="0.466" rx="0.302" ry="0.868" fill="#90908a"/><rect x="0.530" y="-1.1" width="0.570" height="2.2" fill="#90908a"/><ellipse cx="0.571" rx="0.276" ry="0.793" fill="#9c9c95"/><rect x="0.650" y="-1.1" width="0.450" height="2.2" fill="#9c9c95"/><ellipse cx="0.685" rx="0.238" ry="0.683" fill="#a9a9a1"/><rect x="0.779" y="-1.1" width="0.321" height="2.2" fill="#a9a9a1"/><ellipse cx="0.807" rx="0.177" ry="0.509" fill="#b5b5ad"/><rect x="0.918" y="-1.1" width="0.182" height="2.2" fill="#b5b5ad"/></g><ellipse cx="0.554" cy="0.031" rx="0.620" ry="0.75" fill="url(#sp)"/><circle r="1" fill="none" stroke="#1a1a1a" stroke-opacity="0.35" stroke-width="1.2" vector-effect="non-scaling-stroke"/></g>
<g transform="matrix(5.399 -8.688 8.752 5.037 745.2 326.7)" clip-path="url(#uc)"><g filter="url(#bl)"><rect x="-1.1" y="-1.1" width="2.2" height="2.2" fill="#121211"/><ellipse cx="-0.300" rx="0.484" ry="0.937" fill="#161615"/><rect x="-0.409" y="-1.1" width="1.509" height="2.2" fill="#161615"/><ellipse cx="-0.200" rx="0.502" ry="0.972" fill="#1d1d1b"/><rect x="-0.273" y="-1.1" width="1.373" height="2.2" fill="#1d1d1b"/><ellipse cx="-0.100" rx="0.513" ry="0.993" fill="#232322"/><rect x="-0.136" y="-1.1" width="1.236" height="2.2" fill="#232322"/><ellipse cx="0.000" rx="0.517" ry="1.000" fill="#2d2d2b"/><rect x="0.000" y="-1.1" width="1.100" height="2.2" fill="#2d2d2b"/><ellipse cx="0.012" rx="0.517" ry="1.000" fill="#3a3a37"/><rect x="0.016" y="-1.1" width="1.084" height="2.2" fill="#3a3a37"/><ellipse cx="0.039" rx="0.516" ry="0.999" fill="#464643"/><rect x="0.053" y="-1.1" width="1.047" height="2.2" fill="#464643"/><ellipse cx="0.078" rx="0.514" ry="0.996" fill="#52524f"/><rect x="0.107" y="-1.1" width="0.993" height="2.2" fill="#52524f"/><ellipse cx="0.129" rx="0.511" ry="0.989" fill="#5f5f5a"/><rect x="0.176" y="-1.1" width="0.924" height="2.2" fill="#5f5f5a"/><ellipse cx="0.189" rx="0.504" ry="0.975" fill="#6b6b66"/><rect x="0.258" y="-1.1" width="0.842" height="2.2" fill="#6b6b66"/><ellipse cx="0.259" rx="0.492" ry="0.953" fill="#777772"/><rect x="0.353" y="-1.1" width="0.747" height="2.2" fill="#777772"/><ellipse cx="0.338" rx="0.475" ry="0.919" fill="#84847e"/><rect x="0.461" y="-1.1" width="0.639" height="2.2" fill="#84847e"/><ellipse cx="0.426" rx="0.448" ry="0.868" fill="#90908a"/><rect x="0.580" y="-1.1" width="0.520" height="2.2" fill="#90908a"/><ellipse cx="0.521" rx="0.410" ry="0.793" fill="#9c9c95"/><rect x="0.711" y="-1.1" width="0.389" height="2.2" fill="#9c9c95"/><ellipse cx="0.625" rx="0.353" ry="0.683" fill="#a9a9a1"/><rect x="0.853" y="-1.1" width="0.247" height="2.2" fill="#a9a9a1"/><ellipse cx="0.737" rx="0.263" ry="0.509" fill="#b5b5ad"/></g><ellipse cx="0.482" cy="0.031" rx="0.654" ry="0.75" fill="url(#sp)"/><circle r="1" fill="none" stroke="#1a1a1a" stroke-opacity="0.35" stroke-width="1.2" vector-effect="non-scaling-stroke"/></g>
<circle cx="834.5" cy="505.4" r="2.7" fill="#1b8fe8"/>
<g transform="matrix(1.464 -1.391 1.577 1.482 834.5 505.4)"><circle r="1" fill="url(#tg)"/></g>
<g transform="matrix(6.920 -15.736 14.759 6.482 686.7 193.8)" clip-path="url(#uc)"><g filter="url(#bl)"><rect x="-1.1" y="-1.1" width="2.2" height="2.2" fill="#121211"/><ellipse cx="-0.322" rx="0.364" ry="0.937" fill="#141413"/><rect x="-0.380" y="-1.1" width="1.480" height="2.2" fill="#141413"/><ellipse cx="-0.258" rx="0.373" ry="0.960" fill="#181817"/><rect x="-0.304" y="-1.1" width="1.404" height="2.2" fill="#181817"/><ellipse cx="-0.193" rx="0.380" ry="0.978" fill="#1c1c1b"/><rect x="-0.228" y="-1.1" width="1.328" height="2.2" fill="#1c1c1b"/><ellipse cx="-0.129" rx="0.385" ry="0.990" fill="#20201f"/><rect x="-0.152" y="-1.1" width="1.252" height="2.2" fill="#20201f"/><ellipse cx="-0.064" rx="0.388" ry="0.998" fill="#242423"/><rect x="-0.076" y="-1.1" width="1.176" height="2.2" fill="#242423"/><ellipse cx="0.000" rx="0.389" ry="1.000" fill="#2d2d2b"/><rect x="0.000" y="-1.1" width="1.100" height="2.2" fill="#2d2d2b"/><ellipse cx="0.013" rx="0.389" ry="1.000" fill="#3a3a37"/><rect x="0.015" y="-1.1" width="1.085" height="2.2" fill="#3a3a37"/><ellipse cx="0.042" rx="0.388" ry="0.999" fill="#464643"/><rect x="0.049" y="-1.1" width="1.051" height="2.2" fill="#464643"/><ellipse cx="0.084" rx="0.387" ry="0.996" fill="#52524f"/><rect x="0.099" y="-1.1" width="1.001" height="2.2" fill="#52524f"/><ellipse cx="0.139" rx="0.384" ry="0.989" fill="#5f5f5a"/><rect x="0.163" y="-1.1" width="0.937" height="2.2" fill="#5f5f5a"/><ellipse cx="0.204" rx="0.379" ry="0.975" fill="#6b6b66"/><rect x="0.240" y="-1.1" width="0.860" height="2.2" fill="#6b6b66"/><ellipse cx="0.279" rx="0.371" ry="0.953" fill="#777772"/><rect x="0.329" y="-1.1" width="0.771" height="2.2" fill="#777772"/><ellipse cx="0.364" rx="0.357" ry="0.919" fill="#84847e"/><rect x="0.429" y="-1.1" width="0.671" height="2.2" fill="#84847e"/><ellipse cx="0.458" rx="0.337" ry="0.868" fill="#90908a"/><rect x="0.539" y="-1.1" width="0.561" height="2.2" fill="#90908a"/><ellipse cx="0.561" rx="0.308" ry="0.793" fill="#9c9c95"/><rect x="0.661" y="-1.1" width="0.439" height="2.2" fill="#9c9c95"/><ellipse cx="0.673" rx="0.266" ry="0.683" fill="#a9a9a1"/><rect x="0.793" y="-1.1" width="0.307" height="2.2" fill="#a9a9a1"/><ellipse cx="0.793" rx="0.198" ry="0.509" fill="#b5b5ad"/><rect x="0.934" y="-1.1" width="0.166" height="2.2" fill="#b5b5ad"/></g><ellipse cx="0.538" cy="0.031" rx="0.628" ry="0.75" fill="url(#sp)"/><circle r="1" fill="none" stroke="#1a1a1a" stroke-opacity="0.35" stroke-width="1.2" vector-effect="non-scaling-stroke"/></g>
<g transform="matrix(4.822 -6.663 6.911 4.554 776.7 374.1)" clip-path="url(#uc)"><g filter="url(#bl)"><rect x="-1.1" y="-1.1" width="2.2" height="2.2" fill="#121211"/><ellipse cx="-0.293" rx="0.514" ry="0.937" fill="#161615"/><rect x="-0.419" y="-1.1" width="1.519" height="2.2" fill="#161615"/><ellipse cx="-0.195" rx="0.534" ry="0.972" fill="#1d1d1b"/><rect x="-0.279" y="-1.1" width="1.379" height="2.2" fill="#1d1d1b"/><ellipse cx="-0.098" rx="0.545" ry="0.993" fill="#232322"/><rect x="-0.140" y="-1.1" width="1.240" height="2.2" fill="#232322"/><ellipse cx="0.000" rx="0.549" ry="1.000" fill="#2d2d2b"/><rect x="0.000" y="-1.1" width="1.100" height="2.2" fill="#2d2d2b"/><ellipse cx="0.012" rx="0.549" ry="1.000" fill="#3a3a37"/><rect x="0.016" y="-1.1" width="1.084" height="2.2" fill="#3a3a37"/><ellipse cx="0.038" rx="0.548" ry="0.999" fill="#464643"/><rect x="0.054" y="-1.1" width="1.046" height="2.2" fill="#464643"/><ellipse cx="0.077" rx="0.546" ry="0.996" fill="#52524f"/><rect x="0.110" y="-1.1" width="0.990" height="2.2" fill="#52524f"/><ellipse cx="0.126" rx="0.542" ry="0.989" fill="#5f5f5a"/><rect x="0.180" y="-1.1" width="0.920" height="2.2" fill="#5f5f5a"/><ellipse cx="0.185" rx="0.535" ry="0.975" fill="#6b6b66"/><rect x="0.264" y="-1.1" width="0.836" height="2.2" fill="#6b6b66"/><ellipse cx="0.253" rx="0.523" ry="0.953" fill="#777772"/><rect x="0.362" y="-1.1" width="0.738" height="2.2" fill="#777772"/><ellipse cx="0.330" rx="0.504" ry="0.919" fill="#84847e"/><rect x="0.472" y="-1.1" width="0.628" height="2.2" fill="#84847e"/><ellipse cx="0.416" rx="0.476" ry="0.868" fill="#90908a"/><rect x="0.595" y="-1.1" width="0.505" height="2.2" fill="#90908a"/><ellipse cx="0.509" rx="0.435" ry="0.793" fill="#9c9c95"/><rect x="0.728" y="-1.1" width="0.372" height="2.2" fill="#9c9c95"/><ellipse cx="0.611" rx="0.375" ry="0.683" fill="#a9a9a1"/><rect x="0.874" y="-1.1" width="0.226" height="2.2" fill="#a9a9a1"/><ellipse cx="0.720" rx="0.279" ry="0.509" fill="#b5b5ad"/></g><ellipse cx="0.468" cy="0.031" rx="0.659" ry="0.75" fill="url(#sp)"/><circle r="1" fill="none" stroke="#1a1a1a" stroke-opacity="0.55" stroke-width="1.2" vector-effect="non-scaling-stroke"/></g>
<circle cx="867" cy="554.7" r="2.7" fill="#1b8fe8"/>
<g transform="matrix(6.810 -13.341 12.850 6.236 717.9 240.3)" clip-path="url(#uc)"><g filter="url(#bl)"><rect x="-1.1" y="-1.1" width="2.2" height="2.2" fill="#121211"/><ellipse cx="-0.316" rx="0.402" ry="0.937" fill="#141413"/><rect x="-0.387" y="-1.1" width="1.487" height="2.2" fill="#141413"/><ellipse cx="-0.253" rx="0.412" ry="0.960" fill="#181817"/><rect x="-0.310" y="-1.1" width="1.410" height="2.2" fill="#181817"/><ellipse cx="-0.190" rx="0.419" ry="0.978" fill="#1c1c1b"/><rect x="-0.232" y="-1.1" width="1.332" height="2.2" fill="#1c1c1b"/><ellipse cx="-0.126" rx="0.425" ry="0.990" fill="#20201f"/><rect x="-0.155" y="-1.1" width="1.255" height="2.2" fill="#20201f"/><ellipse cx="-0.063" rx="0.428" ry="0.998" fill="#242423"/><rect x="-0.077" y="-1.1" width="1.177" height="2.2" fill="#242423"/><ellipse cx="0.000" rx="0.429" ry="1.000" fill="#2d2d2b"/><rect x="0.000" y="-1.1" width="1.100" height="2.2" fill="#2d2d2b"/><ellipse cx="0.012" rx="0.429" ry="1.000" fill="#3a3a37"/><rect x="0.015" y="-1.1" width="1.085" height="2.2" fill="#3a3a37"/><ellipse cx="0.041" rx="0.428" ry="0.999" fill="#464643"/><rect x="0.050" y="-1.1" width="1.050" height="2.2" fill="#464643"/><ellipse cx="0.083" rx="0.427" ry="0.996" fill="#52524f"/><rect x="0.101" y="-1.1" width="0.999" height="2.2" fill="#52524f"/><ellipse cx="0.136" rx="0.424" ry="0.989" fill="#5f5f5a"/><rect x="0.167" y="-1.1" width="0.933" height="2.2" fill="#5f5f5a"/><ellipse cx="0.200" rx="0.418" ry="0.975" fill="#6b6b66"/><rect x="0.245" y="-1.1" width="0.855" height="2.2" fill="#6b6b66"/><ellipse cx="0.273" rx="0.409" ry="0.953" fill="#777772"/><rect x="0.335" y="-1.1" width="0.765" height="2.2" fill="#777772"/><ellipse cx="0.357" rx="0.394" ry="0.919" fill="#84847e"/><rect x="0.437" y="-1.1" width="0.663" height="2.2" fill="#84847e"/><ellipse cx="0.449" rx="0.372" ry="0.868" fill="#90908a"/><rect x="0.550" y="-1.1" width="0.550" height="2.2" fill="#90908a"/><ellipse cx="0.550" rx="0.340" ry="0.793" fill="#9c9c95"/><rect x="0.674" y="-1.1" width="0.426" height="2.2" fill="#9c9c95"/><ellipse cx="0.660" rx="0.293" ry="0.683" fill="#a9a9a1"/><rect x="0.808" y="-1.1" width="0.292" height="2.2" fill="#a9a9a1"/><ellipse cx="0.778" rx="0.218" ry="0.509" fill="#b5b5ad"/><rect x="0.953" y="-1.1" width="0.147" height="2.2" fill="#b5b5ad"/></g><ellipse cx="0.522" cy="0.031" rx="0.636" ry="0.75" fill="url(#sp)"/><circle r="1" fill="none" stroke="#1a1a1a" stroke-opacity="0.35" stroke-width="1.2" vector-effect="non-scaling-stroke"/></g>
<g transform="matrix(4.017 -4.746 5.099 3.865 808.9 422.5)" clip-path="url(#uc)"><g filter="url(#bl)"><rect x="-1.1" y="-1.1" width="2.2" height="2.2" fill="#121211"/><ellipse cx="-0.286" rx="0.540" ry="0.937" fill="#161615"/><rect x="-0.428" y="-1.1" width="1.528" height="2.2" fill="#161615"/><ellipse cx="-0.191" rx="0.560" ry="0.972" fill="#1d1d1b"/><rect x="-0.285" y="-1.1" width="1.385" height="2.2" fill="#1d1d1b"/><ellipse cx="-0.095" rx="0.572" ry="0.993" fill="#232322"/><rect x="-0.143" y="-1.1" width="1.243" height="2.2" fill="#232322"/><ellipse cx="0.000" rx="0.576" ry="1.000" fill="#2d2d2b"/><rect x="0.000" y="-1.1" width="1.100" height="2.2" fill="#2d2d2b"/><ellipse cx="0.011" rx="0.576" ry="1.000" fill="#3a3a37"/><rect x="0.017" y="-1.1" width="1.083" height="2.2" fill="#3a3a37"/><ellipse cx="0.037" rx="0.575" ry="0.999" fill="#464643"/><rect x="0.056" y="-1.1" width="1.044" height="2.2" fill="#464643"/><ellipse cx="0.075" rx="0.574" ry="0.996" fill="#52524f"/><rect x="0.112" y="-1.1" width="0.988" height="2.2" fill="#52524f"/><ellipse cx="0.123" rx="0.570" ry="0.989" fill="#5f5f5a"/><rect x="0.184" y="-1.1" width="0.916" height="2.2" fill="#5f5f5a"/><ellipse cx="0.181" rx="0.562" ry="0.975" fill="#6b6b66"/><rect x="0.270" y="-1.1" width="0.830" height="2.2" fill="#6b6b66"/><ellipse cx="0.247" rx="0.549" ry="0.953" fill="#777772"/><rect x="0.370" y="-1.1" width="0.730" height="2.2" fill="#777772"/><ellipse cx="0.323" rx="0.529" ry="0.919" fill="#84847e"/><rect x="0.483" y="-1.1" width="0.617" height="2.2" fill="#84847e"/><ellipse cx="0.406" rx="0.500" ry="0.868" fill="#90908a"/><rect x="0.608" y="-1.1" width="0.492" height="2.2" fill="#90908a"/><ellipse cx="0.498" rx="0.457" ry="0.793" fill="#9c9c95"/><rect x="0.745" y="-1.1" width="0.355" height="2.2" fill="#9c9c95"/><ellipse cx="0.597" rx="0.394" ry="0.683" fill="#a9a9a1"/><rect x="0.893" y="-1.1" width="0.207" height="2.2" fill="#a9a9a1"/><ellipse cx="0.704" rx="0.293" ry="0.509" fill="#b5b5ad"/></g><ellipse cx="0.456" cy="0.030" rx="0.664" ry="0.75" fill="url(#sp)"/><circle r="1" fill="none" stroke="#1a1a1a" stroke-opacity="0.55" stroke-width="1.2" vector-effect="non-scaling-stroke"/></g>
<g transform="matrix(6.542 -11.039 10.941 5.958 749.8 287.7)" clip-path="url(#uc)"><g filter="url(#bl)"><rect x="-1.1" y="-1.1" width="2.2" height="2.2" fill="#121211"/><ellipse cx="-0.309" rx="0.437" ry="0.937" fill="#141413"/><rect x="-0.396" y="-1.1" width="1.496" height="2.2" fill="#141413"/><ellipse cx="-0.248" rx="0.448" ry="0.960" fill="#181817"/><rect x="-0.317" y="-1.1" width="1.417" height="2.2" fill="#181817"/><ellipse cx="-0.186" rx="0.457" ry="0.978" fill="#1c1c1b"/><rect x="-0.237" y="-1.1" width="1.337" height="2.2" fill="#1c1c1b"/><ellipse cx="-0.124" rx="0.462" ry="0.990" fill="#20201f"/><rect x="-0.158" y="-1.1" width="1.258" height="2.2" fill="#20201f"/><ellipse cx="-0.062" rx="0.466" ry="0.998" fill="#242423"/><rect x="-0.079" y="-1.1" width="1.179" height="2.2" fill="#242423"/><ellipse cx="0.000" rx="0.467" ry="1.000" fill="#2d2d2b"/><rect x="0.000" y="-1.1" width="1.100" height="2.2" fill="#2d2d2b"/><ellipse cx="0.012" rx="0.467" ry="1.000" fill="#3a3a37"/><rect x="0.016" y="-1.1" width="1.084" height="2.2" fill="#3a3a37"/><ellipse cx="0.040" rx="0.467" ry="0.999" fill="#464643"/><rect x="0.051" y="-1.1" width="1.049" height="2.2" fill="#464643"/><ellipse cx="0.081" rx="0.465" ry="0.996" fill="#52524f"/><rect x="0.104" y="-1.1" width="0.996" height="2.2" fill="#52524f"/><ellipse cx="0.133" rx="0.462" ry="0.989" fill="#5f5f5a"/><rect x="0.170" y="-1.1" width="0.930" height="2.2" fill="#5f5f5a"/><ellipse cx="0.195" rx="0.455" ry="0.975" fill="#6b6b66"/><rect x="0.250" y="-1.1" width="0.850" height="2.2" fill="#6b6b66"/><ellipse cx="0.268" rx="0.445" ry="0.953" fill="#777772"/><rect x="0.342" y="-1.1" width="0.758" height="2.2" fill="#777772"/><ellipse cx="0.349" rx="0.429" ry="0.919" fill="#84847e"/><rect x="0.447" y="-1.1" width="0.653" height="2.2" fill="#84847e"/><ellipse cx="0.440" rx="0.405" ry="0.868" fill="#90908a"/><rect x="0.562" y="-1.1" width="0.538" height="2.2" fill="#90908a"/><ellipse cx="0.538" rx="0.370" ry="0.793" fill="#9c9c95"/><rect x="0.689" y="-1.1" width="0.411" height="2.2" fill="#9c9c95"/><ellipse cx="0.646" rx="0.319" ry="0.683" fill="#a9a9a1"/><rect x="0.826" y="-1.1" width="0.274" height="2.2" fill="#a9a9a1"/><ellipse cx="0.761" rx="0.238" ry="0.509" fill="#b5b5ad"/><rect x="0.973" y="-1.1" width="0.127" height="2.2" fill="#b5b5ad"/></g><ellipse cx="0.506" cy="0.031" rx="0.643" ry="0.75" fill="url(#sp)"/><circle r="1" fill="none" stroke="#1a1a1a" stroke-opacity="0.35" stroke-width="1.2" vector-effect="non-scaling-stroke"/></g>
<g transform="matrix(2.956 -2.967 3.334 2.908 841.8 472)" clip-path="url(#uc)"><g filter="url(#bl2)"><rect x="-1.1" y="-1.1" width="2.2" height="2.2" fill="#121211"/><ellipse cx="-0.280" rx="0.560" ry="0.937" fill="#181817"/><rect x="-0.437" y="-1.1" width="1.537" height="2.2" fill="#181817"/><ellipse cx="-0.140" rx="0.589" ry="0.985" fill="#222220"/><rect x="-0.218" y="-1.1" width="1.318" height="2.2" fill="#222220"/><ellipse cx="0.000" rx="0.598" ry="1.000" fill="#353532"/><rect x="0.000" y="-1.1" width="1.100" height="2.2" fill="#353532"/><ellipse cx="0.036" rx="0.598" ry="0.999" fill="#4d4d4a"/><rect x="0.057" y="-1.1" width="1.043" height="2.2" fill="#4d4d4a"/><ellipse cx="0.121" rx="0.591" ry="0.989" fill="#666662"/><rect x="0.188" y="-1.1" width="0.912" height="2.2" fill="#666662"/><ellipse cx="0.243" rx="0.570" ry="0.953" fill="#7f7f79"/><rect x="0.378" y="-1.1" width="0.722" height="2.2" fill="#7f7f79"/><ellipse cx="0.398" rx="0.519" ry="0.868" fill="#979791"/><rect x="0.620" y="-1.1" width="0.480" height="2.2" fill="#979791"/><ellipse cx="0.585" rx="0.409" ry="0.683" fill="#b0b0a8"/><rect x="0.911" y="-1.1" width="0.189" height="2.2" fill="#b0b0a8"/></g><ellipse cx="0.447" cy="0.029" rx="0.668" ry="0.75" fill="url(#sp)"/><circle r="1" fill="none" stroke="#1a1a1a" stroke-opacity="0.55" stroke-width="1.2" vector-effect="non-scaling-stroke"/></g>
<g transform="matrix(7.910 -18.844 17.196 7.369 689.5 150.3)" clip-path="url(#uc)"><g filter="url(#bl)"><rect x="-1.1" y="-1.1" width="2.2" height="2.2" fill="#121211"/><ellipse cx="-0.330" rx="0.312" ry="0.937" fill="#141413"/><rect x="-0.371" y="-1.1" width="1.471" height="2.2" fill="#141413"/><ellipse cx="-0.264" rx="0.320" ry="0.960" fill="#181817"/><rect x="-0.297" y="-1.1" width="1.397" height="2.2" fill="#181817"/><ellipse cx="-0.198" rx="0.326" ry="0.978" fill="#1c1c1b"/><rect x="-0.223" y="-1.1" width="1.323" height="2.2" fill="#1c1c1b"/><ellipse cx="-0.132" rx="0.330" ry="0.990" fill="#20201f"/><rect x="-0.148" y="-1.1" width="1.248" height="2.2" fill="#20201f"/><ellipse cx="-0.066" rx="0.332" ry="0.998" fill="#242423"/><rect x="-0.074" y="-1.1" width="1.174" height="2.2" fill="#242423"/><ellipse cx="0.000" rx="0.333" ry="1.000" fill="#2d2d2b"/><rect x="0.000" y="-1.1" width="1.100" height="2.2" fill="#2d2d2b"/><ellipse cx="0.013" rx="0.333" ry="1.000" fill="#3a3a37"/><rect x="0.015" y="-1.1" width="1.085" height="2.2" fill="#3a3a37"/><ellipse cx="0.043" rx="0.333" ry="0.999" fill="#464643"/><rect x="0.048" y="-1.1" width="1.052" height="2.2" fill="#464643"/><ellipse cx="0.086" rx="0.332" ry="0.996" fill="#52524f"/><rect x="0.097" y="-1.1" width="1.003" height="2.2" fill="#52524f"/><ellipse cx="0.142" rx="0.329" ry="0.989" fill="#5f5f5a"/><rect x="0.160" y="-1.1" width="0.940" height="2.2" fill="#5f5f5a"/><ellipse cx="0.208" rx="0.325" ry="0.975" fill="#6b6b66"/><rect x="0.234" y="-1.1" width="0.866" height="2.2" fill="#6b6b66"/><ellipse cx="0.285" rx="0.318" ry="0.953" fill="#777772"/><rect x="0.321" y="-1.1" width="0.779" height="2.2" fill="#777772"/><ellipse cx="0.372" rx="0.306" ry="0.919" fill="#84847e"/><rect x="0.419" y="-1.1" width="0.681" height="2.2" fill="#84847e"/><ellipse cx="0.469" rx="0.289" ry="0.868" fill="#90908a"/><rect x="0.527" y="-1.1" width="0.573" height="2.2" fill="#90908a"/><ellipse cx="0.574" rx="0.264" ry="0.793" fill="#9c9c95"/><rect x="0.646" y="-1.1" width="0.454" height="2.2" fill="#9c9c95"/><ellipse cx="0.689" rx="0.228" ry="0.683" fill="#a9a9a1"/><rect x="0.775" y="-1.1" width="0.325" height="2.2" fill="#a9a9a1"/><ellipse cx="0.811" rx="0.170" ry="0.509" fill="#b5b5ad"/><rect x="0.913" y="-1.1" width="0.187" height="2.2" fill="#b5b5ad"/></g><ellipse cx="0.562" cy="0.031" rx="0.616" ry="0.75" fill="url(#sp)"/><circle r="1" fill="none" stroke="#1a1a1a" stroke-opacity="0.35" stroke-width="1.2" vector-effect="non-scaling-stroke"/></g>
<g transform="matrix(6.087 -8.831 9.035 5.585 782.3 336.2)" clip-path="url(#uc)"><g filter="url(#bl)"><rect x="-1.1" y="-1.1" width="2.2" height="2.2" fill="#121211"/><ellipse cx="-0.303" rx="0.470" ry="0.937" fill="#161615"/><rect x="-0.405" y="-1.1" width="1.505" height="2.2" fill="#161615"/><ellipse cx="-0.202" rx="0.488" ry="0.972" fill="#1d1d1b"/><rect x="-0.270" y="-1.1" width="1.370" height="2.2" fill="#1d1d1b"/><ellipse cx="-0.101" rx="0.498" ry="0.993" fill="#232322"/><rect x="-0.135" y="-1.1" width="1.235" height="2.2" fill="#232322"/><ellipse cx="0.000" rx="0.502" ry="1.000" fill="#2d2d2b"/><rect x="0.000" y="-1.1" width="1.100" height="2.2" fill="#2d2d2b"/><ellipse cx="0.012" rx="0.502" ry="1.000" fill="#3a3a37"/><rect x="0.016" y="-1.1" width="1.084" height="2.2" fill="#3a3a37"/><ellipse cx="0.039" rx="0.501" ry="0.999" fill="#464643"/><rect x="0.053" y="-1.1" width="1.047" height="2.2" fill="#464643"/><ellipse cx="0.079" rx="0.500" ry="0.996" fill="#52524f"/><rect x="0.106" y="-1.1" width="0.994" height="2.2" fill="#52524f"/><ellipse cx="0.130" rx="0.496" ry="0.989" fill="#5f5f5a"/><rect x="0.174" y="-1.1" width="0.926" height="2.2" fill="#5f5f5a"/><ellipse cx="0.191" rx="0.489" ry="0.975" fill="#6b6b66"/><rect x="0.256" y="-1.1" width="0.844" height="2.2" fill="#6b6b66"/><ellipse cx="0.262" rx="0.478" ry="0.953" fill="#777772"/><rect x="0.350" y="-1.1" width="0.750" height="2.2" fill="#777772"/><ellipse cx="0.341" rx="0.461" ry="0.919" fill="#84847e"/><rect x="0.456" y="-1.1" width="0.644" height="2.2" fill="#84847e"/><ellipse cx="0.430" rx="0.436" ry="0.868" fill="#90908a"/><rect x="0.575" y="-1.1" width="0.525" height="2.2" fill="#90908a"/><ellipse cx="0.527" rx="0.398" ry="0.793" fill="#9c9c95"/><rect x="0.704" y="-1.1" width="0.396" height="2.2" fill="#9c9c95"/><ellipse cx="0.632" rx="0.343" ry="0.683" fill="#a9a9a1"/><rect x="0.844" y="-1.1" width="0.256" height="2.2" fill="#a9a9a1"/><ellipse cx="0.744" rx="0.256" ry="0.509" fill="#b5b5ad"/><rect x="0.995" y="-1.1" width="0.105" height="2.2" fill="#b5b5ad"/></g><ellipse cx="0.491" cy="0.031" rx="0.650" ry="0.75" fill="url(#sp)"/><circle r="1" fill="none" stroke="#1a1a1a" stroke-opacity="0.35" stroke-width="1.2" vector-effect="non-scaling-stroke"/></g>
<circle cx="875.4" cy="522.5" r="2.7" fill="#1b8fe8"/>
<g transform="matrix(1.621 -1.369 1.631 1.632 875.4 522.5)"><circle r="1" fill="url(#tg)"/></g>
<g transform="matrix(7.902 -16.216 15.246 7.117 721.7 197.8)" clip-path="url(#uc)"><g filter="url(#bl)"><rect x="-1.1" y="-1.1" width="2.2" height="2.2" fill="#121211"/><ellipse cx="-0.325" rx="0.350" ry="0.937" fill="#141413"/><rect x="-0.377" y="-1.1" width="1.477" height="2.2" fill="#141413"/><ellipse cx="-0.260" rx="0.359" ry="0.960" fill="#181817"/><rect x="-0.302" y="-1.1" width="1.402" height="2.2" fill="#181817"/><ellipse cx="-0.195" rx="0.366" ry="0.978" fill="#1c1c1b"/><rect x="-0.226" y="-1.1" width="1.326" height="2.2" fill="#1c1c1b"/><ellipse cx="-0.130" rx="0.370" ry="0.990" fill="#20201f"/><rect x="-0.151" y="-1.1" width="1.251" height="2.2" fill="#20201f"/><ellipse cx="-0.065" rx="0.373" ry="0.998" fill="#242423"/><rect x="-0.075" y="-1.1" width="1.175" height="2.2" fill="#242423"/><ellipse cx="0.000" rx="0.374" ry="1.000" fill="#2d2d2b"/><rect x="0.000" y="-1.1" width="1.100" height="2.2" fill="#2d2d2b"/><ellipse cx="0.013" rx="0.374" ry="1.000" fill="#3a3a37"/><rect x="0.015" y="-1.1" width="1.085" height="2.2" fill="#3a3a37"/><ellipse cx="0.042" rx="0.374" ry="0.999" fill="#464643"/><rect x="0.049" y="-1.1" width="1.051" height="2.2" fill="#464643"/><ellipse cx="0.085" rx="0.372" ry="0.996" fill="#52524f"/><rect x="0.099" y="-1.1" width="1.001" height="2.2" fill="#52524f"/><ellipse cx="0.140" rx="0.370" ry="0.989" fill="#5f5f5a"/><rect x="0.162" y="-1.1" width="0.938" height="2.2" fill="#5f5f5a"/><ellipse cx="0.205" rx="0.365" ry="0.975" fill="#6b6b66"/><rect x="0.238" y="-1.1" width="0.862" height="2.2" fill="#6b6b66"/><ellipse cx="0.281" rx="0.356" ry="0.953" fill="#777772"/><rect x="0.326" y="-1.1" width="0.774" height="2.2" fill="#777772"/><ellipse cx="0.366" rx="0.344" ry="0.919" fill="#84847e"/><rect x="0.426" y="-1.1" width="0.674" height="2.2" fill="#84847e"/><ellipse cx="0.461" rx="0.325" ry="0.868" fill="#90908a"/><rect x="0.536" y="-1.1" width="0.564" height="2.2" fill="#90908a"/><ellipse cx="0.565" rx="0.297" ry="0.793" fill="#9c9c95"/><rect x="0.657" y="-1.1" width="0.443" height="2.2" fill="#9c9c95"/><ellipse cx="0.677" rx="0.256" ry="0.683" fill="#a9a9a1"/><rect x="0.787" y="-1.1" width="0.313" height="2.2" fill="#a9a9a1"/><ellipse cx="0.798" rx="0.190" ry="0.509" fill="#b5b5ad"/><rect x="0.928" y="-1.1" width="0.172" height="2.2" fill="#b5b5ad"/></g><ellipse cx="0.546" cy="0.032" rx="0.624" ry="0.75" fill="url(#sp)"/><circle r="1" fill="none" stroke="#1a1a1a" stroke-opacity="0.35" stroke-width="1.2" vector-effect="non-scaling-stroke"/></g>
<g transform="matrix(5.413 -6.728 7.143 5.048 815.6 385.8)" clip-path="url(#uc)"><g filter="url(#bl)"><rect x="-1.1" y="-1.1" width="2.2" height="2.2" fill="#121211"/><ellipse cx="-0.296" rx="0.499" ry="0.937" fill="#161615"/><rect x="-0.414" y="-1.1" width="1.514" height="2.2" fill="#161615"/><ellipse cx="-0.197" rx="0.518" ry="0.972" fill="#1d1d1b"/><rect x="-0.276" y="-1.1" width="1.376" height="2.2" fill="#1d1d1b"/><ellipse cx="-0.099" rx="0.529" ry="0.993" fill="#232322"/><rect x="-0.138" y="-1.1" width="1.238" height="2.2" fill="#232322"/><ellipse cx="0.000" rx="0.533" ry="1.000" fill="#2d2d2b"/><rect x="0.000" y="-1.1" width="1.100" height="2.2" fill="#2d2d2b"/><ellipse cx="0.012" rx="0.532" ry="1.000" fill="#3a3a37"/><rect x="0.016" y="-1.1" width="1.084" height="2.2" fill="#3a3a37"/><ellipse cx="0.039" rx="0.532" ry="0.999" fill="#464643"/><rect x="0.054" y="-1.1" width="1.046" height="2.2" fill="#464643"/><ellipse cx="0.078" rx="0.530" ry="0.996" fill="#52524f"/><rect x="0.108" y="-1.1" width="0.992" height="2.2" fill="#52524f"/><ellipse cx="0.127" rx="0.526" ry="0.989" fill="#5f5f5a"/><rect x="0.178" y="-1.1" width="0.922" height="2.2" fill="#5f5f5a"/><ellipse cx="0.187" rx="0.519" ry="0.975" fill="#6b6b66"/><rect x="0.261" y="-1.1" width="0.839" height="2.2" fill="#6b6b66"/><ellipse cx="0.256" rx="0.508" ry="0.953" fill="#777772"/><rect x="0.358" y="-1.1" width="0.742" height="2.2" fill="#777772"/><ellipse cx="0.334" rx="0.489" ry="0.919" fill="#84847e"/><rect x="0.466" y="-1.1" width="0.634" height="2.2" fill="#84847e"/><ellipse cx="0.421" rx="0.462" ry="0.868" fill="#90908a"/><rect x="0.587" y="-1.1" width="0.513" height="2.2" fill="#90908a"/><ellipse cx="0.515" rx="0.422" ry="0.793" fill="#9c9c95"/><rect x="0.719" y="-1.1" width="0.381" height="2.2" fill="#9c9c95"/><ellipse cx="0.618" rx="0.364" ry="0.683" fill="#a9a9a1"/><rect x="0.863" y="-1.1" width="0.237" height="2.2" fill="#a9a9a1"/><ellipse cx="0.729" rx="0.271" ry="0.509" fill="#b5b5ad"/></g><ellipse cx="0.478" cy="0.031" rx="0.655" ry="0.75" fill="url(#sp)"/><circle r="1" fill="none" stroke="#1a1a1a" stroke-opacity="0.55" stroke-width="1.2" vector-effect="non-scaling-stroke"/></g>
<circle cx="909.7" cy="574.1" r="2.7" fill="#1b8fe8"/>
<g transform="matrix(7.743 -13.695 13.290 6.877 754.6 246.3)" clip-path="url(#uc)"><g filter="url(#bl)"><rect x="-1.1" y="-1.1" width="2.2" height="2.2" fill="#121211"/><ellipse cx="-0.319" rx="0.388" ry="0.937" fill="#141413"/><rect x="-0.384" y="-1.1" width="1.484" height="2.2" fill="#141413"/><ellipse cx="-0.255" rx="0.397" ry="0.960" fill="#181817"/><rect x="-0.308" y="-1.1" width="1.408" height="2.2" fill="#181817"/><ellipse cx="-0.191" rx="0.404" ry="0.978" fill="#1c1c1b"/><rect x="-0.231" y="-1.1" width="1.331" height="2.2" fill="#1c1c1b"/><ellipse cx="-0.127" rx="0.410" ry="0.990" fill="#20201f"/><rect x="-0.154" y="-1.1" width="1.254" height="2.2" fill="#20201f"/><ellipse cx="-0.064" rx="0.413" ry="0.998" fill="#242423"/><rect x="-0.077" y="-1.1" width="1.177" height="2.2" fill="#242423"/><ellipse cx="0.000" rx="0.414" ry="1.000" fill="#2d2d2b"/><rect x="0.000" y="-1.1" width="1.100" height="2.2" fill="#2d2d2b"/><ellipse cx="0.013" rx="0.414" ry="1.000" fill="#3a3a37"/><rect x="0.015" y="-1.1" width="1.085" height="2.2" fill="#3a3a37"/><ellipse cx="0.041" rx="0.413" ry="0.999" fill="#464643"/><rect x="0.050" y="-1.1" width="1.050" height="2.2" fill="#464643"/><ellipse cx="0.083" rx="0.412" ry="0.996" fill="#52524f"/><rect x="0.101" y="-1.1" width="0.999" height="2.2" fill="#52524f"/><ellipse cx="0.137" rx="0.409" ry="0.989" fill="#5f5f5a"/><rect x="0.165" y="-1.1" width="0.935" height="2.2" fill="#5f5f5a"/><ellipse cx="0.201" rx="0.403" ry="0.975" fill="#6b6b66"/><rect x="0.243" y="-1.1" width="0.857" height="2.2" fill="#6b6b66"/><ellipse cx="0.276" rx="0.394" ry="0.953" fill="#777772"/><rect x="0.332" y="-1.1" width="0.768" height="2.2" fill="#777772"/><ellipse cx="0.359" rx="0.380" ry="0.919" fill="#84847e"/><rect x="0.434" y="-1.1" width="0.666" height="2.2" fill="#84847e"/><ellipse cx="0.453" rx="0.359" ry="0.868" fill="#90908a"/><rect x="0.546" y="-1.1" width="0.554" height="2.2" fill="#90908a"/><ellipse cx="0.554" rx="0.328" ry="0.793" fill="#9c9c95"/><rect x="0.669" y="-1.1" width="0.431" height="2.2" fill="#9c9c95"/><ellipse cx="0.665" rx="0.283" ry="0.683" fill="#a9a9a1"/><rect x="0.802" y="-1.1" width="0.298" height="2.2" fill="#a9a9a1"/><ellipse cx="0.784" rx="0.211" ry="0.509" fill="#b5b5ad"/><rect x="0.945" y="-1.1" width="0.155" height="2.2" fill="#b5b5ad"/></g><ellipse cx="0.530" cy="0.032" rx="0.632" ry="0.75" fill="url(#sp)"/><circle r="1" fill="none" stroke="#1a1a1a" stroke-opacity="0.35" stroke-width="1.2" vector-effect="non-scaling-stroke"/></g>
<g transform="matrix(4.490 -4.753 5.281 4.277 849.6 436.4)" clip-path="url(#uc)"><g filter="url(#bl)"><rect x="-1.1" y="-1.1" width="2.2" height="2.2" fill="#121211"/><ellipse cx="-0.290" rx="0.523" ry="0.937" fill="#161615"/><rect x="-0.422" y="-1.1" width="1.522" height="2.2" fill="#161615"/><ellipse cx="-0.194" rx="0.543" ry="0.972" fill="#1d1d1b"/><rect x="-0.281" y="-1.1" width="1.381" height="2.2" fill="#1d1d1b"/><ellipse cx="-0.097" rx="0.554" ry="0.993" fill="#232322"/><rect x="-0.141" y="-1.1" width="1.241" height="2.2" fill="#232322"/><ellipse cx="0.000" rx="0.558" ry="1.000" fill="#2d2d2b"/><rect x="0.000" y="-1.1" width="1.100" height="2.2" fill="#2d2d2b"/><ellipse cx="0.011" rx="0.558" ry="1.000" fill="#3a3a37"/><rect x="0.017" y="-1.1" width="1.083" height="2.2" fill="#3a3a37"/><ellipse cx="0.038" rx="0.558" ry="0.999" fill="#464643"/><rect x="0.055" y="-1.1" width="1.045" height="2.2" fill="#464643"/><ellipse cx="0.076" rx="0.556" ry="0.996" fill="#52524f"/><rect x="0.110" y="-1.1" width="0.990" height="2.2" fill="#52524f"/><ellipse cx="0.125" rx="0.552" ry="0.989" fill="#5f5f5a"/><rect x="0.181" y="-1.1" width="0.919" height="2.2" fill="#5f5f5a"/><ellipse cx="0.183" rx="0.544" ry="0.975" fill="#6b6b66"/><rect x="0.266" y="-1.1" width="0.834" height="2.2" fill="#6b6b66"/><ellipse cx="0.251" rx="0.532" ry="0.953" fill="#777772"/><rect x="0.365" y="-1.1" width="0.735" height="2.2" fill="#777772"/><ellipse cx="0.328" rx="0.513" ry="0.919" fill="#84847e"/><rect x="0.476" y="-1.1" width="0.624" height="2.2" fill="#84847e"/><ellipse cx="0.412" rx="0.484" ry="0.868" fill="#90908a"/><rect x="0.599" y="-1.1" width="0.501" height="2.2" fill="#90908a"/><ellipse cx="0.505" rx="0.443" ry="0.793" fill="#9c9c95"/><rect x="0.734" y="-1.1" width="0.366" height="2.2" fill="#9c9c95"/><ellipse cx="0.606" rx="0.381" ry="0.683" fill="#a9a9a1"/><rect x="0.880" y="-1.1" width="0.220" height="2.2" fill="#a9a9a1"/><ellipse cx="0.714" rx="0.284" ry="0.509" fill="#b5b5ad"/></g><ellipse cx="0.467" cy="0.030" rx="0.660" ry="0.75" fill="url(#sp)"/><circle r="1" fill="none" stroke="#1a1a1a" stroke-opacity="0.55" stroke-width="1.2" vector-effect="non-scaling-stroke"/></g>
<g transform="matrix(7.408 -11.277 11.330 6.590 788.3 295.9)" clip-path="url(#uc)"><g filter="url(#bl)"><rect x="-1.1" y="-1.1" width="2.2" height="2.2" fill="#121211"/><ellipse cx="-0.312" rx="0.422" ry="0.937" fill="#141413"/><rect x="-0.392" y="-1.1" width="1.492" height="2.2" fill="#141413"/><ellipse cx="-0.250" rx="0.433" ry="0.960" fill="#181817"/><rect x="-0.314" y="-1.1" width="1.414" height="2.2" fill="#181817"/><ellipse cx="-0.187" rx="0.441" ry="0.978" fill="#1c1c1b"/><rect x="-0.235" y="-1.1" width="1.335" height="2.2" fill="#1c1c1b"/><ellipse cx="-0.125" rx="0.446" ry="0.990" fill="#20201f"/><rect x="-0.157" y="-1.1" width="1.257" height="2.2" fill="#20201f"/><ellipse cx="-0.062" rx="0.450" ry="0.998" fill="#242423"/><rect x="-0.078" y="-1.1" width="1.178" height="2.2" fill="#242423"/><ellipse cx="0.000" rx="0.451" ry="1.000" fill="#2d2d2b"/><rect x="0.000" y="-1.1" width="1.100" height="2.2" fill="#2d2d2b"/><ellipse cx="0.012" rx="0.451" ry="1.000" fill="#3a3a37"/><rect x="0.015" y="-1.1" width="1.085" height="2.2" fill="#3a3a37"/><ellipse cx="0.041" rx="0.450" ry="0.999" fill="#464643"/><rect x="0.051" y="-1.1" width="1.049" height="2.2" fill="#464643"/><ellipse cx="0.082" rx="0.449" ry="0.996" fill="#52524f"/><rect x="0.103" y="-1.1" width="0.997" height="2.2" fill="#52524f"/><ellipse cx="0.134" rx="0.446" ry="0.989" fill="#5f5f5a"/><rect x="0.169" y="-1.1" width="0.931" height="2.2" fill="#5f5f5a"/><ellipse cx="0.197" rx="0.440" ry="0.975" fill="#6b6b66"/><rect x="0.248" y="-1.1" width="0.852" height="2.2" fill="#6b6b66"/><ellipse cx="0.270" rx="0.430" ry="0.953" fill="#777772"/><rect x="0.339" y="-1.1" width="0.761" height="2.2" fill="#777772"/><ellipse cx="0.352" rx="0.414" ry="0.919" fill="#84847e"/><rect x="0.442" y="-1.1" width="0.658" height="2.2" fill="#84847e"/><ellipse cx="0.444" rx="0.391" ry="0.868" fill="#90908a"/><rect x="0.557" y="-1.1" width="0.543" height="2.2" fill="#90908a"/><ellipse cx="0.544" rx="0.358" ry="0.793" fill="#9c9c95"/><rect x="0.682" y="-1.1" width="0.418" height="2.2" fill="#9c9c95"/><ellipse cx="0.652" rx="0.308" ry="0.683" fill="#a9a9a1"/><rect x="0.818" y="-1.1" width="0.282" height="2.2" fill="#a9a9a1"/><ellipse cx="0.768" rx="0.230" ry="0.509" fill="#b5b5ad"/><rect x="0.964" y="-1.1" width="0.136" height="2.2" fill="#b5b5ad"/></g><ellipse cx="0.515" cy="0.032" rx="0.639" ry="0.75" fill="url(#sp)"/><circle r="1" fill="none" stroke="#1a1a1a" stroke-opacity="0.35" stroke-width="1.2" vector-effect="non-scaling-stroke"/></g>
<g transform="matrix(3.290 -2.943 3.463 3.208 884.4 488.2)" clip-path="url(#uc)"><g filter="url(#bl2)"><rect x="-1.1" y="-1.1" width="2.2" height="2.2" fill="#121211"/><ellipse cx="-0.286" rx="0.542" ry="0.937" fill="#181817"/><rect x="-0.429" y="-1.1" width="1.529" height="2.2" fill="#181817"/><ellipse cx="-0.143" rx="0.569" ry="0.985" fill="#222220"/><rect x="-0.214" y="-1.1" width="1.314" height="2.2" fill="#222220"/><ellipse cx="0.000" rx="0.578" ry="1.000" fill="#353532"/><rect x="0.000" y="-1.1" width="1.100" height="2.2" fill="#353532"/><ellipse cx="0.037" rx="0.578" ry="0.999" fill="#4d4d4a"/><rect x="0.056" y="-1.1" width="1.044" height="2.2" fill="#4d4d4a"/><ellipse cx="0.123" rx="0.572" ry="0.989" fill="#666662"/><rect x="0.184" y="-1.1" width="0.916" height="2.2" fill="#666662"/><ellipse cx="0.247" rx="0.551" ry="0.953" fill="#7f7f79"/><rect x="0.371" y="-1.1" width="0.729" height="2.2" fill="#7f7f79"/><ellipse cx="0.406" rx="0.502" ry="0.868" fill="#979791"/><rect x="0.609" y="-1.1" width="0.491" height="2.2" fill="#979791"/><ellipse cx="0.596" rx="0.395" ry="0.683" fill="#b0b0a8"/><rect x="0.895" y="-1.1" width="0.205" height="2.2" fill="#b0b0a8"/></g><ellipse cx="0.459" cy="0.029" rx="0.663" ry="0.75" fill="url(#sp)"/><circle r="1" fill="none" stroke="#1a1a1a" stroke-opacity="0.55" stroke-width="1.2" vector-effect="non-scaling-stroke"/></g>
<g transform="matrix(9.073 -19.502 17.802 8.047 725.7 152.5)" clip-path="url(#uc)"><g filter="url(#bl)"><rect x="-1.1" y="-1.1" width="2.2" height="2.2" fill="#121211"/><ellipse cx="-0.332" rx="0.296" ry="0.937" fill="#141413"/><rect x="-0.369" y="-1.1" width="1.469" height="2.2" fill="#141413"/><ellipse cx="-0.266" rx="0.304" ry="0.960" fill="#181817"/><rect x="-0.295" y="-1.1" width="1.395" height="2.2" fill="#181817"/><ellipse cx="-0.199" rx="0.309" ry="0.978" fill="#1c1c1b"/><rect x="-0.221" y="-1.1" width="1.321" height="2.2" fill="#1c1c1b"/><ellipse cx="-0.133" rx="0.313" ry="0.990" fill="#20201f"/><rect x="-0.148" y="-1.1" width="1.248" height="2.2" fill="#20201f"/><ellipse cx="-0.066" rx="0.316" ry="0.998" fill="#242423"/><rect x="-0.074" y="-1.1" width="1.174" height="2.2" fill="#242423"/><ellipse cx="0.000" rx="0.317" ry="1.000" fill="#2d2d2b"/><rect x="0.000" y="-1.1" width="1.100" height="2.2" fill="#2d2d2b"/><ellipse cx="0.013" rx="0.316" ry="1.000" fill="#3a3a37"/><rect x="0.015" y="-1.1" width="1.085" height="2.2" fill="#3a3a37"/><ellipse cx="0.043" rx="0.316" ry="0.999" fill="#464643"/><rect x="0.048" y="-1.1" width="1.052" height="2.2" fill="#464643"/><ellipse cx="0.087" rx="0.315" ry="0.996" fill="#52524f"/><rect x="0.097" y="-1.1" width="1.003" height="2.2" fill="#52524f"/><ellipse cx="0.143" rx="0.313" ry="0.989" fill="#5f5f5a"/><rect x="0.159" y="-1.1" width="0.941" height="2.2" fill="#5f5f5a"/><ellipse cx="0.210" rx="0.309" ry="0.975" fill="#6b6b66"/><rect x="0.233" y="-1.1" width="0.867" height="2.2" fill="#6b6b66"/><ellipse cx="0.287" rx="0.302" ry="0.953" fill="#777772"/><rect x="0.319" y="-1.1" width="0.781" height="2.2" fill="#777772"/><ellipse cx="0.375" rx="0.291" ry="0.919" fill="#84847e"/><rect x="0.416" y="-1.1" width="0.684" height="2.2" fill="#84847e"/><ellipse cx="0.471" rx="0.275" ry="0.868" fill="#90908a"/><rect x="0.524" y="-1.1" width="0.576" height="2.2" fill="#90908a"/><ellipse cx="0.578" rx="0.251" ry="0.793" fill="#9c9c95"/><rect x="0.642" y="-1.1" width="0.458" height="2.2" fill="#9c9c95"/><ellipse cx="0.693" rx="0.216" ry="0.683" fill="#a9a9a1"/><rect x="0.770" y="-1.1" width="0.330" height="2.2" fill="#a9a9a1"/><ellipse cx="0.816" rx="0.161" ry="0.509" fill="#b5b5ad"/><rect x="0.907" y="-1.1" width="0.193" height="2.2" fill="#b5b5ad"/></g><ellipse cx="0.570" cy="0.032" rx="0.611" ry="0.75" fill="url(#sp)"/><circle r="1" fill="none" stroke="#1a1a1a" stroke-opacity="0.35" stroke-width="1.2" vector-effect="non-scaling-stroke"/></g>
<g transform="matrix(6.864 -8.967 9.372 6.185 822.7 346.6)" clip-path="url(#uc)"><g filter="url(#bl)"><rect x="-1.1" y="-1.1" width="2.2" height="2.2" fill="#121211"/><ellipse cx="-0.306" rx="0.454" ry="0.937" fill="#161615"/><rect x="-0.400" y="-1.1" width="1.500" height="2.2" fill="#161615"/><ellipse cx="-0.204" rx="0.471" ry="0.972" fill="#1d1d1b"/><rect x="-0.267" y="-1.1" width="1.367" height="2.2" fill="#1d1d1b"/><ellipse cx="-0.102" rx="0.481" ry="0.993" fill="#232322"/><rect x="-0.133" y="-1.1" width="1.233" height="2.2" fill="#232322"/><ellipse cx="0.000" rx="0.485" ry="1.000" fill="#2d2d2b"/><rect x="0.000" y="-1.1" width="1.100" height="2.2" fill="#2d2d2b"/><ellipse cx="0.012" rx="0.484" ry="1.000" fill="#3a3a37"/><rect x="0.016" y="-1.1" width="1.084" height="2.2" fill="#3a3a37"/><ellipse cx="0.040" rx="0.484" ry="0.999" fill="#464643"/><rect x="0.052" y="-1.1" width="1.048" height="2.2" fill="#464643"/><ellipse cx="0.080" rx="0.482" ry="0.996" fill="#52524f"/><rect x="0.105" y="-1.1" width="0.995" height="2.2" fill="#52524f"/><ellipse cx="0.132" rx="0.479" ry="0.989" fill="#5f5f5a"/><rect x="0.172" y="-1.1" width="0.928" height="2.2" fill="#5f5f5a"/><ellipse cx="0.193" rx="0.473" ry="0.975" fill="#6b6b66"/><rect x="0.253" y="-1.1" width="0.847" height="2.2" fill="#6b6b66"/><ellipse cx="0.265" rx="0.462" ry="0.953" fill="#777772"/><rect x="0.346" y="-1.1" width="0.754" height="2.2" fill="#777772"/><ellipse cx="0.345" rx="0.445" ry="0.919" fill="#84847e"/><rect x="0.451" y="-1.1" width="0.649" height="2.2" fill="#84847e"/><ellipse cx="0.435" rx="0.420" ry="0.868" fill="#90908a"/><rect x="0.568" y="-1.1" width="0.532" height="2.2" fill="#90908a"/><ellipse cx="0.533" rx="0.384" ry="0.793" fill="#9c9c95"/><rect x="0.696" y="-1.1" width="0.404" height="2.2" fill="#9c9c95"/><ellipse cx="0.639" rx="0.331" ry="0.683" fill="#a9a9a1"/><rect x="0.835" y="-1.1" width="0.265" height="2.2" fill="#a9a9a1"/><ellipse cx="0.753" rx="0.247" ry="0.509" fill="#b5b5ad"/><rect x="0.984" y="-1.1" width="0.116" height="2.2" fill="#b5b5ad"/></g><ellipse cx="0.501" cy="0.031" rx="0.645" ry="0.75" fill="url(#sp)"/><circle r="1" fill="none" stroke="#1a1a1a" stroke-opacity="0.35" stroke-width="1.2" vector-effect="non-scaling-stroke"/></g>
<circle cx="919.9" cy="541.1" r="2.7" fill="#1b8fe8"/>
<g transform="matrix(1.797 -1.342 1.702 1.793 919.9 541.1)"><circle r="1" fill="url(#tg)"/></g>
<g transform="matrix(9.024 -16.723 15.809 7.813 759.8 202.1)" clip-path="url(#uc)"><g filter="url(#bl)"><rect x="-1.1" y="-1.1" width="2.2" height="2.2" fill="#121211"/><ellipse cx="-0.327" rx="0.334" ry="0.937" fill="#141413"/><rect x="-0.375" y="-1.1" width="1.475" height="2.2" fill="#141413"/><ellipse cx="-0.262" rx="0.343" ry="0.960" fill="#181817"/><rect x="-0.300" y="-1.1" width="1.400" height="2.2" fill="#181817"/><ellipse cx="-0.196" rx="0.349" ry="0.978" fill="#1c1c1b"/><rect x="-0.225" y="-1.1" width="1.325" height="2.2" fill="#1c1c1b"/><ellipse cx="-0.131" rx="0.353" ry="0.990" fill="#20201f"/><rect x="-0.150" y="-1.1" width="1.250" height="2.2" fill="#20201f"/><ellipse cx="-0.065" rx="0.356" ry="0.998" fill="#242423"/><rect x="-0.075" y="-1.1" width="1.175" height="2.2" fill="#242423"/><ellipse cx="0.000" rx="0.357" ry="1.000" fill="#2d2d2b"/><rect x="0.000" y="-1.1" width="1.100" height="2.2" fill="#2d2d2b"/><ellipse cx="0.013" rx="0.357" ry="1.000" fill="#3a3a37"/><rect x="0.015" y="-1.1" width="1.085" height="2.2" fill="#3a3a37"/><ellipse cx="0.043" rx="0.357" ry="0.999" fill="#464643"/><rect x="0.049" y="-1.1" width="1.051" height="2.2" fill="#464643"/><ellipse cx="0.086" rx="0.355" ry="0.996" fill="#52524f"/><rect x="0.098" y="-1.1" width="1.002" height="2.2" fill="#52524f"/><ellipse cx="0.141" rx="0.353" ry="0.989" fill="#5f5f5a"/><rect x="0.161" y="-1.1" width="0.939" height="2.2" fill="#5f5f5a"/><ellipse cx="0.206" rx="0.348" ry="0.975" fill="#6b6b66"/><rect x="0.237" y="-1.1" width="0.863" height="2.2" fill="#6b6b66"/><ellipse cx="0.283" rx="0.340" ry="0.953" fill="#777772"/><rect x="0.324" y="-1.1" width="0.776" height="2.2" fill="#777772"/><ellipse cx="0.369" rx="0.328" ry="0.919" fill="#84847e"/><rect x="0.423" y="-1.1" width="0.677" height="2.2" fill="#84847e"/><ellipse cx="0.464" rx="0.310" ry="0.868" fill="#90908a"/><rect x="0.532" y="-1.1" width="0.568" height="2.2" fill="#90908a"/><ellipse cx="0.569" rx="0.283" ry="0.793" fill="#9c9c95"/><rect x="0.652" y="-1.1" width="0.448" height="2.2" fill="#9c9c95"/><ellipse cx="0.682" rx="0.244" ry="0.683" fill="#a9a9a1"/><rect x="0.782" y="-1.1" width="0.318" height="2.2" fill="#a9a9a1"/><ellipse cx="0.804" rx="0.182" ry="0.509" fill="#b5b5ad"/><rect x="0.921" y="-1.1" width="0.179" height="2.2" fill="#b5b5ad"/></g><ellipse cx="0.554" cy="0.032" rx="0.619" ry="0.75" fill="url(#sp)"/><circle r="1" fill="none" stroke="#1a1a1a" stroke-opacity="0.35" stroke-width="1.2" vector-effect="non-scaling-stroke"/></g>
<g transform="matrix(6.079 -6.781 7.427 5.586 857.9 398.5)" clip-path="url(#uc)"><g filter="url(#bl)"><rect x="-1.1" y="-1.1" width="2.2" height="2.2" fill="#121211"/><ellipse cx="-0.300" rx="0.481" ry="0.937" fill="#161615"/><rect x="-0.408" y="-1.1" width="1.508" height="2.2" fill="#161615"/><ellipse cx="-0.200" rx="0.499" ry="0.972" fill="#1d1d1b"/><rect x="-0.272" y="-1.1" width="1.372" height="2.2" fill="#1d1d1b"/><ellipse cx="-0.100" rx="0.510" ry="0.993" fill="#232322"/><rect x="-0.136" y="-1.1" width="1.236" height="2.2" fill="#232322"/><ellipse cx="0.000" rx="0.513" ry="1.000" fill="#2d2d2b"/><rect x="0.000" y="-1.1" width="1.100" height="2.2" fill="#2d2d2b"/><ellipse cx="0.012" rx="0.513" ry="1.000" fill="#3a3a37"/><rect x="0.016" y="-1.1" width="1.084" height="2.2" fill="#3a3a37"/><ellipse cx="0.039" rx="0.513" ry="0.999" fill="#464643"/><rect x="0.053" y="-1.1" width="1.047" height="2.2" fill="#464643"/><ellipse cx="0.079" rx="0.511" ry="0.996" fill="#52524f"/><rect x="0.107" y="-1.1" width="0.993" height="2.2" fill="#52524f"/><ellipse cx="0.129" rx="0.508" ry="0.989" fill="#5f5f5a"/><rect x="0.175" y="-1.1" width="0.925" height="2.2" fill="#5f5f5a"/><ellipse cx="0.190" rx="0.501" ry="0.975" fill="#6b6b66"/><rect x="0.258" y="-1.1" width="0.842" height="2.2" fill="#6b6b66"/><ellipse cx="0.260" rx="0.489" ry="0.953" fill="#777772"/><rect x="0.353" y="-1.1" width="0.747" height="2.2" fill="#777772"/><ellipse cx="0.339" rx="0.472" ry="0.919" fill="#84847e"/><rect x="0.460" y="-1.1" width="0.640" height="2.2" fill="#84847e"/><ellipse cx="0.427" rx="0.446" ry="0.868" fill="#90908a"/><rect x="0.579" y="-1.1" width="0.521" height="2.2" fill="#90908a"/><ellipse cx="0.523" rx="0.407" ry="0.793" fill="#9c9c95"/><rect x="0.710" y="-1.1" width="0.390" height="2.2" fill="#9c9c95"/><ellipse cx="0.627" rx="0.351" ry="0.683" fill="#a9a9a1"/><rect x="0.851" y="-1.1" width="0.249" height="2.2" fill="#a9a9a1"/><ellipse cx="0.739" rx="0.261" ry="0.509" fill="#b5b5ad"/></g><ellipse cx="0.489" cy="0.031" rx="0.650" ry="0.75" fill="url(#sp)"/><circle r="1" fill="none" stroke="#1a1a1a" stroke-opacity="0.35" stroke-width="1.2" vector-effect="non-scaling-stroke"/></g>
<g transform="matrix(8.807 -14.061 13.806 7.581 794.6 252.9)" clip-path="url(#uc)"><g filter="url(#bl)"><rect x="-1.1" y="-1.1" width="2.2" height="2.2" fill="#121211"/><ellipse cx="-0.321" rx="0.371" ry="0.937" fill="#141413"/><rect x="-0.381" y="-1.1" width="1.481" height="2.2" fill="#141413"/><ellipse cx="-0.257" rx="0.380" ry="0.960" fill="#181817"/><rect x="-0.305" y="-1.1" width="1.405" height="2.2" fill="#181817"/><ellipse cx="-0.193" rx="0.387" ry="0.978" fill="#1c1c1b"/><rect x="-0.229" y="-1.1" width="1.329" height="2.2" fill="#1c1c1b"/><ellipse cx="-0.129" rx="0.392" ry="0.990" fill="#20201f"/><rect x="-0.152" y="-1.1" width="1.252" height="2.2" fill="#20201f"/><ellipse cx="-0.064" rx="0.395" ry="0.998" fill="#242423"/><rect x="-0.076" y="-1.1" width="1.176" height="2.2" fill="#242423"/><ellipse cx="0.000" rx="0.396" ry="1.000" fill="#2d2d2b"/><rect x="0.000" y="-1.1" width="1.100" height="2.2" fill="#2d2d2b"/><ellipse cx="0.013" rx="0.396" ry="1.000" fill="#3a3a37"/><rect x="0.015" y="-1.1" width="1.085" height="2.2" fill="#3a3a37"/><ellipse cx="0.042" rx="0.396" ry="0.999" fill="#464643"/><rect x="0.050" y="-1.1" width="1.050" height="2.2" fill="#464643"/><ellipse cx="0.084" rx="0.394" ry="0.996" fill="#52524f"/><rect x="0.100" y="-1.1" width="1.000" height="2.2" fill="#52524f"/><ellipse cx="0.138" rx="0.391" ry="0.989" fill="#5f5f5a"/><rect x="0.164" y="-1.1" width="0.936" height="2.2" fill="#5f5f5a"/><ellipse cx="0.203" rx="0.386" ry="0.975" fill="#6b6b66"/><rect x="0.241" y="-1.1" width="0.859" height="2.2" fill="#6b6b66"/><ellipse cx="0.278" rx="0.377" ry="0.953" fill="#777772"/><rect x="0.330" y="-1.1" width="0.770" height="2.2" fill="#777772"/><ellipse cx="0.363" rx="0.364" ry="0.919" fill="#84847e"/><rect x="0.430" y="-1.1" width="0.670" height="2.2" fill="#84847e"/><ellipse cx="0.456" rx="0.344" ry="0.868" fill="#90908a"/><rect x="0.541" y="-1.1" width="0.559" height="2.2" fill="#90908a"/><ellipse cx="0.559" rx="0.314" ry="0.793" fill="#9c9c95"/><rect x="0.663" y="-1.1" width="0.437" height="2.2" fill="#9c9c95"/><ellipse cx="0.671" rx="0.271" ry="0.683" fill="#a9a9a1"/><rect x="0.795" y="-1.1" width="0.305" height="2.2" fill="#a9a9a1"/><ellipse cx="0.790" rx="0.202" ry="0.509" fill="#b5b5ad"/><rect x="0.937" y="-1.1" width="0.163" height="2.2" fill="#b5b5ad"/></g><ellipse cx="0.539" cy="0.032" rx="0.627" ry="0.75" fill="url(#sp)"/><circle r="1" fill="none" stroke="#1a1a1a" stroke-opacity="0.35" stroke-width="1.2" vector-effect="non-scaling-stroke"/></g>
<g transform="matrix(5.022 -4.748 5.508 4.722 893.9 451.6)" clip-path="url(#uc)"><g filter="url(#bl)"><rect x="-1.1" y="-1.1" width="2.2" height="2.2" fill="#121211"/><ellipse cx="-0.295" rx="0.503" ry="0.937" fill="#161615"/><rect x="-0.415" y="-1.1" width="1.515" height="2.2" fill="#161615"/><ellipse cx="-0.197" rx="0.522" ry="0.972" fill="#1d1d1b"/><rect x="-0.277" y="-1.1" width="1.377" height="2.2" fill="#1d1d1b"/><ellipse cx="-0.098" rx="0.534" ry="0.993" fill="#232322"/><rect x="-0.138" y="-1.1" width="1.238" height="2.2" fill="#232322"/><ellipse cx="0.000" rx="0.537" ry="1.000" fill="#2d2d2b"/><rect x="0.000" y="-1.1" width="1.100" height="2.2" fill="#2d2d2b"/><ellipse cx="0.012" rx="0.537" ry="1.000" fill="#3a3a37"/><rect x="0.016" y="-1.1" width="1.084" height="2.2" fill="#3a3a37"/><ellipse cx="0.038" rx="0.537" ry="0.999" fill="#464643"/><rect x="0.054" y="-1.1" width="1.046" height="2.2" fill="#464643"/><ellipse cx="0.077" rx="0.535" ry="0.996" fill="#52524f"/><rect x="0.109" y="-1.1" width="0.991" height="2.2" fill="#52524f"/><ellipse cx="0.127" rx="0.531" ry="0.989" fill="#5f5f5a"/><rect x="0.178" y="-1.1" width="0.922" height="2.2" fill="#5f5f5a"/><ellipse cx="0.186" rx="0.524" ry="0.975" fill="#6b6b66"/><rect x="0.262" y="-1.1" width="0.838" height="2.2" fill="#6b6b66"/><ellipse cx="0.255" rx="0.512" ry="0.953" fill="#777772"/><rect x="0.359" y="-1.1" width="0.741" height="2.2" fill="#777772"/><ellipse cx="0.333" rx="0.494" ry="0.919" fill="#84847e"/><rect x="0.468" y="-1.1" width="0.632" height="2.2" fill="#84847e"/><ellipse cx="0.419" rx="0.466" ry="0.868" fill="#90908a"/><rect x="0.589" y="-1.1" width="0.511" height="2.2" fill="#90908a"/><ellipse cx="0.514" rx="0.426" ry="0.793" fill="#9c9c95"/><rect x="0.722" y="-1.1" width="0.378" height="2.2" fill="#9c9c95"/><ellipse cx="0.616" rx="0.367" ry="0.683" fill="#a9a9a1"/><rect x="0.866" y="-1.1" width="0.234" height="2.2" fill="#a9a9a1"/><ellipse cx="0.726" rx="0.273" ry="0.509" fill="#b5b5ad"/></g><ellipse cx="0.480" cy="0.030" rx="0.655" ry="0.75" fill="url(#sp)"/><circle r="1" fill="none" stroke="#1a1a1a" stroke-opacity="0.55" stroke-width="1.2" vector-effect="non-scaling-stroke"/></g>
<g transform="matrix(8.393 -11.516 11.795 7.282 830.3 304.8)" clip-path="url(#uc)"><g filter="url(#bl)"><rect x="-1.1" y="-1.1" width="2.2" height="2.2" fill="#121211"/><ellipse cx="-0.316" rx="0.405" ry="0.937" fill="#141413"/><rect x="-0.388" y="-1.1" width="1.488" height="2.2" fill="#141413"/><ellipse cx="-0.253" rx="0.415" ry="0.960" fill="#181817"/><rect x="-0.310" y="-1.1" width="1.410" height="2.2" fill="#181817"/><ellipse cx="-0.189" rx="0.423" ry="0.978" fill="#1c1c1b"/><rect x="-0.233" y="-1.1" width="1.333" height="2.2" fill="#1c1c1b"/><ellipse cx="-0.126" rx="0.428" ry="0.990" fill="#20201f"/><rect x="-0.155" y="-1.1" width="1.255" height="2.2" fill="#20201f"/><ellipse cx="-0.063" rx="0.431" ry="0.998" fill="#242423"/><rect x="-0.078" y="-1.1" width="1.178" height="2.2" fill="#242423"/><ellipse cx="0.000" rx="0.432" ry="1.000" fill="#2d2d2b"/><rect x="0.000" y="-1.1" width="1.100" height="2.2" fill="#2d2d2b"/><ellipse cx="0.012" rx="0.432" ry="1.000" fill="#3a3a37"/><rect x="0.015" y="-1.1" width="1.085" height="2.2" fill="#3a3a37"/><ellipse cx="0.041" rx="0.432" ry="0.999" fill="#464643"/><rect x="0.050" y="-1.1" width="1.050" height="2.2" fill="#464643"/><ellipse cx="0.083" rx="0.430" ry="0.996" fill="#52524f"/><rect x="0.102" y="-1.1" width="0.998" height="2.2" fill="#52524f"/><ellipse cx="0.136" rx="0.427" ry="0.989" fill="#5f5f5a"/><rect x="0.167" y="-1.1" width="0.933" height="2.2" fill="#5f5f5a"/><ellipse cx="0.199" rx="0.421" ry="0.975" fill="#6b6b66"/><rect x="0.245" y="-1.1" width="0.855" height="2.2" fill="#6b6b66"/><ellipse cx="0.273" rx="0.412" ry="0.953" fill="#777772"/><rect x="0.336" y="-1.1" width="0.764" height="2.2" fill="#777772"/><ellipse cx="0.356" rx="0.397" ry="0.919" fill="#84847e"/><rect x="0.438" y="-1.1" width="0.662" height="2.2" fill="#84847e"/><ellipse cx="0.448" rx="0.375" ry="0.868" fill="#90908a"/><rect x="0.551" y="-1.1" width="0.549" height="2.2" fill="#90908a"/><ellipse cx="0.549" rx="0.343" ry="0.793" fill="#9c9c95"/><rect x="0.675" y="-1.1" width="0.425" height="2.2" fill="#9c9c95"/><ellipse cx="0.659" rx="0.295" ry="0.683" fill="#a9a9a1"/><rect x="0.810" y="-1.1" width="0.290" height="2.2" fill="#a9a9a1"/><ellipse cx="0.776" rx="0.220" ry="0.509" fill="#b5b5ad"/><rect x="0.954" y="-1.1" width="0.146" height="2.2" fill="#b5b5ad"/></g><ellipse cx="0.525" cy="0.032" rx="0.634" ry="0.75" fill="url(#sp)"/><circle r="1" fill="none" stroke="#1a1a1a" stroke-opacity="0.35" stroke-width="1.2" vector-effect="non-scaling-stroke"/></g>
<g transform="matrix(3.666 -2.908 3.629 3.532 930.8 505.9)" clip-path="url(#uc)"><g filter="url(#bl2)"><rect x="-1.1" y="-1.1" width="2.2" height="2.2" fill="#121211"/><ellipse cx="-0.291" rx="0.520" ry="0.937" fill="#181817"/><rect x="-0.421" y="-1.1" width="1.521" height="2.2" fill="#181817"/><ellipse cx="-0.146" rx="0.547" ry="0.985" fill="#222220"/><rect x="-0.210" y="-1.1" width="1.310" height="2.2" fill="#222220"/><ellipse cx="0.000" rx="0.555" ry="1.000" fill="#353532"/><rect x="0.000" y="-1.1" width="1.100" height="2.2" fill="#353532"/><ellipse cx="0.038" rx="0.555" ry="0.999" fill="#4d4d4a"/><rect x="0.055" y="-1.1" width="1.045" height="2.2" fill="#4d4d4a"/><ellipse cx="0.125" rx="0.549" ry="0.989" fill="#666662"/><rect x="0.181" y="-1.1" width="0.919" height="2.2" fill="#666662"/><ellipse cx="0.252" rx="0.529" ry="0.953" fill="#7f7f79"/><rect x="0.364" y="-1.1" width="0.736" height="2.2" fill="#7f7f79"/><ellipse cx="0.413" rx="0.482" ry="0.868" fill="#979791"/><rect x="0.598" y="-1.1" width="0.502" height="2.2" fill="#979791"/><ellipse cx="0.607" rx="0.379" ry="0.683" fill="#b0b0a8"/><rect x="0.878" y="-1.1" width="0.222" height="2.2" fill="#b0b0a8"/></g><ellipse cx="0.473" cy="0.028" rx="0.658" ry="0.75" fill="url(#sp)"/><circle r="1" fill="none" stroke="#1a1a1a" stroke-opacity="0.55" stroke-width="1.2" vector-effect="non-scaling-stroke"/></g>
<g transform="matrix(10.412 -20.211 18.506 8.787 765.3 154.9)" clip-path="url(#uc)"><g filter="url(#bl)"><rect x="-1.1" y="-1.1" width="2.2" height="2.2" fill="#121211"/><ellipse cx="-0.334" rx="0.279" ry="0.937" fill="#141413"/><rect x="-0.367" y="-1.1" width="1.467" height="2.2" fill="#141413"/><ellipse cx="-0.267" rx="0.286" ry="0.960" fill="#181817"/><rect x="-0.293" y="-1.1" width="1.393" height="2.2" fill="#181817"/><ellipse cx="-0.200" rx="0.291" ry="0.978" fill="#1c1c1b"/><rect x="-0.220" y="-1.1" width="1.320" height="2.2" fill="#1c1c1b"/><ellipse cx="-0.134" rx="0.295" ry="0.990" fill="#20201f"/><rect x="-0.147" y="-1.1" width="1.247" height="2.2" fill="#20201f"/><ellipse cx="-0.067" rx="0.297" ry="0.998" fill="#242423"/><rect x="-0.073" y="-1.1" width="1.173" height="2.2" fill="#242423"/><ellipse cx="0.000" rx="0.298" ry="1.000" fill="#2d2d2b"/><rect x="0.000" y="-1.1" width="1.100" height="2.2" fill="#2d2d2b"/><ellipse cx="0.013" rx="0.298" ry="1.000" fill="#3a3a37"/><rect x="0.014" y="-1.1" width="1.086" height="2.2" fill="#3a3a37"/><ellipse cx="0.043" rx="0.297" ry="0.999" fill="#464643"/><rect x="0.048" y="-1.1" width="1.052" height="2.2" fill="#464643"/><ellipse cx="0.087" rx="0.296" ry="0.996" fill="#52524f"/><rect x="0.096" y="-1.1" width="1.004" height="2.2" fill="#52524f"/><ellipse cx="0.144" rx="0.294" ry="0.989" fill="#5f5f5a"/><rect x="0.158" y="-1.1" width="0.942" height="2.2" fill="#5f5f5a"/><ellipse cx="0.211" rx="0.290" ry="0.975" fill="#6b6b66"/><rect x="0.232" y="-1.1" width="0.868" height="2.2" fill="#6b6b66"/><ellipse cx="0.289" rx="0.284" ry="0.953" fill="#777772"/><rect x="0.317" y="-1.1" width="0.783" height="2.2" fill="#777772"/><ellipse cx="0.377" rx="0.273" ry="0.919" fill="#84847e"/><rect x="0.414" y="-1.1" width="0.686" height="2.2" fill="#84847e"/><ellipse cx="0.475" rx="0.258" ry="0.868" fill="#90908a"/><rect x="0.521" y="-1.1" width="0.579" height="2.2" fill="#90908a"/><ellipse cx="0.581" rx="0.236" ry="0.793" fill="#9c9c95"/><rect x="0.638" y="-1.1" width="0.462" height="2.2" fill="#9c9c95"/><ellipse cx="0.697" rx="0.203" ry="0.683" fill="#a9a9a1"/><rect x="0.765" y="-1.1" width="0.335" height="2.2" fill="#a9a9a1"/><ellipse cx="0.822" rx="0.151" ry="0.509" fill="#b5b5ad"/><rect x="0.902" y="-1.1" width="0.198" height="2.2" fill="#b5b5ad"/></g><ellipse cx="0.579" cy="0.033" rx="0.606" ry="0.75" fill="url(#sp)"/><circle r="1" fill="none" stroke="#1a1a1a" stroke-opacity="0.35" stroke-width="1.2" vector-effect="non-scaling-stroke"/></g>
<g transform="matrix(7.748 -9.096 9.783 6.839 866.8 358)" clip-path="url(#uc)"><g filter="url(#bl)"><rect x="-1.1" y="-1.1" width="2.2" height="2.2" fill="#121211"/><ellipse cx="-0.310" rx="0.435" ry="0.937" fill="#161615"/><rect x="-0.395" y="-1.1" width="1.495" height="2.2" fill="#161615"/><ellipse cx="-0.207" rx="0.451" ry="0.972" fill="#1d1d1b"/><rect x="-0.263" y="-1.1" width="1.363" height="2.2" fill="#1d1d1b"/><ellipse cx="-0.103" rx="0.461" ry="0.993" fill="#232322"/><rect x="-0.132" y="-1.1" width="1.232" height="2.2" fill="#232322"/><ellipse cx="0.000" rx="0.464" ry="1.000" fill="#2d2d2b"/><rect x="0.000" y="-1.1" width="1.100" height="2.2" fill="#2d2d2b"/><ellipse cx="0.012" rx="0.464" ry="1.000" fill="#3a3a37"/><rect x="0.016" y="-1.1" width="1.084" height="2.2" fill="#3a3a37"/><ellipse cx="0.040" rx="0.464" ry="0.999" fill="#464643"/><rect x="0.051" y="-1.1" width="1.049" height="2.2" fill="#464643"/><ellipse cx="0.081" rx="0.462" ry="0.996" fill="#52524f"/><rect x="0.103" y="-1.1" width="0.997" height="2.2" fill="#52524f"/><ellipse cx="0.133" rx="0.459" ry="0.989" fill="#5f5f5a"/><rect x="0.170" y="-1.1" width="0.930" height="2.2" fill="#5f5f5a"/><ellipse cx="0.196" rx="0.453" ry="0.975" fill="#6b6b66"/><rect x="0.250" y="-1.1" width="0.850" height="2.2" fill="#6b6b66"/><ellipse cx="0.268" rx="0.443" ry="0.953" fill="#777772"/><rect x="0.342" y="-1.1" width="0.758" height="2.2" fill="#777772"/><ellipse cx="0.350" rx="0.427" ry="0.919" fill="#84847e"/><rect x="0.446" y="-1.1" width="0.654" height="2.2" fill="#84847e"/><ellipse cx="0.440" rx="0.403" ry="0.868" fill="#90908a"/><rect x="0.561" y="-1.1" width="0.539" height="2.2" fill="#90908a"/><ellipse cx="0.539" rx="0.368" ry="0.793" fill="#9c9c95"/><rect x="0.688" y="-1.1" width="0.412" height="2.2" fill="#9c9c95"/><ellipse cx="0.647" rx="0.317" ry="0.683" fill="#a9a9a1"/><rect x="0.825" y="-1.1" width="0.275" height="2.2" fill="#a9a9a1"/><ellipse cx="0.762" rx="0.236" ry="0.509" fill="#b5b5ad"/><rect x="0.972" y="-1.1" width="0.128" height="2.2" fill="#b5b5ad"/></g><ellipse cx="0.512" cy="0.031" rx="0.640" ry="0.75" fill="url(#sp)"/><circle r="1" fill="none" stroke="#1a1a1a" stroke-opacity="0.35" stroke-width="1.2" vector-effect="non-scaling-stroke"/></g>
<g transform="matrix(10.314 -17.262 16.471 8.575 801.4 206.9)" clip-path="url(#uc)"><g filter="url(#bl)"><rect x="-1.1" y="-1.1" width="2.2" height="2.2" fill="#121211"/><ellipse cx="-0.329" rx="0.316" ry="0.937" fill="#141413"/><rect x="-0.372" y="-1.1" width="1.472" height="2.2" fill="#141413"/><ellipse cx="-0.264" rx="0.324" ry="0.960" fill="#181817"/><rect x="-0.297" y="-1.1" width="1.397" height="2.2" fill="#181817"/><ellipse cx="-0.198" rx="0.330" ry="0.978" fill="#1c1c1b"/><rect x="-0.223" y="-1.1" width="1.323" height="2.2" fill="#1c1c1b"/><ellipse cx="-0.132" rx="0.334" ry="0.990" fill="#20201f"/><rect x="-0.149" y="-1.1" width="1.249" height="2.2" fill="#20201f"/><ellipse cx="-0.066" rx="0.337" ry="0.998" fill="#242423"/><rect x="-0.074" y="-1.1" width="1.174" height="2.2" fill="#242423"/><ellipse cx="0.000" rx="0.338" ry="1.000" fill="#2d2d2b"/><rect x="0.000" y="-1.1" width="1.100" height="2.2" fill="#2d2d2b"/><ellipse cx="0.013" rx="0.337" ry="1.000" fill="#3a3a37"/><rect x="0.015" y="-1.1" width="1.085" height="2.2" fill="#3a3a37"/><ellipse cx="0.043" rx="0.337" ry="0.999" fill="#464643"/><rect x="0.048" y="-1.1" width="1.052" height="2.2" fill="#464643"/><ellipse cx="0.086" rx="0.336" ry="0.996" fill="#52524f"/><rect x="0.097" y="-1.1" width="1.003" height="2.2" fill="#52524f"/><ellipse cx="0.142" rx="0.334" ry="0.989" fill="#5f5f5a"/><rect x="0.160" y="-1.1" width="0.940" height="2.2" fill="#5f5f5a"/><ellipse cx="0.208" rx="0.329" ry="0.975" fill="#6b6b66"/><rect x="0.235" y="-1.1" width="0.865" height="2.2" fill="#6b6b66"/><ellipse cx="0.285" rx="0.322" ry="0.953" fill="#777772"/><rect x="0.322" y="-1.1" width="0.778" height="2.2" fill="#777772"/><ellipse cx="0.372" rx="0.310" ry="0.919" fill="#84847e"/><rect x="0.419" y="-1.1" width="0.681" height="2.2" fill="#84847e"/><ellipse cx="0.468" rx="0.293" ry="0.868" fill="#90908a"/><rect x="0.528" y="-1.1" width="0.572" height="2.2" fill="#90908a"/><ellipse cx="0.573" rx="0.268" ry="0.793" fill="#9c9c95"/><rect x="0.647" y="-1.1" width="0.453" height="2.2" fill="#9c9c95"/><ellipse cx="0.687" rx="0.231" ry="0.683" fill="#a9a9a1"/><rect x="0.776" y="-1.1" width="0.324" height="2.2" fill="#a9a9a1"/><ellipse cx="0.810" rx="0.172" ry="0.509" fill="#b5b5ad"/><rect x="0.914" y="-1.1" width="0.186" height="2.2" fill="#b5b5ad"/></g><ellipse cx="0.564" cy="0.033" rx="0.614" ry="0.75" fill="url(#sp)"/><circle r="1" fill="none" stroke="#1a1a1a" stroke-opacity="0.35" stroke-width="1.2" vector-effect="non-scaling-stroke"/></g>
<g transform="matrix(6.836 -6.823 7.780 6.171 904.2 412.5)" clip-path="url(#uc)"><g filter="url(#bl)"><rect x="-1.1" y="-1.1" width="2.2" height="2.2" fill="#121211"/><ellipse cx="-0.305" rx="0.460" ry="0.937" fill="#161615"/><rect x="-0.402" y="-1.1" width="1.502" height="2.2" fill="#161615"/><ellipse cx="-0.203" rx="0.478" ry="0.972" fill="#1d1d1b"/><rect x="-0.268" y="-1.1" width="1.368" height="2.2" fill="#1d1d1b"/><ellipse cx="-0.102" rx="0.488" ry="0.993" fill="#232322"/><rect x="-0.134" y="-1.1" width="1.234" height="2.2" fill="#232322"/><ellipse cx="0.000" rx="0.492" ry="1.000" fill="#2d2d2b"/><rect x="0.000" y="-1.1" width="1.100" height="2.2" fill="#2d2d2b"/><ellipse cx="0.012" rx="0.491" ry="1.000" fill="#3a3a37"/><rect x="0.016" y="-1.1" width="1.084" height="2.2" fill="#3a3a37"/><ellipse cx="0.040" rx="0.491" ry="0.999" fill="#464643"/><rect x="0.052" y="-1.1" width="1.048" height="2.2" fill="#464643"/><ellipse cx="0.080" rx="0.489" ry="0.996" fill="#52524f"/><rect x="0.105" y="-1.1" width="0.995" height="2.2" fill="#52524f"/><ellipse cx="0.131" rx="0.486" ry="0.989" fill="#5f5f5a"/><rect x="0.173" y="-1.1" width="0.927" height="2.2" fill="#5f5f5a"/><ellipse cx="0.192" rx="0.479" ry="0.975" fill="#6b6b66"/><rect x="0.254" y="-1.1" width="0.846" height="2.2" fill="#6b6b66"/><ellipse cx="0.264" rx="0.468" ry="0.953" fill="#777772"/><rect x="0.348" y="-1.1" width="0.752" height="2.2" fill="#777772"/><ellipse cx="0.344" rx="0.452" ry="0.919" fill="#84847e"/><rect x="0.453" y="-1.1" width="0.647" height="2.2" fill="#84847e"/><ellipse cx="0.433" rx="0.427" ry="0.868" fill="#90908a"/><rect x="0.571" y="-1.1" width="0.529" height="2.2" fill="#90908a"/><ellipse cx="0.530" rx="0.390" ry="0.793" fill="#9c9c95"/><rect x="0.699" y="-1.1" width="0.401" height="2.2" fill="#9c9c95"/><ellipse cx="0.636" rx="0.336" ry="0.683" fill="#a9a9a1"/><rect x="0.839" y="-1.1" width="0.261" height="2.2" fill="#a9a9a1"/><ellipse cx="0.750" rx="0.250" ry="0.509" fill="#b5b5ad"/><rect x="0.988" y="-1.1" width="0.112" height="2.2" fill="#b5b5ad"/></g><ellipse cx="0.502" cy="0.030" rx="0.645" ry="0.75" fill="url(#sp)"/><circle r="1" fill="none" stroke="#1a1a1a" stroke-opacity="0.35" stroke-width="1.2" vector-effect="non-scaling-stroke"/></g>
<g transform="matrix(10.029 -14.443 14.423 8.351 838.4 260.1)" clip-path="url(#uc)"><g filter="url(#bl)"><rect x="-1.1" y="-1.1" width="2.2" height="2.2" fill="#121211"/><ellipse cx="-0.324" rx="0.352" ry="0.937" fill="#141413"/><rect x="-0.378" y="-1.1" width="1.478" height="2.2" fill="#141413"/><ellipse cx="-0.259" rx="0.361" ry="0.960" fill="#181817"/><rect x="-0.302" y="-1.1" width="1.402" height="2.2" fill="#181817"/><ellipse cx="-0.195" rx="0.367" ry="0.978" fill="#1c1c1b"/><rect x="-0.227" y="-1.1" width="1.327" height="2.2" fill="#1c1c1b"/><ellipse cx="-0.130" rx="0.372" ry="0.990" fill="#20201f"/><rect x="-0.151" y="-1.1" width="1.251" height="2.2" fill="#20201f"/><ellipse cx="-0.065" rx="0.375" ry="0.998" fill="#242423"/><rect x="-0.076" y="-1.1" width="1.176" height="2.2" fill="#242423"/><ellipse cx="0.000" rx="0.376" ry="1.000" fill="#2d2d2b"/><rect x="0.000" y="-1.1" width="1.100" height="2.2" fill="#2d2d2b"/><ellipse cx="0.013" rx="0.376" ry="1.000" fill="#3a3a37"/><rect x="0.015" y="-1.1" width="1.085" height="2.2" fill="#3a3a37"/><ellipse cx="0.042" rx="0.375" ry="0.999" fill="#464643"/><rect x="0.049" y="-1.1" width="1.051" height="2.2" fill="#464643"/><ellipse cx="0.085" rx="0.374" ry="0.996" fill="#52524f"/><rect x="0.099" y="-1.1" width="1.001" height="2.2" fill="#52524f"/><ellipse cx="0.139" rx="0.371" ry="0.989" fill="#5f5f5a"/><rect x="0.162" y="-1.1" width="0.938" height="2.2" fill="#5f5f5a"/><ellipse cx="0.205" rx="0.366" ry="0.975" fill="#6b6b66"/><rect x="0.239" y="-1.1" width="0.861" height="2.2" fill="#6b6b66"/><ellipse cx="0.281" rx="0.358" ry="0.953" fill="#777772"/><rect x="0.327" y="-1.1" width="0.773" height="2.2" fill="#777772"/><ellipse cx="0.366" rx="0.345" ry="0.919" fill="#84847e"/><rect x="0.426" y="-1.1" width="0.674" height="2.2" fill="#84847e"/><ellipse cx="0.461" rx="0.326" ry="0.868" fill="#90908a"/><rect x="0.536" y="-1.1" width="0.564" height="2.2" fill="#90908a"/><ellipse cx="0.564" rx="0.298" ry="0.793" fill="#9c9c95"/><rect x="0.657" y="-1.1" width="0.443" height="2.2" fill="#9c9c95"/><ellipse cx="0.677" rx="0.257" ry="0.683" fill="#a9a9a1"/><rect x="0.788" y="-1.1" width="0.312" height="2.2" fill="#a9a9a1"/><ellipse cx="0.798" rx="0.191" ry="0.509" fill="#b5b5ad"/><rect x="0.929" y="-1.1" width="0.171" height="2.2" fill="#b5b5ad"/></g><ellipse cx="0.550" cy="0.032" rx="0.622" ry="0.75" fill="url(#sp)"/><circle r="1" fill="none" stroke="#1a1a1a" stroke-opacity="0.35" stroke-width="1.2" vector-effect="non-scaling-stroke"/></g>
<g transform="matrix(5.626 -4.731 5.798 5.206 942.4 468.2)" clip-path="url(#uc)"><g filter="url(#bl)"><rect x="-1.1" y="-1.1" width="2.2" height="2.2" fill="#121211"/><ellipse cx="-0.300" rx="0.481" ry="0.937" fill="#161615"/><rect x="-0.408" y="-1.1" width="1.508" height="2.2" fill="#161615"/><ellipse cx="-0.200" rx="0.499" ry="0.972" fill="#1d1d1b"/><rect x="-0.272" y="-1.1" width="1.372" height="2.2" fill="#1d1d1b"/><ellipse cx="-0.100" rx="0.510" ry="0.993" fill="#232322"/><rect x="-0.136" y="-1.1" width="1.236" height="2.2" fill="#232322"/><ellipse cx="0.000" rx="0.513" ry="1.000" fill="#2d2d2b"/><rect x="0.000" y="-1.1" width="1.100" height="2.2" fill="#2d2d2b"/><ellipse cx="0.012" rx="0.513" ry="1.000" fill="#3a3a37"/><rect x="0.016" y="-1.1" width="1.084" height="2.2" fill="#3a3a37"/><ellipse cx="0.039" rx="0.513" ry="0.999" fill="#464643"/><rect x="0.053" y="-1.1" width="1.047" height="2.2" fill="#464643"/><ellipse cx="0.079" rx="0.511" ry="0.996" fill="#52524f"/><rect x="0.107" y="-1.1" width="0.993" height="2.2" fill="#52524f"/><ellipse cx="0.129" rx="0.508" ry="0.989" fill="#5f5f5a"/><rect x="0.175" y="-1.1" width="0.925" height="2.2" fill="#5f5f5a"/><ellipse cx="0.190" rx="0.501" ry="0.975" fill="#6b6b66"/><rect x="0.258" y="-1.1" width="0.842" height="2.2" fill="#6b6b66"/><ellipse cx="0.260" rx="0.489" ry="0.953" fill="#777772"/><rect x="0.353" y="-1.1" width="0.747" height="2.2" fill="#777772"/><ellipse cx="0.339" rx="0.472" ry="0.919" fill="#84847e"/><rect x="0.460" y="-1.1" width="0.640" height="2.2" fill="#84847e"/><ellipse cx="0.427" rx="0.446" ry="0.868" fill="#90908a"/><rect x="0.579" y="-1.1" width="0.521" height="2.2" fill="#90908a"/><ellipse cx="0.523" rx="0.407" ry="0.793" fill="#9c9c95"/><rect x="0.710" y="-1.1" width="0.390" height="2.2" fill="#9c9c95"/><ellipse cx="0.627" rx="0.351" ry="0.683" fill="#a9a9a1"/><rect x="0.851" y="-1.1" width="0.249" height="2.2" fill="#a9a9a1"/><ellipse cx="0.739" rx="0.261" ry="0.509" fill="#b5b5ad"/></g><ellipse cx="0.493" cy="0.029" rx="0.649" ry="0.75" fill="url(#sp)"/><circle r="1" fill="none" stroke="#1a1a1a" stroke-opacity="0.55" stroke-width="1.2" vector-effect="non-scaling-stroke"/></g>
<g transform="matrix(9.523 -11.758 12.361 8.039 876.3 314.6)" clip-path="url(#uc)"><g filter="url(#bl)"><rect x="-1.1" y="-1.1" width="2.2" height="2.2" fill="#121211"/><ellipse cx="-0.319" rx="0.385" ry="0.937" fill="#141413"/><rect x="-0.384" y="-1.1" width="1.484" height="2.2" fill="#141413"/><ellipse cx="-0.255" rx="0.394" ry="0.960" fill="#181817"/><rect x="-0.307" y="-1.1" width="1.407" height="2.2" fill="#181817"/><ellipse cx="-0.191" rx="0.401" ry="0.978" fill="#1c1c1b"/><rect x="-0.230" y="-1.1" width="1.330" height="2.2" fill="#1c1c1b"/><ellipse cx="-0.128" rx="0.407" ry="0.990" fill="#20201f"/><rect x="-0.154" y="-1.1" width="1.254" height="2.2" fill="#20201f"/><ellipse cx="-0.064" rx="0.410" ry="0.998" fill="#242423"/><rect x="-0.077" y="-1.1" width="1.177" height="2.2" fill="#242423"/><ellipse cx="0.000" rx="0.411" ry="1.000" fill="#2d2d2b"/><rect x="0.000" y="-1.1" width="1.100" height="2.2" fill="#2d2d2b"/><ellipse cx="0.013" rx="0.411" ry="1.000" fill="#3a3a37"/><rect x="0.015" y="-1.1" width="1.085" height="2.2" fill="#3a3a37"/><ellipse cx="0.042" rx="0.410" ry="0.999" fill="#464643"/><rect x="0.050" y="-1.1" width="1.050" height="2.2" fill="#464643"/><ellipse cx="0.084" rx="0.409" ry="0.996" fill="#52524f"/><rect x="0.100" y="-1.1" width="1.000" height="2.2" fill="#52524f"/><ellipse cx="0.137" rx="0.406" ry="0.989" fill="#5f5f5a"/><rect x="0.165" y="-1.1" width="0.935" height="2.2" fill="#5f5f5a"/><ellipse cx="0.202" rx="0.400" ry="0.975" fill="#6b6b66"/><rect x="0.242" y="-1.1" width="0.858" height="2.2" fill="#6b6b66"/><ellipse cx="0.276" rx="0.391" ry="0.953" fill="#777772"/><rect x="0.332" y="-1.1" width="0.768" height="2.2" fill="#777772"/><ellipse cx="0.360" rx="0.377" ry="0.919" fill="#84847e"/><rect x="0.433" y="-1.1" width="0.667" height="2.2" fill="#84847e"/><ellipse cx="0.453" rx="0.356" ry="0.868" fill="#90908a"/><rect x="0.545" y="-1.1" width="0.555" height="2.2" fill="#90908a"/><ellipse cx="0.555" rx="0.326" ry="0.793" fill="#9c9c95"/><rect x="0.668" y="-1.1" width="0.432" height="2.2" fill="#9c9c95"/><ellipse cx="0.666" rx="0.280" ry="0.683" fill="#a9a9a1"/><rect x="0.801" y="-1.1" width="0.299" height="2.2" fill="#a9a9a1"/><ellipse cx="0.785" rx="0.209" ry="0.509" fill="#b5b5ad"/><rect x="0.944" y="-1.1" width="0.156" height="2.2" fill="#b5b5ad"/></g><ellipse cx="0.537" cy="0.032" rx="0.628" ry="0.75" fill="url(#sp)"/><circle r="1" fill="none" stroke="#1a1a1a" stroke-opacity="0.35" stroke-width="1.2" vector-effect="non-scaling-stroke"/></g>
<g transform="matrix(11.963 -20.979 19.339 9.593 808.7 157.5)" clip-path="url(#uc)"><g filter="url(#bl)"><rect x="-1.1" y="-1.1" width="2.2" height="2.2" fill="#121211"/><ellipse cx="-0.336" rx="0.259" ry="0.937" fill="#141413"/><rect x="-0.364" y="-1.1" width="1.464" height="2.2" fill="#141413"/><ellipse cx="-0.269" rx="0.265" ry="0.960" fill="#181817"/><rect x="-0.291" y="-1.1" width="1.391" height="2.2" fill="#181817"/><ellipse cx="-0.202" rx="0.270" ry="0.978" fill="#1c1c1b"/><rect x="-0.218" y="-1.1" width="1.318" height="2.2" fill="#1c1c1b"/><ellipse cx="-0.135" rx="0.273" ry="0.990" fill="#20201f"/><rect x="-0.146" y="-1.1" width="1.246" height="2.2" fill="#20201f"/><ellipse cx="-0.067" rx="0.276" ry="0.998" fill="#242423"/><rect x="-0.073" y="-1.1" width="1.173" height="2.2" fill="#242423"/><ellipse cx="0.000" rx="0.276" ry="1.000" fill="#2d2d2b"/><rect x="0.000" y="-1.1" width="1.100" height="2.2" fill="#2d2d2b"/><ellipse cx="0.013" rx="0.276" ry="1.000" fill="#3a3a37"/><rect x="0.014" y="-1.1" width="1.086" height="2.2" fill="#3a3a37"/><ellipse cx="0.044" rx="0.276" ry="0.999" fill="#464643"/><rect x="0.047" y="-1.1" width="1.053" height="2.2" fill="#464643"/><ellipse cx="0.088" rx="0.275" ry="0.996" fill="#52524f"/><rect x="0.095" y="-1.1" width="1.005" height="2.2" fill="#52524f"/><ellipse cx="0.145" rx="0.273" ry="0.989" fill="#5f5f5a"/><rect x="0.157" y="-1.1" width="0.943" height="2.2" fill="#5f5f5a"/><ellipse cx="0.212" rx="0.269" ry="0.975" fill="#6b6b66"/><rect x="0.230" y="-1.1" width="0.870" height="2.2" fill="#6b6b66"/><ellipse cx="0.291" rx="0.263" ry="0.953" fill="#777772"/><rect x="0.315" y="-1.1" width="0.785" height="2.2" fill="#777772"/><ellipse cx="0.379" rx="0.254" ry="0.919" fill="#84847e"/><rect x="0.411" y="-1.1" width="0.689" height="2.2" fill="#84847e"/><ellipse cx="0.478" rx="0.240" ry="0.868" fill="#90908a"/><rect x="0.517" y="-1.1" width="0.583" height="2.2" fill="#90908a"/><ellipse cx="0.585" rx="0.219" ry="0.793" fill="#9c9c95"/><rect x="0.634" y="-1.1" width="0.466" height="2.2" fill="#9c9c95"/><ellipse cx="0.702" rx="0.189" ry="0.683" fill="#a9a9a1"/><rect x="0.760" y="-1.1" width="0.340" height="2.2" fill="#a9a9a1"/><ellipse cx="0.827" rx="0.141" ry="0.509" fill="#b5b5ad"/><rect x="0.896" y="-1.1" width="0.204" height="2.2" fill="#b5b5ad"/></g><ellipse cx="0.589" cy="0.033" rx="0.600" ry="0.75" fill="url(#sp)"/><circle r="1" fill="none" stroke="#1a1a1a" stroke-opacity="0.35" stroke-width="1.2" vector-effect="non-scaling-stroke"/></g>
<g transform="matrix(8.759 -9.219 10.293 7.552 915.2 370.5)" clip-path="url(#uc)"><g filter="url(#bl)"><rect x="-1.1" y="-1.1" width="2.2" height="2.2" fill="#121211"/><ellipse cx="-0.314" rx="0.413" ry="0.937" fill="#141413"/><rect x="-0.390" y="-1.1" width="1.490" height="2.2" fill="#141413"/><ellipse cx="-0.251" rx="0.424" ry="0.960" fill="#181817"/><rect x="-0.312" y="-1.1" width="1.412" height="2.2" fill="#181817"/><ellipse cx="-0.188" rx="0.431" ry="0.978" fill="#1c1c1b"/><rect x="-0.234" y="-1.1" width="1.334" height="2.2" fill="#1c1c1b"/><ellipse cx="-0.126" rx="0.437" ry="0.990" fill="#20201f"/><rect x="-0.156" y="-1.1" width="1.256" height="2.2" fill="#20201f"/><ellipse cx="-0.063" rx="0.440" ry="0.998" fill="#242423"/><rect x="-0.078" y="-1.1" width="1.178" height="2.2" fill="#242423"/><ellipse cx="0.000" rx="0.441" ry="1.000" fill="#2d2d2b"/><rect x="0.000" y="-1.1" width="1.100" height="2.2" fill="#2d2d2b"/><ellipse cx="0.012" rx="0.441" ry="1.000" fill="#3a3a37"/><rect x="0.015" y="-1.1" width="1.085" height="2.2" fill="#3a3a37"/><ellipse cx="0.041" rx="0.441" ry="0.999" fill="#464643"/><rect x="0.051" y="-1.1" width="1.049" height="2.2" fill="#464643"/><ellipse cx="0.082" rx="0.439" ry="0.996" fill="#52524f"/><rect x="0.102" y="-1.1" width="0.998" height="2.2" fill="#52524f"/><ellipse cx="0.135" rx="0.436" ry="0.989" fill="#5f5f5a"/><rect x="0.168" y="-1.1" width="0.932" height="2.2" fill="#5f5f5a"/><ellipse cx="0.198" rx="0.430" ry="0.975" fill="#6b6b66"/><rect x="0.246" y="-1.1" width="0.854" height="2.2" fill="#6b6b66"/><ellipse cx="0.272" rx="0.420" ry="0.953" fill="#777772"/><rect x="0.337" y="-1.1" width="0.763" height="2.2" fill="#777772"/><ellipse cx="0.354" rx="0.405" ry="0.919" fill="#84847e"/><rect x="0.440" y="-1.1" width="0.660" height="2.2" fill="#84847e"/><ellipse cx="0.446" rx="0.383" ry="0.868" fill="#90908a"/><rect x="0.554" y="-1.1" width="0.546" height="2.2" fill="#90908a"/><ellipse cx="0.546" rx="0.350" ry="0.793" fill="#9c9c95"/><rect x="0.679" y="-1.1" width="0.421" height="2.2" fill="#9c9c95"/><ellipse cx="0.655" rx="0.301" ry="0.683" fill="#a9a9a1"/><rect x="0.814" y="-1.1" width="0.286" height="2.2" fill="#a9a9a1"/><ellipse cx="0.772" rx="0.225" ry="0.509" fill="#b5b5ad"/><rect x="0.959" y="-1.1" width="0.141" height="2.2" fill="#b5b5ad"/></g><ellipse cx="0.525" cy="0.031" rx="0.634" ry="0.75" fill="url(#sp)"/><circle r="1" fill="none" stroke="#1a1a1a" stroke-opacity="0.35" stroke-width="1.2" vector-effect="non-scaling-stroke"/></g>
<g transform="matrix(11.808 -17.838 17.267 9.407 847.2 212.1)" clip-path="url(#uc)"><g filter="url(#bl)"><rect x="-1.1" y="-1.1" width="2.2" height="2.2" fill="#121211"/><ellipse cx="-0.332" rx="0.296" ry="0.937" fill="#141413"/><rect x="-0.369" y="-1.1" width="1.469" height="2.2" fill="#141413"/><ellipse cx="-0.266" rx="0.303" ry="0.960" fill="#181817"/><rect x="-0.295" y="-1.1" width="1.395" height="2.2" fill="#181817"/><ellipse cx="-0.199" rx="0.308" ry="0.978" fill="#1c1c1b"/><rect x="-0.221" y="-1.1" width="1.321" height="2.2" fill="#1c1c1b"/><ellipse cx="-0.133" rx="0.312" ry="0.990" fill="#20201f"/><rect x="-0.148" y="-1.1" width="1.248" height="2.2" fill="#20201f"/><ellipse cx="-0.066" rx="0.315" ry="0.998" fill="#242423"/><rect x="-0.074" y="-1.1" width="1.174" height="2.2" fill="#242423"/><ellipse cx="0.000" rx="0.315" ry="1.000" fill="#2d2d2b"/><rect x="0.000" y="-1.1" width="1.100" height="2.2" fill="#2d2d2b"/><ellipse cx="0.013" rx="0.315" ry="1.000" fill="#3a3a37"/><rect x="0.015" y="-1.1" width="1.085" height="2.2" fill="#3a3a37"/><ellipse cx="0.043" rx="0.315" ry="0.999" fill="#464643"/><rect x="0.048" y="-1.1" width="1.052" height="2.2" fill="#464643"/><ellipse cx="0.087" rx="0.314" ry="0.996" fill="#52524f"/><rect x="0.097" y="-1.1" width="1.003" height="2.2" fill="#52524f"/><ellipse cx="0.143" rx="0.312" ry="0.989" fill="#5f5f5a"/><rect x="0.159" y="-1.1" width="0.941" height="2.2" fill="#5f5f5a"/><ellipse cx="0.210" rx="0.308" ry="0.975" fill="#6b6b66"/><rect x="0.233" y="-1.1" width="0.867" height="2.2" fill="#6b6b66"/><ellipse cx="0.287" rx="0.301" ry="0.953" fill="#777772"/><rect x="0.319" y="-1.1" width="0.781" height="2.2" fill="#777772"/><ellipse cx="0.375" rx="0.290" ry="0.919" fill="#84847e"/><rect x="0.416" y="-1.1" width="0.684" height="2.2" fill="#84847e"/><ellipse cx="0.472" rx="0.274" ry="0.868" fill="#90908a"/><rect x="0.524" y="-1.1" width="0.576" height="2.2" fill="#90908a"/><ellipse cx="0.578" rx="0.250" ry="0.793" fill="#9c9c95"/><rect x="0.642" y="-1.1" width="0.458" height="2.2" fill="#9c9c95"/><ellipse cx="0.693" rx="0.216" ry="0.683" fill="#a9a9a1"/><rect x="0.770" y="-1.1" width="0.330" height="2.2" fill="#a9a9a1"/><ellipse cx="0.817" rx="0.161" ry="0.509" fill="#b5b5ad"/><rect x="0.907" y="-1.1" width="0.193" height="2.2" fill="#b5b5ad"/></g><ellipse cx="0.575" cy="0.033" rx="0.608" ry="0.75" fill="url(#sp)"/><circle r="1" fill="none" stroke="#1a1a1a" stroke-opacity="0.35" stroke-width="1.2" vector-effect="non-scaling-stroke"/></g>
<g transform="matrix(7.702 -6.854 8.226 6.809 955 427.8)" clip-path="url(#uc)"><g filter="url(#bl)"><rect x="-1.1" y="-1.1" width="2.2" height="2.2" fill="#121211"/><ellipse cx="-0.310" rx="0.437" ry="0.937" fill="#161615"/><rect x="-0.396" y="-1.1" width="1.496" height="2.2" fill="#161615"/><ellipse cx="-0.206" rx="0.454" ry="0.972" fill="#1d1d1b"/><rect x="-0.264" y="-1.1" width="1.364" height="2.2" fill="#1d1d1b"/><ellipse cx="-0.103" rx="0.464" ry="0.993" fill="#232322"/><rect x="-0.132" y="-1.1" width="1.232" height="2.2" fill="#232322"/><ellipse cx="0.000" rx="0.467" ry="1.000" fill="#2d2d2b"/><rect x="0.000" y="-1.1" width="1.100" height="2.2" fill="#2d2d2b"/><ellipse cx="0.012" rx="0.467" ry="1.000" fill="#3a3a37"/><rect x="0.016" y="-1.1" width="1.084" height="2.2" fill="#3a3a37"/><ellipse cx="0.040" rx="0.466" ry="0.999" fill="#464643"/><rect x="0.051" y="-1.1" width="1.049" height="2.2" fill="#464643"/><ellipse cx="0.081" rx="0.465" ry="0.996" fill="#52524f"/><rect x="0.104" y="-1.1" width="0.996" height="2.2" fill="#52524f"/><ellipse cx="0.133" rx="0.461" ry="0.989" fill="#5f5f5a"/><rect x="0.170" y="-1.1" width="0.930" height="2.2" fill="#5f5f5a"/><ellipse cx="0.195" rx="0.455" ry="0.975" fill="#6b6b66"/><rect x="0.250" y="-1.1" width="0.850" height="2.2" fill="#6b6b66"/><ellipse cx="0.268" rx="0.445" ry="0.953" fill="#777772"/><rect x="0.342" y="-1.1" width="0.758" height="2.2" fill="#777772"/><ellipse cx="0.349" rx="0.429" ry="0.919" fill="#84847e"/><rect x="0.446" y="-1.1" width="0.654" height="2.2" fill="#84847e"/><ellipse cx="0.440" rx="0.405" ry="0.868" fill="#90908a"/><rect x="0.562" y="-1.1" width="0.538" height="2.2" fill="#90908a"/><ellipse cx="0.539" rx="0.370" ry="0.793" fill="#9c9c95"/><rect x="0.689" y="-1.1" width="0.411" height="2.2" fill="#9c9c95"/><ellipse cx="0.646" rx="0.319" ry="0.683" fill="#a9a9a1"/><rect x="0.826" y="-1.1" width="0.274" height="2.2" fill="#a9a9a1"/><ellipse cx="0.761" rx="0.238" ry="0.509" fill="#b5b5ad"/><rect x="0.973" y="-1.1" width="0.127" height="2.2" fill="#b5b5ad"/></g><ellipse cx="0.515" cy="0.030" rx="0.639" ry="0.75" fill="url(#sp)"/><circle r="1" fill="none" stroke="#1a1a1a" stroke-opacity="0.35" stroke-width="1.2" vector-effect="non-scaling-stroke"/></g>
<g transform="matrix(11.442 -14.845 15.175 9.193 886.6 268)" clip-path="url(#uc)"><g filter="url(#bl)"><rect x="-1.1" y="-1.1" width="2.2" height="2.2" fill="#121211"/><ellipse cx="-0.328" rx="0.330" ry="0.937" fill="#141413"/><rect x="-0.374" y="-1.1" width="1.474" height="2.2" fill="#141413"/><ellipse cx="-0.262" rx="0.338" ry="0.960" fill="#181817"/><rect x="-0.299" y="-1.1" width="1.399" height="2.2" fill="#181817"/><ellipse cx="-0.197" rx="0.345" ry="0.978" fill="#1c1c1b"/><rect x="-0.224" y="-1.1" width="1.324" height="2.2" fill="#1c1c1b"/><ellipse cx="-0.131" rx="0.349" ry="0.990" fill="#20201f"/><rect x="-0.150" y="-1.1" width="1.250" height="2.2" fill="#20201f"/><ellipse cx="-0.066" rx="0.352" ry="0.998" fill="#242423"/><rect x="-0.075" y="-1.1" width="1.175" height="2.2" fill="#242423"/><ellipse cx="0.000" rx="0.353" ry="1.000" fill="#2d2d2b"/><rect x="0.000" y="-1.1" width="1.100" height="2.2" fill="#2d2d2b"/><ellipse cx="0.013" rx="0.353" ry="1.000" fill="#3a3a37"/><rect x="0.015" y="-1.1" width="1.085" height="2.2" fill="#3a3a37"/><ellipse cx="0.043" rx="0.352" ry="0.999" fill="#464643"/><rect x="0.049" y="-1.1" width="1.051" height="2.2" fill="#464643"/><ellipse cx="0.086" rx="0.351" ry="0.996" fill="#52524f"/><rect x="0.098" y="-1.1" width="1.002" height="2.2" fill="#52524f"/><ellipse cx="0.141" rx="0.349" ry="0.989" fill="#5f5f5a"/><rect x="0.161" y="-1.1" width="0.939" height="2.2" fill="#5f5f5a"/><ellipse cx="0.207" rx="0.344" ry="0.975" fill="#6b6b66"/><rect x="0.236" y="-1.1" width="0.864" height="2.2" fill="#6b6b66"/><ellipse cx="0.283" rx="0.336" ry="0.953" fill="#777772"/><rect x="0.323" y="-1.1" width="0.777" height="2.2" fill="#777772"/><ellipse cx="0.369" rx="0.324" ry="0.919" fill="#84847e"/><rect x="0.422" y="-1.1" width="0.678" height="2.2" fill="#84847e"/><ellipse cx="0.465" rx="0.306" ry="0.868" fill="#90908a"/><rect x="0.531" y="-1.1" width="0.569" height="2.2" fill="#90908a"/><ellipse cx="0.570" rx="0.280" ry="0.793" fill="#9c9c95"/><rect x="0.651" y="-1.1" width="0.449" height="2.2" fill="#9c9c95"/><ellipse cx="0.683" rx="0.241" ry="0.683" fill="#a9a9a1"/><rect x="0.780" y="-1.1" width="0.320" height="2.2" fill="#a9a9a1"/><ellipse cx="0.805" rx="0.180" ry="0.509" fill="#b5b5ad"/><rect x="0.920" y="-1.1" width="0.180" height="2.2" fill="#b5b5ad"/></g><ellipse cx="0.561" cy="0.033" rx="0.616" ry="0.75" fill="url(#sp)"/><circle r="1" fill="none" stroke="#1a1a1a" stroke-opacity="0.35" stroke-width="1.2" vector-effect="non-scaling-stroke"/></g>
<g transform="matrix(10.829 -12.005 13.063 8.866 927 325.4)" clip-path="url(#uc)"><g filter="url(#bl)"><rect x="-1.1" y="-1.1" width="2.2" height="2.2" fill="#121211"/><ellipse cx="-0.323" rx="0.362" ry="0.937" fill="#141413"/><rect x="-0.379" y="-1.1" width="1.479" height="2.2" fill="#141413"/><ellipse cx="-0.258" rx="0.371" ry="0.960" fill="#181817"/><rect x="-0.304" y="-1.1" width="1.404" height="2.2" fill="#181817"/><ellipse cx="-0.194" rx="0.378" ry="0.978" fill="#1c1c1b"/><rect x="-0.228" y="-1.1" width="1.328" height="2.2" fill="#1c1c1b"/><ellipse cx="-0.129" rx="0.382" ry="0.990" fill="#20201f"/><rect x="-0.152" y="-1.1" width="1.252" height="2.2" fill="#20201f"/><ellipse cx="-0.065" rx="0.385" ry="0.998" fill="#242423"/><rect x="-0.076" y="-1.1" width="1.176" height="2.2" fill="#242423"/><ellipse cx="0.000" rx="0.386" ry="1.000" fill="#2d2d2b"/><rect x="0.000" y="-1.1" width="1.100" height="2.2" fill="#2d2d2b"/><ellipse cx="0.013" rx="0.386" ry="1.000" fill="#3a3a37"/><rect x="0.015" y="-1.1" width="1.085" height="2.2" fill="#3a3a37"/><ellipse cx="0.042" rx="0.386" ry="0.999" fill="#464643"/><rect x="0.049" y="-1.1" width="1.051" height="2.2" fill="#464643"/><ellipse cx="0.085" rx="0.385" ry="0.996" fill="#52524f"/><rect x="0.099" y="-1.1" width="1.001" height="2.2" fill="#52524f"/><ellipse cx="0.139" rx="0.382" ry="0.989" fill="#5f5f5a"/><rect x="0.163" y="-1.1" width="0.937" height="2.2" fill="#5f5f5a"/><ellipse cx="0.204" rx="0.377" ry="0.975" fill="#6b6b66"/><rect x="0.240" y="-1.1" width="0.860" height="2.2" fill="#6b6b66"/><ellipse cx="0.279" rx="0.368" ry="0.953" fill="#777772"/><rect x="0.328" y="-1.1" width="0.772" height="2.2" fill="#777772"/><ellipse cx="0.364" rx="0.355" ry="0.919" fill="#84847e"/><rect x="0.428" y="-1.1" width="0.672" height="2.2" fill="#84847e"/><ellipse cx="0.458" rx="0.335" ry="0.868" fill="#90908a"/><rect x="0.539" y="-1.1" width="0.561" height="2.2" fill="#90908a"/><ellipse cx="0.562" rx="0.306" ry="0.793" fill="#9c9c95"/><rect x="0.660" y="-1.1" width="0.440" height="2.2" fill="#9c9c95"/><ellipse cx="0.674" rx="0.264" ry="0.683" fill="#a9a9a1"/><rect x="0.792" y="-1.1" width="0.308" height="2.2" fill="#a9a9a1"/><ellipse cx="0.794" rx="0.197" ry="0.509" fill="#b5b5ad"/><rect x="0.933" y="-1.1" width="0.167" height="2.2" fill="#b5b5ad"/></g><ellipse cx="0.549" cy="0.032" rx="0.622" ry="0.75" fill="url(#sp)"/><circle r="1" fill="none" stroke="#1a1a1a" stroke-opacity="0.35" stroke-width="1.2" vector-effect="non-scaling-stroke"/></g>
<g transform="matrix(13.774 -21.818 20.342 10.468 856.6 160.4)" clip-path="url(#uc)"><g filter="url(#bl)"><rect x="-1.1" y="-1.1" width="2.2" height="2.2" fill="#121211"/><ellipse cx="-0.339" rx="0.236" ry="0.937" fill="#141413"/><rect x="-0.362" y="-1.1" width="1.462" height="2.2" fill="#141413"/><ellipse cx="-0.271" rx="0.242" ry="0.960" fill="#181817"/><rect x="-0.289" y="-1.1" width="1.389" height="2.2" fill="#181817"/><ellipse cx="-0.203" rx="0.247" ry="0.978" fill="#1c1c1b"/><rect x="-0.217" y="-1.1" width="1.317" height="2.2" fill="#1c1c1b"/><ellipse cx="-0.135" rx="0.250" ry="0.990" fill="#20201f"/><rect x="-0.145" y="-1.1" width="1.245" height="2.2" fill="#20201f"/><ellipse cx="-0.068" rx="0.252" ry="0.998" fill="#242423"/><rect x="-0.072" y="-1.1" width="1.172" height="2.2" fill="#242423"/><ellipse cx="0.000" rx="0.252" ry="1.000" fill="#2d2d2b"/><rect x="0.000" y="-1.1" width="1.100" height="2.2" fill="#2d2d2b"/><ellipse cx="0.013" rx="0.252" ry="1.000" fill="#3a3a37"/><rect x="0.014" y="-1.1" width="1.086" height="2.2" fill="#3a3a37"/><ellipse cx="0.044" rx="0.252" ry="0.999" fill="#464643"/><rect x="0.047" y="-1.1" width="1.053" height="2.2" fill="#464643"/><ellipse cx="0.089" rx="0.251" ry="0.996" fill="#52524f"/><rect x="0.095" y="-1.1" width="1.005" height="2.2" fill="#52524f"/><ellipse cx="0.146" rx="0.250" ry="0.989" fill="#5f5f5a"/><rect x="0.155" y="-1.1" width="0.945" height="2.2" fill="#5f5f5a"/><ellipse cx="0.214" rx="0.246" ry="0.975" fill="#6b6b66"/><rect x="0.228" y="-1.1" width="0.872" height="2.2" fill="#6b6b66"/><ellipse cx="0.293" rx="0.241" ry="0.953" fill="#777772"/><rect x="0.313" y="-1.1" width="0.787" height="2.2" fill="#777772"/><ellipse cx="0.382" rx="0.232" ry="0.919" fill="#84847e"/><rect x="0.408" y="-1.1" width="0.692" height="2.2" fill="#84847e"/><ellipse cx="0.481" rx="0.219" ry="0.868" fill="#90908a"/><rect x="0.514" y="-1.1" width="0.586" height="2.2" fill="#90908a"/><ellipse cx="0.589" rx="0.200" ry="0.793" fill="#9c9c95"/><rect x="0.629" y="-1.1" width="0.471" height="2.2" fill="#9c9c95"/><ellipse cx="0.707" rx="0.172" ry="0.683" fill="#a9a9a1"/><rect x="0.755" y="-1.1" width="0.345" height="2.2" fill="#a9a9a1"/><ellipse cx="0.833" rx="0.129" ry="0.509" fill="#b5b5ad"/><rect x="0.889" y="-1.1" width="0.211" height="2.2" fill="#b5b5ad"/></g><ellipse cx="0.600" cy="0.034" rx="0.594" ry="0.75" fill="url(#sp)"/><circle r="1" fill="none" stroke="#1a1a1a" stroke-opacity="0.35" stroke-width="1.2" vector-effect="non-scaling-stroke"/></g>
<g transform="matrix(9.929 -9.338 10.934 8.333 968.4 384.2)" clip-path="url(#uc)"><g filter="url(#bl)"><rect x="-1.1" y="-1.1" width="2.2" height="2.2" fill="#121211"/><ellipse cx="-0.318" rx="0.389" ry="0.937" fill="#141413"/><rect x="-0.385" y="-1.1" width="1.485" height="2.2" fill="#141413"/><ellipse cx="-0.255" rx="0.399" ry="0.960" fill="#181817"/><rect x="-0.308" y="-1.1" width="1.408" height="2.2" fill="#181817"/><ellipse cx="-0.191" rx="0.406" ry="0.978" fill="#1c1c1b"/><rect x="-0.231" y="-1.1" width="1.331" height="2.2" fill="#1c1c1b"/><ellipse cx="-0.127" rx="0.411" ry="0.990" fill="#20201f"/><rect x="-0.154" y="-1.1" width="1.254" height="2.2" fill="#20201f"/><ellipse cx="-0.064" rx="0.414" ry="0.998" fill="#242423"/><rect x="-0.077" y="-1.1" width="1.177" height="2.2" fill="#242423"/><ellipse cx="0.000" rx="0.415" ry="1.000" fill="#2d2d2b"/><rect x="0.000" y="-1.1" width="1.100" height="2.2" fill="#2d2d2b"/><ellipse cx="0.013" rx="0.415" ry="1.000" fill="#3a3a37"/><rect x="0.015" y="-1.1" width="1.085" height="2.2" fill="#3a3a37"/><ellipse cx="0.041" rx="0.415" ry="0.999" fill="#464643"/><rect x="0.050" y="-1.1" width="1.050" height="2.2" fill="#464643"/><ellipse cx="0.083" rx="0.413" ry="0.996" fill="#52524f"/><rect x="0.101" y="-1.1" width="0.999" height="2.2" fill="#52524f"/><ellipse cx="0.137" rx="0.411" ry="0.989" fill="#5f5f5a"/><rect x="0.165" y="-1.1" width="0.935" height="2.2" fill="#5f5f5a"/><ellipse cx="0.201" rx="0.405" ry="0.975" fill="#6b6b66"/><rect x="0.243" y="-1.1" width="0.857" height="2.2" fill="#6b6b66"/><ellipse cx="0.275" rx="0.396" ry="0.953" fill="#777772"/><rect x="0.333" y="-1.1" width="0.767" height="2.2" fill="#777772"/><ellipse cx="0.359" rx="0.382" ry="0.919" fill="#84847e"/><rect x="0.434" y="-1.1" width="0.666" height="2.2" fill="#84847e"/><ellipse cx="0.452" rx="0.360" ry="0.868" fill="#90908a"/><rect x="0.546" y="-1.1" width="0.554" height="2.2" fill="#90908a"/><ellipse cx="0.554" rx="0.329" ry="0.793" fill="#9c9c95"/><rect x="0.669" y="-1.1" width="0.431" height="2.2" fill="#9c9c95"/><ellipse cx="0.664" rx="0.284" ry="0.683" fill="#a9a9a1"/><rect x="0.803" y="-1.1" width="0.297" height="2.2" fill="#a9a9a1"/><ellipse cx="0.783" rx="0.211" ry="0.509" fill="#b5b5ad"/><rect x="0.946" y="-1.1" width="0.154" height="2.2" fill="#b5b5ad"/></g><ellipse cx="0.538" cy="0.031" rx="0.628" ry="0.75" fill="url(#sp)"/><circle r="1" fill="none" stroke="#1a1a1a" stroke-opacity="0.35" stroke-width="1.2" vector-effect="non-scaling-stroke"/></g>
<g transform="matrix(13.551 -18.462 18.240 10.314 897.6 217.9)" clip-path="url(#uc)"><g filter="url(#bl)"><rect x="-1.1" y="-1.1" width="2.2" height="2.2" fill="#121211"/><ellipse cx="-0.335" rx="0.272" ry="0.937" fill="#141413"/><rect x="-0.366" y="-1.1" width="1.466" height="2.2" fill="#141413"/><ellipse cx="-0.268" rx="0.279" ry="0.960" fill="#181817"/><rect x="-0.293" y="-1.1" width="1.393" height="2.2" fill="#181817"/><ellipse cx="-0.201" rx="0.284" ry="0.978" fill="#1c1c1b"/><rect x="-0.219" y="-1.1" width="1.319" height="2.2" fill="#1c1c1b"/><ellipse cx="-0.134" rx="0.288" ry="0.990" fill="#20201f"/><rect x="-0.146" y="-1.1" width="1.246" height="2.2" fill="#20201f"/><ellipse cx="-0.067" rx="0.290" ry="0.998" fill="#242423"/><rect x="-0.073" y="-1.1" width="1.173" height="2.2" fill="#242423"/><ellipse cx="0.000" rx="0.291" ry="1.000" fill="#2d2d2b"/><rect x="0.000" y="-1.1" width="1.100" height="2.2" fill="#2d2d2b"/><ellipse cx="0.013" rx="0.291" ry="1.000" fill="#3a3a37"/><rect x="0.014" y="-1.1" width="1.086" height="2.2" fill="#3a3a37"/><ellipse cx="0.044" rx="0.291" ry="0.999" fill="#464643"/><rect x="0.048" y="-1.1" width="1.052" height="2.2" fill="#464643"/><ellipse cx="0.088" rx="0.290" ry="0.996" fill="#52524f"/><rect x="0.096" y="-1.1" width="1.004" height="2.2" fill="#52524f"/><ellipse cx="0.144" rx="0.288" ry="0.989" fill="#5f5f5a"/><rect x="0.157" y="-1.1" width="0.943" height="2.2" fill="#5f5f5a"/><ellipse cx="0.211" rx="0.284" ry="0.975" fill="#6b6b66"/><rect x="0.231" y="-1.1" width="0.869" height="2.2" fill="#6b6b66"/><ellipse cx="0.290" rx="0.277" ry="0.953" fill="#777772"/><rect x="0.316" y="-1.1" width="0.784" height="2.2" fill="#777772"/><ellipse cx="0.378" rx="0.267" ry="0.919" fill="#84847e"/><rect x="0.413" y="-1.1" width="0.687" height="2.2" fill="#84847e"/><ellipse cx="0.476" rx="0.252" ry="0.868" fill="#90908a"/><rect x="0.520" y="-1.1" width="0.580" height="2.2" fill="#90908a"/><ellipse cx="0.583" rx="0.231" ry="0.793" fill="#9c9c95"/><rect x="0.636" y="-1.1" width="0.464" height="2.2" fill="#9c9c95"/><ellipse cx="0.699" rx="0.199" ry="0.683" fill="#a9a9a1"/><rect x="0.763" y="-1.1" width="0.337" height="2.2" fill="#a9a9a1"/><ellipse cx="0.823" rx="0.148" ry="0.509" fill="#b5b5ad"/><rect x="0.900" y="-1.1" width="0.200" height="2.2" fill="#b5b5ad"/></g><ellipse cx="0.587" cy="0.034" rx="0.602" ry="0.75" fill="url(#sp)"/><circle r="1" fill="none" stroke="#1a1a1a" stroke-opacity="0.35" stroke-width="1.2" vector-effect="non-scaling-stroke"/></g>
<g transform="matrix(13.090 -15.273 16.108 10.114 939.7 276.8)" clip-path="url(#uc)"><g filter="url(#bl)"><rect x="-1.1" y="-1.1" width="2.2" height="2.2" fill="#121211"/><ellipse cx="-0.331" rx="0.306" ry="0.937" fill="#141413"/><rect x="-0.370" y="-1.1" width="1.470" height="2.2" fill="#141413"/><ellipse cx="-0.265" rx="0.314" ry="0.960" fill="#181817"/><rect x="-0.296" y="-1.1" width="1.396" height="2.2" fill="#181817"/><ellipse cx="-0.198" rx="0.320" ry="0.978" fill="#1c1c1b"/><rect x="-0.222" y="-1.1" width="1.322" height="2.2" fill="#1c1c1b"/><ellipse cx="-0.132" rx="0.324" ry="0.990" fill="#20201f"/><rect x="-0.148" y="-1.1" width="1.248" height="2.2" fill="#20201f"/><ellipse cx="-0.066" rx="0.326" ry="0.998" fill="#242423"/><rect x="-0.074" y="-1.1" width="1.174" height="2.2" fill="#242423"/><ellipse cx="0.000" rx="0.327" ry="1.000" fill="#2d2d2b"/><rect x="0.000" y="-1.1" width="1.100" height="2.2" fill="#2d2d2b"/><ellipse cx="0.013" rx="0.327" ry="1.000" fill="#3a3a37"/><rect x="0.015" y="-1.1" width="1.085" height="2.2" fill="#3a3a37"/><ellipse cx="0.043" rx="0.327" ry="0.999" fill="#464643"/><rect x="0.048" y="-1.1" width="1.052" height="2.2" fill="#464643"/><ellipse cx="0.087" rx="0.325" ry="0.996" fill="#52524f"/><rect x="0.097" y="-1.1" width="1.003" height="2.2" fill="#52524f"/><ellipse cx="0.142" rx="0.323" ry="0.989" fill="#5f5f5a"/><rect x="0.159" y="-1.1" width="0.941" height="2.2" fill="#5f5f5a"/><ellipse cx="0.209" rx="0.319" ry="0.975" fill="#6b6b66"/><rect x="0.234" y="-1.1" width="0.866" height="2.2" fill="#6b6b66"/><ellipse cx="0.286" rx="0.312" ry="0.953" fill="#777772"/><rect x="0.320" y="-1.1" width="0.780" height="2.2" fill="#777772"/><ellipse cx="0.373" rx="0.300" ry="0.919" fill="#84847e"/><rect x="0.418" y="-1.1" width="0.682" height="2.2" fill="#84847e"/><ellipse cx="0.470" rx="0.284" ry="0.868" fill="#90908a"/><rect x="0.526" y="-1.1" width="0.574" height="2.2" fill="#90908a"/><ellipse cx="0.576" rx="0.259" ry="0.793" fill="#9c9c95"/><rect x="0.644" y="-1.1" width="0.456" height="2.2" fill="#9c9c95"/><ellipse cx="0.690" rx="0.223" ry="0.683" fill="#a9a9a1"/><rect x="0.773" y="-1.1" width="0.327" height="2.2" fill="#a9a9a1"/><ellipse cx="0.813" rx="0.166" ry="0.509" fill="#b5b5ad"/><rect x="0.911" y="-1.1" width="0.189" height="2.2" fill="#b5b5ad"/></g><ellipse cx="0.574" cy="0.033" rx="0.609" ry="0.75" fill="url(#sp)"/><circle r="1" fill="none" stroke="#1a1a1a" stroke-opacity="0.35" stroke-width="1.2" vector-effect="non-scaling-stroke"/></g>
<g transform="matrix(12.353 -12.262 13.944 9.772 983 337.3)" clip-path="url(#uc)"><g filter="url(#bl)"><rect x="-1.1" y="-1.1" width="2.2" height="2.2" fill="#121211"/><ellipse cx="-0.327" rx="0.336" ry="0.937" fill="#141413"/><rect x="-0.375" y="-1.1" width="1.475" height="2.2" fill="#141413"/><ellipse cx="-0.261" rx="0.345" ry="0.960" fill="#181817"/><rect x="-0.300" y="-1.1" width="1.400" height="2.2" fill="#181817"/><ellipse cx="-0.196" rx="0.351" ry="0.978" fill="#1c1c1b"/><rect x="-0.225" y="-1.1" width="1.325" height="2.2" fill="#1c1c1b"/><ellipse cx="-0.131" rx="0.356" ry="0.990" fill="#20201f"/><rect x="-0.150" y="-1.1" width="1.250" height="2.2" fill="#20201f"/><ellipse cx="-0.065" rx="0.358" ry="0.998" fill="#242423"/><rect x="-0.075" y="-1.1" width="1.175" height="2.2" fill="#242423"/><ellipse cx="0.000" rx="0.359" ry="1.000" fill="#2d2d2b"/><rect x="0.000" y="-1.1" width="1.100" height="2.2" fill="#2d2d2b"/><ellipse cx="0.013" rx="0.359" ry="1.000" fill="#3a3a37"/><rect x="0.015" y="-1.1" width="1.085" height="2.2" fill="#3a3a37"/><ellipse cx="0.042" rx="0.359" ry="0.999" fill="#464643"/><rect x="0.049" y="-1.1" width="1.051" height="2.2" fill="#464643"/><ellipse cx="0.086" rx="0.358" ry="0.996" fill="#52524f"/><rect x="0.098" y="-1.1" width="1.002" height="2.2" fill="#52524f"/><ellipse cx="0.140" rx="0.355" ry="0.989" fill="#5f5f5a"/><rect x="0.161" y="-1.1" width="0.939" height="2.2" fill="#5f5f5a"/><ellipse cx="0.206" rx="0.350" ry="0.975" fill="#6b6b66"/><rect x="0.237" y="-1.1" width="0.863" height="2.2" fill="#6b6b66"/><ellipse cx="0.282" rx="0.342" ry="0.953" fill="#777772"/><rect x="0.324" y="-1.1" width="0.776" height="2.2" fill="#777772"/><ellipse cx="0.368" rx="0.330" ry="0.919" fill="#84847e"/><rect x="0.423" y="-1.1" width="0.677" height="2.2" fill="#84847e"/><ellipse cx="0.464" rx="0.312" ry="0.868" fill="#90908a"/><rect x="0.533" y="-1.1" width="0.567" height="2.2" fill="#90908a"/><ellipse cx="0.568" rx="0.285" ry="0.793" fill="#9c9c95"/><rect x="0.652" y="-1.1" width="0.448" height="2.2" fill="#9c9c95"/><ellipse cx="0.682" rx="0.245" ry="0.683" fill="#a9a9a1"/><rect x="0.782" y="-1.1" width="0.318" height="2.2" fill="#a9a9a1"/><ellipse cx="0.803" rx="0.183" ry="0.509" fill="#b5b5ad"/><rect x="0.922" y="-1.1" width="0.178" height="2.2" fill="#b5b5ad"/></g><ellipse cx="0.562" cy="0.032" rx="0.615" ry="0.75" fill="url(#sp)"/><circle r="1" fill="none" stroke="#1a1a1a" stroke-opacity="0.35" stroke-width="1.2" vector-effect="non-scaling-stroke"/></g>
<g transform="matrix(15.908 -22.742 21.573 11.417 909.5 163.7)" clip-path="url(#uc)"><g filter="url(#bl)"><rect x="-1.1" y="-1.1" width="2.2" height="2.2" fill="#121211"/><ellipse cx="-0.341" rx="0.212" ry="0.937" fill="#141413"/><rect x="-0.359" y="-1.1" width="1.459" height="2.2" fill="#141413"/><ellipse cx="-0.273" rx="0.217" ry="0.960" fill="#181817"/><rect x="-0.287" y="-1.1" width="1.387" height="2.2" fill="#181817"/><ellipse cx="-0.205" rx="0.221" ry="0.978" fill="#1c1c1b"/><rect x="-0.216" y="-1.1" width="1.316" height="2.2" fill="#1c1c1b"/><ellipse cx="-0.136" rx="0.224" ry="0.990" fill="#20201f"/><rect x="-0.144" y="-1.1" width="1.244" height="2.2" fill="#20201f"/><ellipse cx="-0.068" rx="0.226" ry="0.998" fill="#242423"/><rect x="-0.072" y="-1.1" width="1.172" height="2.2" fill="#242423"/><ellipse cx="0.000" rx="0.226" ry="1.000" fill="#2d2d2b"/><rect x="0.000" y="-1.1" width="1.100" height="2.2" fill="#2d2d2b"/><ellipse cx="0.013" rx="0.226" ry="1.000" fill="#3a3a37"/><rect x="0.014" y="-1.1" width="1.086" height="2.2" fill="#3a3a37"/><ellipse cx="0.044" rx="0.226" ry="0.999" fill="#464643"/><rect x="0.047" y="-1.1" width="1.053" height="2.2" fill="#464643"/><ellipse cx="0.089" rx="0.225" ry="0.996" fill="#52524f"/><rect x="0.094" y="-1.1" width="1.006" height="2.2" fill="#52524f"/><ellipse cx="0.147" rx="0.224" ry="0.989" fill="#5f5f5a"/><rect x="0.154" y="-1.1" width="0.946" height="2.2" fill="#5f5f5a"/><ellipse cx="0.215" rx="0.221" ry="0.975" fill="#6b6b66"/><rect x="0.227" y="-1.1" width="0.873" height="2.2" fill="#6b6b66"/><ellipse cx="0.295" rx="0.216" ry="0.953" fill="#777772"/><rect x="0.311" y="-1.1" width="0.789" height="2.2" fill="#777772"/><ellipse cx="0.385" rx="0.208" ry="0.919" fill="#84847e"/><rect x="0.405" y="-1.1" width="0.695" height="2.2" fill="#84847e"/><ellipse cx="0.484" rx="0.196" ry="0.868" fill="#90908a"/><rect x="0.510" y="-1.1" width="0.590" height="2.2" fill="#90908a"/><ellipse cx="0.593" rx="0.179" ry="0.793" fill="#9c9c95"/><rect x="0.625" y="-1.1" width="0.475" height="2.2" fill="#9c9c95"/><ellipse cx="0.711" rx="0.155" ry="0.683" fill="#a9a9a1"/><rect x="0.750" y="-1.1" width="0.350" height="2.2" fill="#a9a9a1"/><ellipse cx="0.838" rx="0.115" ry="0.509" fill="#b5b5ad"/><rect x="0.884" y="-1.1" width="0.216" height="2.2" fill="#b5b5ad"/></g><ellipse cx="0.612" cy="0.034" rx="0.587" ry="0.75" fill="url(#sp)"/><circle r="1" fill="none" stroke="#1a1a1a" stroke-opacity="0.35" stroke-width="1.2" vector-effect="non-scaling-stroke"/></g>
<g transform="matrix(15.605 -19.141 19.448 11.303 953.5 224.2)" clip-path="url(#uc)"><g filter="url(#bl)"><rect x="-1.1" y="-1.1" width="2.2" height="2.2" fill="#121211"/><ellipse cx="-0.338" rx="0.247" ry="0.937" fill="#141413"/><rect x="-0.363" y="-1.1" width="1.463" height="2.2" fill="#141413"/><ellipse cx="-0.270" rx="0.253" ry="0.960" fill="#181817"/><rect x="-0.290" y="-1.1" width="1.390" height="2.2" fill="#181817"/><ellipse cx="-0.203" rx="0.258" ry="0.978" fill="#1c1c1b"/><rect x="-0.218" y="-1.1" width="1.318" height="2.2" fill="#1c1c1b"/><ellipse cx="-0.135" rx="0.261" ry="0.990" fill="#20201f"/><rect x="-0.145" y="-1.1" width="1.245" height="2.2" fill="#20201f"/><ellipse cx="-0.068" rx="0.263" ry="0.998" fill="#242423"/><rect x="-0.073" y="-1.1" width="1.173" height="2.2" fill="#242423"/><ellipse cx="0.000" rx="0.264" ry="1.000" fill="#2d2d2b"/><rect x="0.000" y="-1.1" width="1.100" height="2.2" fill="#2d2d2b"/><ellipse cx="0.013" rx="0.264" ry="1.000" fill="#3a3a37"/><rect x="0.014" y="-1.1" width="1.086" height="2.2" fill="#3a3a37"/><ellipse cx="0.044" rx="0.263" ry="0.999" fill="#464643"/><rect x="0.047" y="-1.1" width="1.053" height="2.2" fill="#464643"/><ellipse cx="0.088" rx="0.263" ry="0.996" fill="#52524f"/><rect x="0.095" y="-1.1" width="1.005" height="2.2" fill="#52524f"/><ellipse cx="0.145" rx="0.261" ry="0.989" fill="#5f5f5a"/><rect x="0.156" y="-1.1" width="0.944" height="2.2" fill="#5f5f5a"/><ellipse cx="0.213" rx="0.257" ry="0.975" fill="#6b6b66"/><rect x="0.229" y="-1.1" width="0.871" height="2.2" fill="#6b6b66"/><ellipse cx="0.292" rx="0.251" ry="0.953" fill="#777772"/><rect x="0.314" y="-1.1" width="0.786" height="2.2" fill="#777772"/><ellipse cx="0.381" rx="0.242" ry="0.919" fill="#84847e"/><rect x="0.409" y="-1.1" width="0.691" height="2.2" fill="#84847e"/><ellipse cx="0.479" rx="0.229" ry="0.868" fill="#90908a"/><rect x="0.515" y="-1.1" width="0.585" height="2.2" fill="#90908a"/><ellipse cx="0.587" rx="0.209" ry="0.793" fill="#9c9c95"/><rect x="0.631" y="-1.1" width="0.469" height="2.2" fill="#9c9c95"/><ellipse cx="0.704" rx="0.180" ry="0.683" fill="#a9a9a1"/><rect x="0.757" y="-1.1" width="0.343" height="2.2" fill="#a9a9a1"/><ellipse cx="0.830" rx="0.134" ry="0.509" fill="#b5b5ad"/><rect x="0.892" y="-1.1" width="0.208" height="2.2" fill="#b5b5ad"/></g><ellipse cx="0.599" cy="0.034" rx="0.595" ry="0.75" fill="url(#sp)"/><circle r="1" fill="none" stroke="#1a1a1a" stroke-opacity="0.35" stroke-width="1.2" vector-effect="non-scaling-stroke"/></g>
<g transform="matrix(15.033 -15.732 17.280 11.123 998.7 286.5)" clip-path="url(#uc)"><g filter="url(#bl)"><rect x="-1.1" y="-1.1" width="2.2" height="2.2" fill="#121211"/><ellipse cx="-0.334" rx="0.280" ry="0.937" fill="#141413"/><rect x="-0.367" y="-1.1" width="1.467" height="2.2" fill="#141413"/><ellipse cx="-0.267" rx="0.287" ry="0.960" fill="#181817"/><rect x="-0.293" y="-1.1" width="1.393" height="2.2" fill="#181817"/><ellipse cx="-0.200" rx="0.292" ry="0.978" fill="#1c1c1b"/><rect x="-0.220" y="-1.1" width="1.320" height="2.2" fill="#1c1c1b"/><ellipse cx="-0.134" rx="0.296" ry="0.990" fill="#20201f"/><rect x="-0.147" y="-1.1" width="1.247" height="2.2" fill="#20201f"/><ellipse cx="-0.067" rx="0.298" ry="0.998" fill="#242423"/><rect x="-0.073" y="-1.1" width="1.173" height="2.2" fill="#242423"/><ellipse cx="0.000" rx="0.299" ry="1.000" fill="#2d2d2b"/><rect x="0.000" y="-1.1" width="1.100" height="2.2" fill="#2d2d2b"/><ellipse cx="0.013" rx="0.299" ry="1.000" fill="#3a3a37"/><rect x="0.014" y="-1.1" width="1.086" height="2.2" fill="#3a3a37"/><ellipse cx="0.043" rx="0.298" ry="0.999" fill="#464643"/><rect x="0.048" y="-1.1" width="1.052" height="2.2" fill="#464643"/><ellipse cx="0.087" rx="0.297" ry="0.996" fill="#52524f"/><rect x="0.096" y="-1.1" width="1.004" height="2.2" fill="#52524f"/><ellipse cx="0.144" rx="0.295" ry="0.989" fill="#5f5f5a"/><rect x="0.158" y="-1.1" width="0.942" height="2.2" fill="#5f5f5a"/><ellipse cx="0.211" rx="0.291" ry="0.975" fill="#6b6b66"/><rect x="0.232" y="-1.1" width="0.868" height="2.2" fill="#6b6b66"/><ellipse cx="0.289" rx="0.285" ry="0.953" fill="#777772"/><rect x="0.317" y="-1.1" width="0.783" height="2.2" fill="#777772"/><ellipse cx="0.377" rx="0.274" ry="0.919" fill="#84847e"/><rect x="0.414" y="-1.1" width="0.686" height="2.2" fill="#84847e"/><ellipse cx="0.474" rx="0.259" ry="0.868" fill="#90908a"/><rect x="0.521" y="-1.1" width="0.579" height="2.2" fill="#90908a"/><ellipse cx="0.581" rx="0.237" ry="0.793" fill="#9c9c95"/><rect x="0.638" y="-1.1" width="0.462" height="2.2" fill="#9c9c95"/><ellipse cx="0.697" rx="0.204" ry="0.683" fill="#a9a9a1"/><rect x="0.765" y="-1.1" width="0.335" height="2.2" fill="#a9a9a1"/><ellipse cx="0.821" rx="0.152" ry="0.509" fill="#b5b5ad"/><rect x="0.902" y="-1.1" width="0.198" height="2.2" fill="#b5b5ad"/></g><ellipse cx="0.587" cy="0.033" rx="0.602" ry="0.75" fill="url(#sp)"/><circle r="1" fill="none" stroke="#1a1a1a" stroke-opacity="0.35" stroke-width="1.2" vector-effect="non-scaling-stroke"/></g>
<g transform="matrix(18.447 -23.771 23.108 12.444 968.5 167.2)" clip-path="url(#uc)"><g filter="url(#bl)"><rect x="-1.1" y="-1.1" width="2.2" height="2.2" fill="#121211"/><ellipse cx="-0.343" rx="0.185" ry="0.937" fill="#141413"/><rect x="-0.357" y="-1.1" width="1.457" height="2.2" fill="#141413"/><ellipse cx="-0.274" rx="0.190" ry="0.960" fill="#181817"/><rect x="-0.286" y="-1.1" width="1.386" height="2.2" fill="#181817"/><ellipse cx="-0.206" rx="0.193" ry="0.978" fill="#1c1c1b"/><rect x="-0.214" y="-1.1" width="1.314" height="2.2" fill="#1c1c1b"/><ellipse cx="-0.137" rx="0.196" ry="0.990" fill="#20201f"/><rect x="-0.143" y="-1.1" width="1.243" height="2.2" fill="#20201f"/><ellipse cx="-0.069" rx="0.197" ry="0.998" fill="#242423"/><rect x="-0.071" y="-1.1" width="1.171" height="2.2" fill="#242423"/><ellipse cx="0.000" rx="0.198" ry="1.000" fill="#2d2d2b"/><rect x="0.000" y="-1.1" width="1.100" height="2.2" fill="#2d2d2b"/><ellipse cx="0.014" rx="0.198" ry="1.000" fill="#3a3a37"/><rect x="0.014" y="-1.1" width="1.086" height="2.2" fill="#3a3a37"/><ellipse cx="0.045" rx="0.198" ry="0.999" fill="#464643"/><rect x="0.046" y="-1.1" width="1.054" height="2.2" fill="#464643"/><ellipse cx="0.090" rx="0.197" ry="0.996" fill="#52524f"/><rect x="0.093" y="-1.1" width="1.007" height="2.2" fill="#52524f"/><ellipse cx="0.147" rx="0.195" ry="0.989" fill="#5f5f5a"/><rect x="0.153" y="-1.1" width="0.947" height="2.2" fill="#5f5f5a"/><ellipse cx="0.217" rx="0.193" ry="0.975" fill="#6b6b66"/><rect x="0.225" y="-1.1" width="0.875" height="2.2" fill="#6b6b66"/><ellipse cx="0.297" rx="0.188" ry="0.953" fill="#777772"/><rect x="0.309" y="-1.1" width="0.791" height="2.2" fill="#777772"/><ellipse cx="0.387" rx="0.182" ry="0.919" fill="#84847e"/><rect x="0.403" y="-1.1" width="0.697" height="2.2" fill="#84847e"/><ellipse cx="0.487" rx="0.172" ry="0.868" fill="#90908a"/><rect x="0.507" y="-1.1" width="0.593" height="2.2" fill="#90908a"/><ellipse cx="0.597" rx="0.157" ry="0.793" fill="#9c9c95"/><rect x="0.621" y="-1.1" width="0.479" height="2.2" fill="#9c9c95"/><ellipse cx="0.716" rx="0.135" ry="0.683" fill="#a9a9a1"/><rect x="0.745" y="-1.1" width="0.355" height="2.2" fill="#a9a9a1"/><ellipse cx="0.844" rx="0.101" ry="0.509" fill="#b5b5ad"/><rect x="0.878" y="-1.1" width="0.222" height="2.2" fill="#b5b5ad"/></g><ellipse cx="0.625" cy="0.035" rx="0.579" ry="0.75" fill="url(#sp)"/><circle r="1" fill="none" stroke="#1a1a1a" stroke-opacity="0.35" stroke-width="1.2" vector-effect="non-scaling-stroke"/></g>
<g transform="matrix(18.049 -19.891 20.971 12.384 1015.8 231.3)" clip-path="url(#uc)"><g filter="url(#bl)"><rect x="-1.1" y="-1.1" width="2.2" height="2.2" fill="#121211"/><ellipse cx="-0.340" rx="0.220" ry="0.937" fill="#141413"/><rect x="-0.360" y="-1.1" width="1.460" height="2.2" fill="#141413"/><ellipse cx="-0.272" rx="0.225" ry="0.960" fill="#181817"/><rect x="-0.288" y="-1.1" width="1.388" height="2.2" fill="#181817"/><ellipse cx="-0.204" rx="0.229" ry="0.978" fill="#1c1c1b"/><rect x="-0.216" y="-1.1" width="1.316" height="2.2" fill="#1c1c1b"/><ellipse cx="-0.136" rx="0.232" ry="0.990" fill="#20201f"/><rect x="-0.144" y="-1.1" width="1.244" height="2.2" fill="#20201f"/><ellipse cx="-0.068" rx="0.234" ry="0.998" fill="#242423"/><rect x="-0.072" y="-1.1" width="1.172" height="2.2" fill="#242423"/><ellipse cx="0.000" rx="0.234" ry="1.000" fill="#2d2d2b"/><rect x="0.000" y="-1.1" width="1.100" height="2.2" fill="#2d2d2b"/><ellipse cx="0.013" rx="0.234" ry="1.000" fill="#3a3a37"/><rect x="0.014" y="-1.1" width="1.086" height="2.2" fill="#3a3a37"/><ellipse cx="0.044" rx="0.234" ry="0.999" fill="#464643"/><rect x="0.047" y="-1.1" width="1.053" height="2.2" fill="#464643"/><ellipse cx="0.089" rx="0.233" ry="0.996" fill="#52524f"/><rect x="0.094" y="-1.1" width="1.006" height="2.2" fill="#52524f"/><ellipse cx="0.146" rx="0.232" ry="0.989" fill="#5f5f5a"/><rect x="0.155" y="-1.1" width="0.945" height="2.2" fill="#5f5f5a"/><ellipse cx="0.215" rx="0.229" ry="0.975" fill="#6b6b66"/><rect x="0.227" y="-1.1" width="0.873" height="2.2" fill="#6b6b66"/><ellipse cx="0.294" rx="0.223" ry="0.953" fill="#777772"/><rect x="0.311" y="-1.1" width="0.789" height="2.2" fill="#777772"/><ellipse cx="0.384" rx="0.215" ry="0.919" fill="#84847e"/><rect x="0.406" y="-1.1" width="0.694" height="2.2" fill="#84847e"/><ellipse cx="0.483" rx="0.203" ry="0.868" fill="#90908a"/><rect x="0.511" y="-1.1" width="0.589" height="2.2" fill="#90908a"/><ellipse cx="0.592" rx="0.186" ry="0.793" fill="#9c9c95"/><rect x="0.626" y="-1.1" width="0.474" height="2.2" fill="#9c9c95"/><ellipse cx="0.710" rx="0.160" ry="0.683" fill="#a9a9a1"/><rect x="0.751" y="-1.1" width="0.349" height="2.2" fill="#a9a9a1"/><ellipse cx="0.837" rx="0.119" ry="0.509" fill="#b5b5ad"/><rect x="0.885" y="-1.1" width="0.215" height="2.2" fill="#b5b5ad"/></g><ellipse cx="0.613" cy="0.034" rx="0.587" ry="0.75" fill="url(#sp)"/><circle r="1" fill="none" stroke="#1a1a1a" stroke-opacity="0.35" stroke-width="1.2" vector-effect="non-scaling-stroke"/></g>
<g transform="matrix(21.500 -24.926 25.050 13.559 1034.5 171.2)" clip-path="url(#uc)"><g filter="url(#bl)"><rect x="-1.1" y="-1.1" width="2.2" height="2.2" fill="#121211"/><ellipse cx="-0.345" rx="0.157" ry="0.937" fill="#141413"/><rect x="-0.355" y="-1.1" width="1.455" height="2.2" fill="#141413"/><ellipse cx="-0.276" rx="0.161" ry="0.960" fill="#181817"/><rect x="-0.284" y="-1.1" width="1.384" height="2.2" fill="#181817"/><ellipse cx="-0.207" rx="0.164" ry="0.978" fill="#1c1c1b"/><rect x="-0.213" y="-1.1" width="1.313" height="2.2" fill="#1c1c1b"/><ellipse cx="-0.138" rx="0.166" ry="0.990" fill="#20201f"/><rect x="-0.142" y="-1.1" width="1.242" height="2.2" fill="#20201f"/><ellipse cx="-0.069" rx="0.167" ry="0.998" fill="#242423"/><rect x="-0.071" y="-1.1" width="1.171" height="2.2" fill="#242423"/><ellipse cx="0.000" rx="0.167" ry="1.000" fill="#2d2d2b"/><rect x="0.000" y="-1.1" width="1.100" height="2.2" fill="#2d2d2b"/><ellipse cx="0.014" rx="0.167" ry="1.000" fill="#3a3a37"/><rect x="0.014" y="-1.1" width="1.086" height="2.2" fill="#3a3a37"/><ellipse cx="0.045" rx="0.167" ry="0.999" fill="#464643"/><rect x="0.046" y="-1.1" width="1.054" height="2.2" fill="#464643"/><ellipse cx="0.090" rx="0.167" ry="0.996" fill="#52524f"/><rect x="0.093" y="-1.1" width="1.007" height="2.2" fill="#52524f"/><ellipse cx="0.148" rx="0.165" ry="0.989" fill="#5f5f5a"/><rect x="0.153" y="-1.1" width="0.947" height="2.2" fill="#5f5f5a"/><ellipse cx="0.218" rx="0.163" ry="0.975" fill="#6b6b66"/><rect x="0.224" y="-1.1" width="0.876" height="2.2" fill="#6b6b66"/><ellipse cx="0.298" rx="0.159" ry="0.953" fill="#777772"/><rect x="0.307" y="-1.1" width="0.793" height="2.2" fill="#777772"/><ellipse cx="0.389" rx="0.154" ry="0.919" fill="#84847e"/><rect x="0.400" y="-1.1" width="0.700" height="2.2" fill="#84847e"/><ellipse cx="0.490" rx="0.145" ry="0.868" fill="#90908a"/><rect x="0.504" y="-1.1" width="0.596" height="2.2" fill="#90908a"/><ellipse cx="0.600" rx="0.133" ry="0.793" fill="#9c9c95"/><rect x="0.618" y="-1.1" width="0.482" height="2.2" fill="#9c9c95"/><ellipse cx="0.720" rx="0.114" ry="0.683" fill="#a9a9a1"/><rect x="0.741" y="-1.1" width="0.359" height="2.2" fill="#a9a9a1"/><ellipse cx="0.849" rx="0.085" ry="0.509" fill="#b5b5ad"/><rect x="0.873" y="-1.1" width="0.227" height="2.2" fill="#b5b5ad"/></g><ellipse cx="0.638" cy="0.035" rx="0.571" ry="0.75" fill="url(#sp)"/><circle r="1" fill="none" stroke="#1a1a1a" stroke-opacity="0.35" stroke-width="1.2" vector-effect="non-scaling-stroke"/></g>
</svg>

<!-- wires -->
<svg class="abs" style="left:0;top:0" width="1200" height="750" viewBox="0 0 1200 750" fill="none">
<path d="M200 391.500C220 391.500 222 380.300 242 380.300" stroke="#3389e0" stroke-width="3"/>
<path d="M200 391.500C220 391.500 222 407.700 242 407.700" stroke="#3389e0" stroke-width="3"/>
<path d="M390 351.300L453 351.300" stroke="#3389e0" stroke-width="3"/>
<circle cx="200.500" cy="391.500" r="3.300" fill="#3389e0"/><circle cx="241" cy="380.300" r="3.300" fill="#3389e0"/><circle cx="241" cy="407.700" r="3.300" fill="#3389e0"/>
<circle cx="390.500" cy="351.300" r="3.300" fill="#3389e0"/><circle cx="452.500" cy="351.300" r="3.300" fill="#3389e0"/>
<path d="M374 448V489" stroke="#1387b3" stroke-width="2.4"/>
</svg>
<div class="abs" style="left:365px;top:498px;width:18px;text-align:center;font-size:18.5px;line-height:22px;color:#1387b3;-webkit-text-stroke:0.3px #1387b3">1</div>

<!-- big code block -->
<div class="node" style="left:42px;top:92px;width:504px;height:186px">
 <div class="hd" style="height:28px;line-height:28px">Code Block</div>
 <div class="code" style="left:0;top:28px;width:502px;height:131px;line-height:18.65px;padding:2px 0 0 4px"><span class="kw">def</span> <span class="fn">sphereByZ</span>(inputPt)
{
<span class="cm">//get Z Value, use it to drive radius of sphere</span>
sphereRadius=inputPt.<span class="fn">Z</span>/<span class="nm">20</span>;
sphere=<span class="cl">Sphere</span>.<span class="fn">ByCenterPointRadius</span>(inputPt,sphereRadius);
<span class="kw">return</span> = sphere;
};</div>
 <div class="cb" style="left:485px;top:168px"></div>
</div>

<!-- small code block -->
<div class="node" style="left:55px;top:353px;width:145px;height:84px">
 <div class="hd" style="height:28px;line-height:29px">Code Block</div>
 <div class="code" style="left:0;top:28px;width:117px;height:19px;line-height:19px;padding-left:4px"><span class="nm">0</span>..<span class="nm">100</span>..#<span class="nm">10</span>;</div>
 <div class="port" style="left:118px;top:28px;width:25px;height:19px;line-height:18px;text-align:center;font-size:12px">&gt;</div>
 <div class="cb" style="left:127px;top:66px"></div>
</div>

<!-- Point.ByCoordinates -->
<div class="node" style="left:240px;top:308px;width:150px;height:140px;border:2px solid #3389e0">
 <div class="hd" style="height:28px;line-height:28px;font-size:13.5px">Point.ByCoordinates</div>
 <div class="port" style="left:0;top:29px;width:27px;height:26px;line-height:25px;padding-left:6px">x</div>
 <div class="port" style="left:0;top:56px;width:27px;height:26px;line-height:27px;padding-left:6px">y</div>
 <div class="port" style="left:0;top:83px;width:27px;height:26px;line-height:28px;padding-left:6px">z</div>
 <div class="port" style="left:100px;top:29px;width:46px;height:26px;line-height:25px;text-align:center">Point</div>
 <div class="cb" style="left:102px;top:120px"></div>
 <div class="abs" style="left:118px;top:113px;width:30px;height:25px;border:2px solid #1387b3;font-size:12.5px;line-height:19px;text-align:center;color:#555;letter-spacing:-0.6px">xxx</div>
</div>

<!-- sphereByZ code block -->
<div class="node" style="left:452px;top:313px;width:189px;height:83px">
 <div class="hd" style="height:28px;line-height:27px">Code Block</div>
 <div class="port" style="left:0;top:28px;width:26px;height:19px;line-height:19px;text-align:center;font-size:13px">Pt</div>
 <div class="code" style="left:28px;top:28px;width:131px;height:19px;line-height:19px;padding-left:3px"><span class="fn">sphereByZ</span>(Pt);</div>
 <div class="port" style="left:161px;top:28px;width:26px;height:19px;line-height:18px;text-align:center;font-size:12px">&gt;</div>
 <div class="cb" style="left:171px;top:65px"></div>
</div>
<div id="title" class="abs"><svg class="abs" style="left:1px;top:1px" width="10" height="11" viewBox="0 0 10 11"><path d="M0.5 1.5L4 0.5V10L0.5 9Z" fill="#d9372b"/><path d="M4 0.5L8.5 2V6L4 5Z" fill="#3a78c9"/><path d="M4 5L8.5 6V9.5L4 10Z" fill="#4aa54a"/></svg><span class="t">Dynamo</span>
<svg class="abs" style="left:1133px;top:0" width="65" height="11" viewBox="0 0 65 11"><rect x="0.5" y="-3" width="64" height="13.5" rx="3" fill="#f4f4f4" stroke="#9a9a9a"/><rect x="35" y="0" width="29.5" height="10" fill="#d9482f"/><path d="M35 0H64V4H35Z" fill="#e8836d"/><line x1="18.5" y1="0" x2="18.5" y2="10" stroke="#b5b5b5"/><rect x="6" y="5" width="7" height="3" fill="#fff" stroke="#666" stroke-width="0.8"/><rect x="23" y="2" width="6" height="6" fill="#fff" stroke="#666" stroke-width="0.8"/><path d="M47 2.5L53 8M53 2.5L47 8" stroke="#fff" stroke-width="1.8"/></svg></div>
<div id="menu" class="abs"><span style="left:10px">File</span><span style="left:41px">Edit</span><span style="left:74px">View</span><span style="left:109px">Packages</span><span style="left:161px">Settings</span><span style="left:208px">Help</span></div>
<div id="tool" class="abs"></div>
<div id="tabs" class="abs"></div>
<div id="tab" class="abs"><span class="t">7-4_Exercise.dyn*</span></div>
<div id="lib" class="abs"></div>
<div id="status" class="abs"></div>
<div id="auto" class="abs"><span class="t">Automatic</span></div>

<svg class="abs" style="left:0;top:0" width="1200" height="750" viewBox="0 0 1200 750" fill="none">
<!-- toolbar icons -->
<g fill="#8a8a8a">
<path d="M10.5 35h5l3 3v7.5h-8z"/>
<path d="M35 40h10v5.5H35zM37 37h6v2.5h-6zM38.5 34.5h5v2h-5z"/>
<path d="M60.5 34.5h9v11h-9zM62 36v3h6v-3zM62 41v3h6v-3z" fill-rule="evenodd"/>
</g>
<path d="M87 38.5c3-1.5 6-.5 7.5 4" stroke="#8a8a8a" stroke-width="1.6"/><path d="M85.5 39.5l3.5-3.5.5 4z" fill="#8a8a8a"/>
<path d="M121 38.5c-3-1.500-6-.5-7.500 3" stroke="#4e4e4e" stroke-width="1.4"/><path d="M122 39l-3.500-3-.5 3.500z" fill="#4e4e4e"/>
<!-- camera -->
<path d="M1176 37h3l1-1.500h4l1 1.500h3.500v7.500H1176z" fill="#8a8a8a"/><circle cx="1182.200" cy="40.800" r="2" fill="#353535"/>
<!-- tab close & hamburger -->
<path d="M117 52.500l5 5M122 52.500l-5 5" stroke="#8c8c8c" stroke-width="1"/>
<path d="M1191 54h7M1191 56.500h7M1191 59h7" stroke="#8c8c8c" stroke-width="1"/>
<!-- library icon -->
<path d="M3.700 84h1.800M3.700 86.500h1.800" stroke="#c4c4c4" stroke-width="1"/><path d="M6.200 82.600v5.300l3.200-2.650z" fill="#c4c4c4"/><text transform="translate(8.700 119.500) rotate(-90)" font-family="Liberation Sans, sans-serif" font-size="8" fill="#e2e2e2">Library</text>
<!-- zoom controls -->
<rect x="1180.500" y="67.500" width="15" height="45" rx="2" fill="#fff" stroke="#e6e6e6"/>
<rect x="1180.500" y="117" width="15" height="16" rx="2" fill="#fff" stroke="#e6e6e6"/>
<g stroke="#555" stroke-width="1.100">
<path d="M1184.500 74.300v-2h2M1189.500 72.300h2v2M1191.500 77.700v2h-2M1186.500 79.700h-2v-2"/>
<path d="M1184.800 90.700h6.500M1188 87.500v6.500"/>
<path d="M1184.800 105h6.500" stroke-width="1.400"/>
<path d="M1184.500 125h7M1188 121.500v7"/>
</g>
<path d="M1188 120.300l1.600 2h-3.200zM1188 129.700l1.600-2h-3.200zM1183.300 125l2-1.600v3.200zM1192.700 125l-2-1.600v3.200z" fill="#555"/>
<!-- bottom right view toggles -->
<rect x="1131" y="698.500" width="65" height="16" fill="#fff" stroke="#ececec"/>
<path d="M1162 699v15" stroke="#e2e2e2"/>
<g stroke="#4a4a4a" stroke-width="0.900"><circle cx="1139" cy="707.500" r="3.300"/><path d="M1139 707.500l3-4.500 3.600 6h-5"/><path d="M1149.500 705h6v6h-6zM1149.500 705l1.700-1.700h6v6l-1.700 1.700M1155.500 705l1.700-1.700"/></g>
<g stroke="#2b8fe6" stroke-width="1" fill="#8cc3f3"><rect x="1168.500" y="702.500" width="6" height="4"/><rect x="1184" y="704.500" width="7.500" height="5"/><rect x="1172.500" y="709.500" width="6" height="3" rx="1.500"/><path d="M1174.500 704.500l9.500 2.500M1178.500 711l5.500-3" fill="none"/></g>
<!-- status dropdown arrow -->
<path d="M66 733.500h5l-2.500 3z" fill="#cfcfcf"/>
</svg>
</div></body></html>
